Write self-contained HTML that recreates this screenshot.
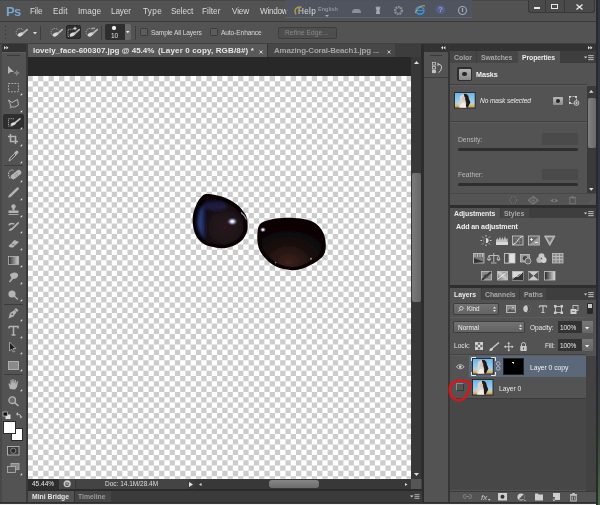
<!DOCTYPE html>
<html><head><meta charset="utf-8">
<style>
*{margin:0;padding:0;box-sizing:border-box}
html,body{width:600px;height:505px;overflow:hidden;background:#3a3a3a;font-family:"Liberation Sans",sans-serif;}
.a{position:absolute}
.t{position:absolute;white-space:nowrap;line-height:1;will-change:transform}
svg{position:absolute;overflow:visible}
.clip{overflow:hidden}
</style></head><body>
<div class="a" style="left:0px;top:0px;width:600px;height:505px;background:#3c3c3c;"></div>
<div class="a" style="left:0px;top:0px;width:596px;height:21px;background:#525252;"></div>
<div class="a" style="left:0px;top:0px;width:596px;height:1px;background:#474747;"></div>
<div class="a" style="left:0px;top:21px;width:596px;height:1px;background:#3a3a3a;"></div>
<div class="t" style="left:5.6px;top:4.70px;font-size:13px;color:#78a4d0;font-weight:bold;font-style:normal;letter-spacing:0px;letter-spacing:-0.6px">Ps</div>
<div class="t" style="left:29.94px;top:7.66px;font-size:8.2px;color:#dadada;font-weight:normal;font-style:normal;letter-spacing:-0.232px;">File</div>
<div class="t" style="left:53.24px;top:7.66px;font-size:8.2px;color:#dadada;font-weight:normal;font-style:normal;letter-spacing:0.124px;">Edit</div>
<div class="t" style="left:77.66px;top:7.66px;font-size:8.2px;color:#dadada;font-weight:normal;font-style:normal;letter-spacing:0.078px;">Image</div>
<div class="t" style="left:110.94px;top:7.66px;font-size:8.2px;color:#dadada;font-weight:normal;font-style:normal;letter-spacing:-0.155px;">Layer</div>
<div class="t" style="left:142.64px;top:7.66px;font-size:8.2px;color:#dadada;font-weight:normal;font-style:normal;letter-spacing:0.313px;">Type</div>
<div class="t" style="left:170.53px;top:7.66px;font-size:8.2px;color:#dadada;font-weight:normal;font-style:normal;letter-spacing:-0.117px;">Select</div>
<div class="t" style="left:201.84px;top:7.66px;font-size:8.2px;color:#dadada;font-weight:normal;font-style:normal;letter-spacing:0.051px;">Filter</div>
<div class="t" style="left:231.88px;top:7.66px;font-size:8.2px;color:#dadada;font-weight:normal;font-style:normal;letter-spacing:-0.177px;">View</div>
<div class="t" style="left:259.68px;top:7.66px;font-size:8.2px;color:#dadada;font-weight:normal;font-style:normal;letter-spacing:-0.274px;">Window</div>
<div class="a" style="left:285.8px;top:0px;width:186.5px;height:18.4px;background:rgba(78,84,98,0.82);border-bottom:0.8px solid rgba(110,118,134,0.45)"></div>
<div class="t" style="left:297.54px;top:7.66px;font-size:8.2px;color:#dadada;font-weight:normal;font-style:normal;letter-spacing:0.311px;">Help</div>
<svg style="left:293px;top:4.5px" width="11" height="11" viewBox="0 0 11 11"><path d="M3 9.5 Q1 6 3 3.5 Q5.5 1 8.5 2.5" stroke="#b89848" stroke-width="1.4" fill="none"/><path d="M4.5 6 L9.5 6" stroke="#a08838" stroke-width="1"/></svg>
<div class="t" style="left:318px;top:7.24px;font-size:5.5px;color:#8e949e;font-weight:bold;font-style:normal;letter-spacing:0px;">English</div>
<svg style="left:324.5px;top:15px" width="4" height="3" viewBox="0 0 4 3"><path d="M0 0 L4 0 L2 2z" fill="#aaa"/></svg>
<svg style="left:351px;top:8px" width="11" height="6" viewBox="0 0 11 6"><path d="M1 5 Q1 1 4 1 L7 1 Q10 1 10 5z" fill="#8a8f98"/></svg>
<svg style="left:374px;top:5px" width="8" height="10" viewBox="0 0 8 10"><path d="M2 9 L6 9 L5.5 5 Q7 3 6 1 L5 2.5 L4 1 L3 2.5 L2 1 Q1 3 2.5 5z" fill="#a4a8b0"/></svg>
<svg style="left:393px;top:4.5px" width="11" height="11" viewBox="0 0 11 11"><circle cx="5.5" cy="5.5" r="3.4" stroke="#8c9098" stroke-width="2.4" fill="none" stroke-dasharray="1.8 0.7"/><circle cx="5.5" cy="5.5" r="1.2" fill="#4a5060"/></svg>
<svg style="left:414px;top:3.5px" width="12" height="12" viewBox="0 0 12 12"><ellipse cx="6" cy="6.5" rx="4" ry="3.6" stroke="#3b8fd8" stroke-width="1.6" fill="none"/><path d="M2.5 6.5 L9.5 6.5" stroke="#3b8fd8" stroke-width="1.2"/><path d="M1 9 Q6 0 11 2" stroke="#d8b040" stroke-width="0.9" fill="none"/></svg>
<svg style="left:434.5px;top:4px" width="11" height="11" viewBox="0 0 11 11"><circle cx="5.5" cy="5.5" r="4.5" fill="#55618a"/><text x="5.5" y="8.3" font-size="7.5" text-anchor="middle" fill="#95a3c8" font-family="Liberation Sans" font-weight="bold">?</text></svg>
<svg style="left:456.5px;top:4.5px" width="11" height="11" viewBox="0 0 11 11"><circle cx="5.5" cy="5.5" r="4" stroke="#a4a8b0" stroke-width="1.1" fill="none"/><path d="M5.5 3 L5.5 7" stroke="#a4a8b0" stroke-width="1.2"/></svg>
<div class="a" style="left:528px;top:0px;width:67px;height:12.5px;background:#4a4a4a;border:1px solid #383838;border-top:none;border-radius:0 0 3px 3px"></div>
<div class="a" style="left:545px;top:0px;width:1px;height:12px;background:#393939;"></div>
<div class="a" style="left:563.5px;top:0px;width:1px;height:12px;background:#393939;"></div>
<div class="a" style="left:533.5px;top:6.5px;width:6.5px;height:2px;background:#e8e8e8;"></div>
<div class="a" style="left:551px;top:4.3px;width:7px;height:4.6px;background:transparent;border:1.3px solid #e8e8e8"></div>
<svg style="left:575.5px;top:3.5px" width="7" height="6" viewBox="0 0 7 6"><path d="M0.5 0.5 L6.5 5.5 M6.5 0.5 L0.5 5.5" stroke="#e8e8e8" stroke-width="1.4"/></svg>
<div class="a" style="left:0px;top:22px;width:596px;height:20.5px;background:#535353;"></div>
<div class="a" style="left:0px;top:42.5px;width:596px;height:1px;background:#404040;"></div>
<div class="a" style="left:4.5px;top:26.0px;width:1.2px;height:1.2px;background:#2e2e2e;"></div>
<div class="a" style="left:4.5px;top:29.5px;width:1.2px;height:1.2px;background:#2e2e2e;"></div>
<div class="a" style="left:4.5px;top:33.5px;width:1.2px;height:1.2px;background:#2e2e2e;"></div>
<div class="a" style="left:4.5px;top:37.5px;width:1.2px;height:1.2px;background:#2e2e2e;"></div>
<svg style="left:14.8px;top:26.8px" width="13" height="10" viewBox="0 0 13 10"><path d="M5.5 9.2 A3.9 3.9 0 1 1 8.3 3.2" stroke="#b8b8b8" stroke-width="0.85" fill="none" stroke-dasharray="1.3 0.9"/><ellipse cx="5.6" cy="7.4" rx="3.1" ry="1.7" transform="rotate(-25 5.6 7.4)" fill="#d8d8d8"/><path d="M8 6.2 L12.2 2.6" stroke="#b8b8b8" stroke-width="1.8" stroke-linecap="round"/></svg>
<svg style="left:33px;top:31.5px" width="4" height="3" viewBox="0 0 4 3"><path d="M0 0 L4 0 L2 2.5z" fill="#ddd"/></svg>
<div class="a" style="left:40.2px;top:25.5px;width:1px;height:14px;background:#3e3e3e;"></div>
<svg style="left:50.3px;top:26.8px" width="13" height="10" viewBox="0 0 13 10"><path d="M5.5 9.2 A3.9 3.9 0 1 1 8.3 3.2" stroke="#b8b8b8" stroke-width="0.85" fill="none" stroke-dasharray="1.3 0.9"/><ellipse cx="5.6" cy="7.4" rx="3.1" ry="1.7" transform="rotate(-25 5.6 7.4)" fill="#d8d8d8"/><path d="M8 6.2 L12.2 2.6" stroke="#b8b8b8" stroke-width="1.8" stroke-linecap="round"/></svg>
<div class="a" style="left:66.4px;top:25px;width:14.6px;height:14px;background:#2f2f2f;border-radius:2px;border:1px solid #262626"></div>
<svg style="left:67.2px;top:27px" width="13" height="10" viewBox="0 0 13 10"><path d="M6.5 2.3 L1 2.3 L1 9.5 L5 9.5" stroke="#b8b8b8" stroke-width="0.8" fill="none" stroke-dasharray="1.2 0.9"/><ellipse cx="5.6" cy="7.4" rx="3.1" ry="1.7" transform="rotate(-25 5.6 7.4)" fill="#d8d8d8"/><path d="M8 6.2 L12.2 2.6" stroke="#b8b8b8" stroke-width="1.8" stroke-linecap="round"/><path d="M8 -0.3 L8 3.1 M6.3 1.4 L9.7 1.4" stroke="#e8e8e8" stroke-width="0.9"/></svg>
<svg style="left:85px;top:26.8px" width="13" height="10" viewBox="0 0 13 10"><path d="M5.5 9.2 A3.9 3.9 0 1 1 8.3 3.2" stroke="#b8b8b8" stroke-width="0.85" fill="none" stroke-dasharray="1.3 0.9"/><ellipse cx="5.6" cy="7.4" rx="3.1" ry="1.7" transform="rotate(-25 5.6 7.4)" fill="#d8d8d8"/><path d="M8 6.2 L12.2 2.6" stroke="#b8b8b8" stroke-width="1.8" stroke-linecap="round"/><path d="M7 1.2 L10 1.2" stroke="#d0d0d0" stroke-width="0.9"/></svg>
<div class="a" style="left:101px;top:25.5px;width:1px;height:14px;background:#3e3e3e;"></div>
<div class="a" style="left:105px;top:24.4px;width:19.5px;height:15.2px;background:#2e2e2e;border-radius:2px 0 0 2px"></div>
<div class="a" style="left:111.9px;top:25.7px;width:4.6px;height:4.4px;background:#f4f4f4;border-radius:50%;box-shadow:0 0 1px #aaa"></div>
<div class="t" style="left:110.9px;top:33.30px;font-size:6.5px;color:#e4e4e4;font-weight:normal;font-style:normal;letter-spacing:0px;">10</div>
<div class="a" style="left:124.5px;top:24.4px;width:6px;height:15.2px;background:#6a6a6a;border-radius:0 2px 2px 0"></div>
<svg style="left:125.8px;top:31px" width="3.5" height="2.5" viewBox="0 0 3.5 2.5"><path d="M0 0 L3.5 0 L1.75 2.2z" fill="#eee"/></svg>
<div class="a" style="left:135px;top:25.5px;width:1px;height:14px;background:#3e3e3e;"></div>
<div class="a" style="left:139.6px;top:28px;width:8px;height:8.4px;background:#5c5c5c;border:1px solid #3a3a3a;border-radius:1.5px"></div>
<div class="t" style="left:151.2px;top:30.21px;font-size:6.6px;color:#d8d8d8;font-weight:normal;font-style:normal;letter-spacing:-0.12px;">Sample All Layers</div>
<div class="a" style="left:210px;top:28px;width:8px;height:8.4px;background:#5c5c5c;border:1px solid #3a3a3a;border-radius:1.5px"></div>
<div class="t" style="left:221.2px;top:30.21px;font-size:6.6px;color:#d8d8d8;font-weight:normal;font-style:normal;letter-spacing:-0.1px;">Auto-Enhance</div>
<div class="a" style="left:278px;top:27.3px;width:58.7px;height:11.4px;background:#4e4e4e;border:1px solid #3e3e3e;border-radius:2px"></div>
<div class="t" style="left:285px;top:30.21px;font-size:6.6px;color:#8a8a8a;font-weight:normal;font-style:normal;letter-spacing:0.1px;">Refine Edge...</div>
<div class="a" style="left:0px;top:43.5px;width:1.7px;height:459px;background:#484848;"></div>
<div class="a" style="left:1.7px;top:43.5px;width:24px;height:8px;background:#333333;"></div>
<svg style="left:3.8px;top:46px" width="5" height="3.5" viewBox="0 0 5 3.5"><path d="M0 0 L2 1.7 L0 3.4z M2.4 0 L4.4 1.7 L2.4 3.4z" fill="#e8e8e8"/></svg>
<div class="a" style="left:1.7px;top:51.5px;width:24px;height:451px;background:#535353;"></div>
<div class="a" style="left:1.7px;top:51.5px;width:24px;height:0.6px;background:#5e5e5e;"></div>
<div class="a" style="left:7px;top:55px;width:12.8px;height:0.8px;background:#3a3a3a;"></div>
<div class="a" style="left:25.7px;top:43.5px;width:2.3px;height:460px;background:#3a3a3a;"></div>
<svg style="left:7.7px;top:65.7px" width="12" height="10.5" viewBox="0 0 12 10.5"><path d="M0 0 L0 8 L2.5 6 L6 6z" fill="#b4b4b4"/><path d="M6.2 7 L11.2 7" stroke="#b4b4b4" stroke-width="0.9"/><rect x="8.2" y="4.6" width="1.1" height="1.1" fill="#b4b4b4"/><rect x="8.2" y="8.3" width="1.1" height="1.1" fill="#b4b4b4"/></svg>
<svg style="left:7.7px;top:83px" width="12" height="10.5" viewBox="0 0 12 10.5"><rect x="0.5" y="0.5" width="10" height="8.3" stroke="#b4b4b4" stroke-width="0.9" fill="none" stroke-dasharray="1.8 1.2"/></svg>
<svg style="left:7.7px;top:99px" width="12" height="10.5" viewBox="0 0 12 10.5"><path d="M0.5 1 L4 3.5 L9.5 0.5 L10.5 6 Q7 9 3 8 Q2.5 5 0.5 1z" stroke="#b4b4b4" stroke-width="1" fill="none"/><path d="M3 8 L2 9.5" stroke="#b4b4b4" stroke-width="0.8"/></svg>
<svg style="left:7.7px;top:117.5px" width="12" height="10.5" viewBox="0 0 12 10.5"><path d="M5.9 0.7 L0.5 0.7 L0.5 8.1 L5 8.1" stroke="#b4b4b4" stroke-width="0.8" fill="none" stroke-dasharray="1.2 0.9"/><ellipse cx="5.3" cy="5.9" rx="3" ry="1.5" transform="rotate(-25 5.3 5.9)" fill="#d8d8d8"/><path d="M7.6 4.4 L11.9 0.9" stroke="#b4b4b4" stroke-width="1.8" stroke-linecap="round"/></svg>
<svg style="left:7.7px;top:133.5px" width="12" height="10.5" viewBox="0 0 12 10.5"><path d="M2.5 0 L2.5 7.5 L10 7.5 M0 2.5 L7.5 2.5 L7.5 10" stroke="#b4b4b4" stroke-width="1.6" fill="none"/></svg>
<svg style="left:7.7px;top:150.8px" width="12" height="10.5" viewBox="0 0 12 10.5"><path d="M1 10 L2 7 L6.5 2.5 L8 4 L3.5 8.5z" stroke="#b4b4b4" stroke-width="1" fill="none"/><path d="M6 2 L8.5 -0.5 Q10.5 -0.5 10.5 1.5 L8.5 4z" fill="#b4b4b4"/></svg>
<div class="a" style="left:3.4px;top:114.2px;width:20.4px;height:14.6px;background:#2e2e2e;border-radius:2px"></div>
<svg style="left:7.7px;top:117.5px" width="12" height="10.5" viewBox="0 0 12 10.5"><path d="M5.9 0.7 L0.5 0.7 L0.5 8.1 L5 8.1" stroke="#c4c4c4" stroke-width="0.8" fill="none" stroke-dasharray="1.2 0.9"/><ellipse cx="5.3" cy="5.9" rx="3" ry="1.5" transform="rotate(-25 5.3 5.9)" fill="#d8d8d8"/><path d="M7.6 4.4 L11.9 0.9" stroke="#c4c4c4" stroke-width="1.8" stroke-linecap="round"/></svg>
<div class="a" style="left:4px;top:165px;width:19px;height:0.8px;background:#3c3c3c;"></div>
<svg style="left:7.7px;top:169.3px" width="12" height="11" viewBox="0 0 12 11"><path d="M2.2 9.5 Q-0.8 6 1.5 2.5 Q3.5 0 6 1.8" stroke="#b4b4b4" stroke-width="1.1" fill="none" stroke-dasharray="1.6 0.8"/><rect x="2" y="3" width="12" height="5.2" rx="2.6" transform="rotate(-38 8 5.6)" fill="#b4b4b4"/><g fill="#7a7a7a"><circle cx="7" cy="5.5" r="0.5"/><circle cx="8.6" cy="4.6" r="0.5"/><circle cx="7.8" cy="7" r="0.5"/><circle cx="9.4" cy="6" r="0.5"/></g></svg>
<svg style="left:7.7px;top:187px" width="12" height="11" viewBox="0 0 12 11"><path d="M2.6 8.4 L9.6 1.6" stroke="#b4b4b4" stroke-width="2.6" stroke-linecap="round"/><path d="M0.2 10.8 L1 7.6 L3.4 9.8z" fill="#b4b4b4"/></svg>
<svg style="left:7.7px;top:203.8px" width="12" height="11" viewBox="0 0 12 11"><circle cx="5.5" cy="2.5" r="2.2" fill="#b4b4b4"/><rect x="4.5" y="3.5" width="2" height="3" fill="#b4b4b4"/><rect x="0.5" y="6.5" width="10" height="2.5" fill="#b4b4b4"/><rect x="0.5" y="10" width="10" height="0.9" fill="#b4b4b4"/></svg>
<svg style="left:7.7px;top:221.6px" width="12" height="11" viewBox="0 0 12 11"><path d="M0.8 2.8 Q3 0.6 6.2 2" stroke="#b4b4b4" stroke-width="1.6" fill="none"/><path d="M0.2 3.2 L2 1.2 L2.4 3.6z" fill="#b4b4b4"/><path d="M0.5 9 Q1.5 5.8 4.6 6 Q5 8.8 0.5 9z" fill="#b4b4b4"/><path d="M4.2 6.8 L10.2 0.8" stroke="#b4b4b4" stroke-width="1.7" stroke-linecap="round"/></svg>
<svg style="left:7.7px;top:238.8px" width="12" height="11" viewBox="0 0 12 11"><path d="M0.5 7 L6.5 1 L11 3 L5 8.5 Q2 9 0.5 7z" fill="#b4b4b4"/><path d="M3 4.5 L7.5 6.5" stroke="#535353" stroke-width="0.6"/></svg>
<svg style="left:7.7px;top:256px" width="12" height="11" viewBox="0 0 12 11"><defs><linearGradient id="g1"><stop offset="0" stop-color="#333"/><stop offset="1" stop-color="#ccc"/></linearGradient></defs><rect x="0.5" y="0.5" width="10" height="8" fill="url(#g1)" stroke="#b4b4b4" stroke-width="0.8"/></svg>
<svg style="left:7.7px;top:271.8px" width="12" height="11" viewBox="0 0 12 11"><path d="M6 0.5 Q11 0.5 10 4 Q9 7 5 7 L2 10.5 L1 9.5 L3.5 6 Q1 3 3 1.5z" fill="#b4b4b4"/></svg>
<svg style="left:7.7px;top:289.6px" width="12" height="11" viewBox="0 0 12 11"><circle cx="4" cy="4" r="3.6" fill="#b4b4b4"/><path d="M6 6 L10 9.5" stroke="#b4b4b4" stroke-width="1.4"/></svg>
<div class="a" style="left:4px;top:304.4px;width:19px;height:0.8px;background:#3c3c3c;"></div>
<svg style="left:7.7px;top:308px" width="12" height="11" viewBox="0 0 12 11"><path d="M0.5 10.5 L2 5 L6.5 2 L8.5 4 L5.5 8.5z" fill="#b4b4b4"/><path d="M6.5 1.5 L8 0 L10.5 2.5 L9 4z" fill="#b4b4b4"/><circle cx="4.2" cy="6.2" r="0.9" fill="#535353"/></svg>
<svg style="left:7.7px;top:325.6px" width="12" height="11" viewBox="0 0 12 11"><path d="M1 0.5 L10 0.5 L10 2.5 M1 0.5 L1 2.5 M5.5 0.5 L5.5 9 M3.5 9 L7.5 9" stroke="#b4b4b4" stroke-width="1.5" fill="none"/></svg>
<svg style="left:7.7px;top:341.6px" width="12" height="11" viewBox="0 0 12 11"><path d="M1.5 0 L1.5 9 L3.5 7 L5 10 L6.5 9.5 L5 6.5 L8 6.5z" fill="#1e1e1e" stroke="#b4b4b4" stroke-width="0.8"/></svg>
<svg style="left:7.7px;top:360.6px" width="12" height="11" viewBox="0 0 12 11"><rect x="0.5" y="0.5" width="10" height="8" fill="#8a8a8a" stroke="#b4b4b4" stroke-width="0.9"/></svg>
<div class="a" style="left:4px;top:374.3px;width:19px;height:0.8px;background:#3c3c3c;"></div>
<svg style="left:7.7px;top:379px" width="12" height="11" viewBox="0 0 12 11"><path d="M2 10 L0.5 5 L1 4 L2.5 6 L2.5 1 L3.5 0.5 L4 5 L4.5 0 L5.5 0 L6 5 L6.8 0.7 L7.8 1 L7.8 5.5 L9 2 L10 2.5 L9 8 L7 10.5z" fill="#b4b4b4"/></svg>
<svg style="left:7.7px;top:395.6px" width="12" height="11" viewBox="0 0 12 11"><circle cx="4.2" cy="4.2" r="3.3" stroke="#b4b4b4" stroke-width="1.3" fill="#6a6a6a"/><path d="M6.5 6.5 L10.5 10" stroke="#b4b4b4" stroke-width="1.6"/></svg>
<svg style="left:19.5px;top:93px" width="2.2" height="2.2" viewBox="0 0 2.2 2.2"><path d="M2.2 0 L2.2 2.2 L0 2.2z" fill="#ddd"/></svg>
<svg style="left:19.5px;top:109.5px" width="2.2" height="2.2" viewBox="0 0 2.2 2.2"><path d="M2.2 0 L2.2 2.2 L0 2.2z" fill="#ddd"/></svg>
<svg style="left:19.5px;top:127px" width="2.2" height="2.2" viewBox="0 0 2.2 2.2"><path d="M2.2 0 L2.2 2.2 L0 2.2z" fill="#ddd"/></svg>
<svg style="left:19.5px;top:144px" width="2.2" height="2.2" viewBox="0 0 2.2 2.2"><path d="M2.2 0 L2.2 2.2 L0 2.2z" fill="#ddd"/></svg>
<svg style="left:19.5px;top:160.5px" width="2.2" height="2.2" viewBox="0 0 2.2 2.2"><path d="M2.2 0 L2.2 2.2 L0 2.2z" fill="#ddd"/></svg>
<svg style="left:19.5px;top:180px" width="2.2" height="2.2" viewBox="0 0 2.2 2.2"><path d="M2.2 0 L2.2 2.2 L0 2.2z" fill="#ddd"/></svg>
<svg style="left:19.5px;top:197.5px" width="2.2" height="2.2" viewBox="0 0 2.2 2.2"><path d="M2.2 0 L2.2 2.2 L0 2.2z" fill="#ddd"/></svg>
<svg style="left:19.5px;top:214.5px" width="2.2" height="2.2" viewBox="0 0 2.2 2.2"><path d="M2.2 0 L2.2 2.2 L0 2.2z" fill="#ddd"/></svg>
<svg style="left:19.5px;top:231px" width="2.2" height="2.2" viewBox="0 0 2.2 2.2"><path d="M2.2 0 L2.2 2.2 L0 2.2z" fill="#ddd"/></svg>
<svg style="left:19.5px;top:247.5px" width="2.2" height="2.2" viewBox="0 0 2.2 2.2"><path d="M2.2 0 L2.2 2.2 L0 2.2z" fill="#ddd"/></svg>
<svg style="left:19.5px;top:265px" width="2.2" height="2.2" viewBox="0 0 2.2 2.2"><path d="M2.2 0 L2.2 2.2 L0 2.2z" fill="#ddd"/></svg>
<svg style="left:19.5px;top:282px" width="2.2" height="2.2" viewBox="0 0 2.2 2.2"><path d="M2.2 0 L2.2 2.2 L0 2.2z" fill="#ddd"/></svg>
<svg style="left:19.5px;top:299px" width="2.2" height="2.2" viewBox="0 0 2.2 2.2"><path d="M2.2 0 L2.2 2.2 L0 2.2z" fill="#ddd"/></svg>
<svg style="left:19.5px;top:318.5px" width="2.2" height="2.2" viewBox="0 0 2.2 2.2"><path d="M2.2 0 L2.2 2.2 L0 2.2z" fill="#ddd"/></svg>
<svg style="left:19.5px;top:335.5px" width="2.2" height="2.2" viewBox="0 0 2.2 2.2"><path d="M2.2 0 L2.2 2.2 L0 2.2z" fill="#ddd"/></svg>
<svg style="left:19.5px;top:352px" width="2.2" height="2.2" viewBox="0 0 2.2 2.2"><path d="M2.2 0 L2.2 2.2 L0 2.2z" fill="#ddd"/></svg>
<svg style="left:19.5px;top:369px" width="2.2" height="2.2" viewBox="0 0 2.2 2.2"><path d="M2.2 0 L2.2 2.2 L0 2.2z" fill="#ddd"/></svg>
<svg style="left:19.5px;top:388.5px" width="2.2" height="2.2" viewBox="0 0 2.2 2.2"><path d="M2.2 0 L2.2 2.2 L0 2.2z" fill="#ddd"/></svg>
<svg style="left:3px;top:411.5px" width="8" height="7" viewBox="0 0 8 7"><rect x="2.5" y="2.5" width="5" height="4.5" fill="#ddd"/><rect x="0" y="0" width="4.5" height="4" fill="#111" stroke="#ddd" stroke-width="0.6"/></svg>
<svg style="left:14.5px;top:410.5px" width="7.5" height="7" viewBox="0 0 7.5 7"><path d="M1 3 L3 1 L3 5z" fill="#bbb"/><path d="M2.5 3 Q6 3 6 6.5" stroke="#bbb" stroke-width="1" fill="none"/><path d="M4.5 5.5 L7.5 5.5 L6 7.5z" fill="#bbb"/></svg>
<div class="a" style="left:10.5px;top:428.3px;width:12.3px;height:12.9px;background:#ffffff;border:0.8px solid #2a2a2a"></div>
<div class="a" style="left:3.4px;top:421.2px;width:12.8px;height:13.3px;background:#ffffff;border:0.8px solid #2a2a2a"></div>
<svg style="left:7px;top:446px" width="12.5" height="9.5" viewBox="0 0 12.5 9.5"><rect x="0.5" y="0.5" width="11.5" height="8.5" fill="#3e3e3e" stroke="#b4b4b4" stroke-width="0.9"/><circle cx="6.25" cy="4.75" r="2.6" fill="#2a2a2a" stroke="#999" stroke-width="0.8"/></svg>
<svg style="left:7px;top:463.2px" width="12.5" height="10" viewBox="0 0 12.5 10"><rect x="4" y="0.5" width="8" height="6" fill="#888" stroke="#b4b4b4" stroke-width="0.8"/><rect x="0.5" y="3.5" width="8" height="6" fill="#5a5a5a" stroke="#b4b4b4" stroke-width="0.8"/></svg>
<svg style="left:19.5px;top:472.5px" width="2.2" height="2.2" viewBox="0 0 2.2 2.2"><path d="M2.2 0 L2.2 2.2 L0 2.2z" fill="#ddd"/></svg>
<div class="a" style="left:28px;top:44px;width:393px;height:12.5px;background:#3d3d3d;"></div>
<div class="a" style="left:28px;top:44px;width:238.7px;height:12.5px;background:#595959;"></div>
<div class="a" style="left:266.7px;top:44px;width:1px;height:12.5px;background:#333;"></div>
<div class="a" style="left:267.7px;top:44px;width:127.3px;height:12.5px;background:#474747;"></div>
<div class="t" style="left:33.2px;top:46.83px;font-size:8px;color:#e6e6e6;font-weight:bold;font-style:normal;letter-spacing:-0.01px;">lovely_face-600307.jpg @ 45.4%</div>
<div class="t" style="left:157.6px;top:46.83px;font-size:8px;color:#e6e6e6;font-weight:bold;font-style:normal;letter-spacing:0.15px;">(Layer 0 copy, RGB/8#) *</div>
<svg style="left:258.8px;top:49.5px" width="4" height="4" viewBox="0 0 4 4"><path d="M0.5 0.5 L3.5 3.5 M3.5 0.5 L0.5 3.5" stroke="#ddd" stroke-width="0.9"/></svg>
<div class="t" style="left:273.7px;top:46.91px;font-size:7.9px;color:#a4a4a4;font-weight:bold;font-style:normal;letter-spacing:-0.147px;">Amazing-Coral-Beach1.jpg ...</div>
<svg style="left:386.8px;top:49.5px" width="4" height="4" viewBox="0 0 4 4"><path d="M0.5 0.5 L3.5 3.5 M3.5 0.5 L0.5 3.5" stroke="#ccc" stroke-width="0.9"/></svg>
<div class="a" style="left:27.5px;top:56.5px;width:384px;height:422.2px;background:#282828;"></div>
<div class="a" style="left:27.5px;top:76px;width:383.5px;height:402.7px;background:#ffffff;"></div>
<svg style="left:27.5px;top:76px" width="383.5" height="402.7" viewBox="0 0 383.5 402.7"><path d="M0.00 0.00h4.77v5.27h-4.77zM10.03 0.00h5.27v5.27h-5.27zM20.56 0.00h5.27v5.27h-5.27zM31.09 0.00h5.27v5.27h-5.27zM41.62 0.00h5.27v5.27h-5.27zM52.15 0.00h5.27v5.27h-5.27zM62.68 0.00h5.27v5.27h-5.27zM73.21 0.00h5.27v5.27h-5.27zM83.74 0.00h5.27v5.27h-5.27zM94.27 0.00h5.27v5.27h-5.27zM104.80 0.00h5.26v5.27h-5.26zM115.33 0.00h5.26v5.27h-5.26zM125.86 0.00h5.26v5.27h-5.26zM136.39 0.00h5.26v5.27h-5.26zM146.92 0.00h5.26v5.27h-5.26zM157.45 0.00h5.26v5.27h-5.26zM167.98 0.00h5.26v5.27h-5.26zM178.51 0.00h5.26v5.27h-5.26zM189.04 0.00h5.26v5.27h-5.26zM199.57 0.00h5.26v5.27h-5.26zM210.10 0.00h5.26v5.27h-5.26zM220.63 0.00h5.26v5.27h-5.26zM231.16 0.00h5.26v5.27h-5.26zM241.69 0.00h5.26v5.27h-5.26zM252.22 0.00h5.26v5.27h-5.26zM262.75 0.00h5.26v5.27h-5.26zM273.28 0.00h5.26v5.27h-5.26zM283.81 0.00h5.26v5.27h-5.26zM294.34 0.00h5.26v5.27h-5.26zM304.87 0.00h5.26v5.27h-5.26zM315.40 0.00h5.26v5.27h-5.26zM325.93 0.00h5.26v5.27h-5.26zM336.46 0.00h5.26v5.27h-5.26zM346.99 0.00h5.26v5.27h-5.26zM357.52 0.00h5.26v5.27h-5.26zM368.05 0.00h5.26v5.27h-5.26zM378.58 0.00h4.92v5.27h-4.92zM4.77 5.27h5.27v5.27h-5.27zM15.30 5.27h5.27v5.27h-5.27zM25.83 5.27h5.27v5.27h-5.27zM36.35 5.27h5.26v5.27h-5.26zM46.88 5.27h5.27v5.27h-5.27zM57.41 5.27h5.27v5.27h-5.27zM67.94 5.27h5.27v5.27h-5.27zM78.47 5.27h5.27v5.27h-5.27zM89.00 5.27h5.27v5.27h-5.27zM99.53 5.27h5.26v5.27h-5.26zM110.06 5.27h5.26v5.27h-5.26zM120.59 5.27h5.26v5.27h-5.26zM131.12 5.27h5.26v5.27h-5.26zM141.66 5.27h5.26v5.27h-5.26zM152.19 5.27h5.26v5.27h-5.26zM162.72 5.27h5.26v5.27h-5.26zM173.24 5.27h5.26v5.27h-5.26zM183.77 5.27h5.26v5.27h-5.26zM194.30 5.27h5.26v5.27h-5.26zM204.83 5.27h5.26v5.27h-5.26zM215.36 5.27h5.26v5.27h-5.26zM225.89 5.27h5.26v5.27h-5.26zM236.42 5.27h5.26v5.27h-5.26zM246.95 5.27h5.26v5.27h-5.26zM257.48 5.27h5.26v5.27h-5.26zM268.01 5.27h5.26v5.27h-5.26zM278.54 5.27h5.26v5.27h-5.26zM289.07 5.27h5.26v5.27h-5.26zM299.60 5.27h5.26v5.27h-5.26zM310.13 5.27h5.26v5.27h-5.26zM320.66 5.27h5.26v5.27h-5.26zM331.19 5.27h5.26v5.27h-5.26zM341.72 5.27h5.26v5.27h-5.26zM352.25 5.27h5.26v5.27h-5.26zM362.78 5.27h5.26v5.27h-5.26zM373.31 5.27h5.26v5.27h-5.26zM0.00 10.53h4.77v5.27h-4.77zM10.03 10.53h5.27v5.27h-5.27zM20.56 10.53h5.27v5.27h-5.27zM31.09 10.53h5.27v5.27h-5.27zM41.62 10.53h5.27v5.27h-5.27zM52.15 10.53h5.27v5.27h-5.27zM62.68 10.53h5.27v5.27h-5.27zM73.21 10.53h5.27v5.27h-5.27zM83.74 10.53h5.27v5.27h-5.27zM94.27 10.53h5.27v5.27h-5.27zM104.80 10.53h5.26v5.27h-5.26zM115.33 10.53h5.26v5.27h-5.26zM125.86 10.53h5.26v5.27h-5.26zM136.39 10.53h5.26v5.27h-5.26zM146.92 10.53h5.26v5.27h-5.26zM157.45 10.53h5.26v5.27h-5.26zM167.98 10.53h5.26v5.27h-5.26zM178.51 10.53h5.26v5.27h-5.26zM189.04 10.53h5.26v5.27h-5.26zM199.57 10.53h5.26v5.27h-5.26zM210.10 10.53h5.26v5.27h-5.26zM220.63 10.53h5.26v5.27h-5.26zM231.16 10.53h5.26v5.27h-5.26zM241.69 10.53h5.26v5.27h-5.26zM252.22 10.53h5.26v5.27h-5.26zM262.75 10.53h5.26v5.27h-5.26zM273.28 10.53h5.26v5.27h-5.26zM283.81 10.53h5.26v5.27h-5.26zM294.34 10.53h5.26v5.27h-5.26zM304.87 10.53h5.26v5.27h-5.26zM315.40 10.53h5.26v5.27h-5.26zM325.93 10.53h5.26v5.27h-5.26zM336.46 10.53h5.26v5.27h-5.26zM346.99 10.53h5.26v5.27h-5.26zM357.52 10.53h5.26v5.27h-5.26zM368.05 10.53h5.26v5.27h-5.26zM378.58 10.53h4.92v5.27h-4.92zM4.77 15.80h5.27v5.27h-5.27zM15.30 15.80h5.27v5.27h-5.27zM25.83 15.80h5.27v5.27h-5.27zM36.35 15.80h5.26v5.27h-5.26zM46.88 15.80h5.27v5.27h-5.27zM57.41 15.80h5.27v5.27h-5.27zM67.94 15.80h5.27v5.27h-5.27zM78.47 15.80h5.27v5.27h-5.27zM89.00 15.80h5.27v5.27h-5.27zM99.53 15.80h5.26v5.27h-5.26zM110.06 15.80h5.26v5.27h-5.26zM120.59 15.80h5.26v5.27h-5.26zM131.12 15.80h5.26v5.27h-5.26zM141.66 15.80h5.26v5.27h-5.26zM152.19 15.80h5.26v5.27h-5.26zM162.72 15.80h5.26v5.27h-5.26zM173.24 15.80h5.26v5.27h-5.26zM183.77 15.80h5.26v5.27h-5.26zM194.30 15.80h5.26v5.27h-5.26zM204.83 15.80h5.26v5.27h-5.26zM215.36 15.80h5.26v5.27h-5.26zM225.89 15.80h5.26v5.27h-5.26zM236.42 15.80h5.26v5.27h-5.26zM246.95 15.80h5.26v5.27h-5.26zM257.48 15.80h5.26v5.27h-5.26zM268.01 15.80h5.26v5.27h-5.26zM278.54 15.80h5.26v5.27h-5.26zM289.07 15.80h5.26v5.27h-5.26zM299.60 15.80h5.26v5.27h-5.26zM310.13 15.80h5.26v5.27h-5.26zM320.66 15.80h5.26v5.27h-5.26zM331.19 15.80h5.26v5.27h-5.26zM341.72 15.80h5.26v5.27h-5.26zM352.25 15.80h5.26v5.27h-5.26zM362.78 15.80h5.26v5.27h-5.26zM373.31 15.80h5.26v5.27h-5.26zM0.00 21.06h4.77v5.27h-4.77zM10.03 21.06h5.27v5.27h-5.27zM20.56 21.06h5.27v5.27h-5.27zM31.09 21.06h5.27v5.27h-5.27zM41.62 21.06h5.27v5.27h-5.27zM52.15 21.06h5.27v5.27h-5.27zM62.68 21.06h5.27v5.27h-5.27zM73.21 21.06h5.27v5.27h-5.27zM83.74 21.06h5.27v5.27h-5.27zM94.27 21.06h5.27v5.27h-5.27zM104.80 21.06h5.26v5.27h-5.26zM115.33 21.06h5.26v5.27h-5.26zM125.86 21.06h5.26v5.27h-5.26zM136.39 21.06h5.26v5.27h-5.26zM146.92 21.06h5.26v5.27h-5.26zM157.45 21.06h5.26v5.27h-5.26zM167.98 21.06h5.26v5.27h-5.26zM178.51 21.06h5.26v5.27h-5.26zM189.04 21.06h5.26v5.27h-5.26zM199.57 21.06h5.26v5.27h-5.26zM210.10 21.06h5.26v5.27h-5.26zM220.63 21.06h5.26v5.27h-5.26zM231.16 21.06h5.26v5.27h-5.26zM241.69 21.06h5.26v5.27h-5.26zM252.22 21.06h5.26v5.27h-5.26zM262.75 21.06h5.26v5.27h-5.26zM273.28 21.06h5.26v5.27h-5.26zM283.81 21.06h5.26v5.27h-5.26zM294.34 21.06h5.26v5.27h-5.26zM304.87 21.06h5.26v5.27h-5.26zM315.40 21.06h5.26v5.27h-5.26zM325.93 21.06h5.26v5.27h-5.26zM336.46 21.06h5.26v5.27h-5.26zM346.99 21.06h5.26v5.27h-5.26zM357.52 21.06h5.26v5.27h-5.26zM368.05 21.06h5.26v5.27h-5.26zM378.58 21.06h4.92v5.27h-4.92zM4.77 26.33h5.27v5.27h-5.27zM15.30 26.33h5.27v5.27h-5.27zM25.83 26.33h5.27v5.27h-5.27zM36.35 26.33h5.26v5.27h-5.26zM46.88 26.33h5.27v5.27h-5.27zM57.41 26.33h5.27v5.27h-5.27zM67.94 26.33h5.27v5.27h-5.27zM78.47 26.33h5.27v5.27h-5.27zM89.00 26.33h5.27v5.27h-5.27zM99.53 26.33h5.26v5.27h-5.26zM110.06 26.33h5.26v5.27h-5.26zM120.59 26.33h5.26v5.27h-5.26zM131.12 26.33h5.26v5.27h-5.26zM141.66 26.33h5.26v5.27h-5.26zM152.19 26.33h5.26v5.27h-5.26zM162.72 26.33h5.26v5.27h-5.26zM173.24 26.33h5.26v5.27h-5.26zM183.77 26.33h5.26v5.27h-5.26zM194.30 26.33h5.26v5.27h-5.26zM204.83 26.33h5.26v5.27h-5.26zM215.36 26.33h5.26v5.27h-5.26zM225.89 26.33h5.26v5.27h-5.26zM236.42 26.33h5.26v5.27h-5.26zM246.95 26.33h5.26v5.27h-5.26zM257.48 26.33h5.26v5.27h-5.26zM268.01 26.33h5.26v5.27h-5.26zM278.54 26.33h5.26v5.27h-5.26zM289.07 26.33h5.26v5.27h-5.26zM299.60 26.33h5.26v5.27h-5.26zM310.13 26.33h5.26v5.27h-5.26zM320.66 26.33h5.26v5.27h-5.26zM331.19 26.33h5.26v5.27h-5.26zM341.72 26.33h5.26v5.27h-5.26zM352.25 26.33h5.26v5.27h-5.26zM362.78 26.33h5.26v5.27h-5.26zM373.31 26.33h5.26v5.27h-5.26zM0.00 31.59h4.77v5.27h-4.77zM10.03 31.59h5.27v5.27h-5.27zM20.56 31.59h5.27v5.27h-5.27zM31.09 31.59h5.27v5.27h-5.27zM41.62 31.59h5.27v5.27h-5.27zM52.15 31.59h5.27v5.27h-5.27zM62.68 31.59h5.27v5.27h-5.27zM73.21 31.59h5.27v5.27h-5.27zM83.74 31.59h5.27v5.27h-5.27zM94.27 31.59h5.27v5.27h-5.27zM104.80 31.59h5.26v5.27h-5.26zM115.33 31.59h5.26v5.27h-5.26zM125.86 31.59h5.26v5.27h-5.26zM136.39 31.59h5.26v5.27h-5.26zM146.92 31.59h5.26v5.27h-5.26zM157.45 31.59h5.26v5.27h-5.26zM167.98 31.59h5.26v5.27h-5.26zM178.51 31.59h5.26v5.27h-5.26zM189.04 31.59h5.26v5.27h-5.26zM199.57 31.59h5.26v5.27h-5.26zM210.10 31.59h5.26v5.27h-5.26zM220.63 31.59h5.26v5.27h-5.26zM231.16 31.59h5.26v5.27h-5.26zM241.69 31.59h5.26v5.27h-5.26zM252.22 31.59h5.26v5.27h-5.26zM262.75 31.59h5.26v5.27h-5.26zM273.28 31.59h5.26v5.27h-5.26zM283.81 31.59h5.26v5.27h-5.26zM294.34 31.59h5.26v5.27h-5.26zM304.87 31.59h5.26v5.27h-5.26zM315.40 31.59h5.26v5.27h-5.26zM325.93 31.59h5.26v5.27h-5.26zM336.46 31.59h5.26v5.27h-5.26zM346.99 31.59h5.26v5.27h-5.26zM357.52 31.59h5.26v5.27h-5.26zM368.05 31.59h5.26v5.27h-5.26zM378.58 31.59h4.92v5.27h-4.92zM4.77 36.85h5.27v5.27h-5.27zM15.30 36.85h5.27v5.27h-5.27zM25.83 36.85h5.27v5.27h-5.27zM36.35 36.85h5.26v5.27h-5.26zM46.88 36.85h5.27v5.27h-5.27zM57.41 36.85h5.27v5.27h-5.27zM67.94 36.85h5.27v5.27h-5.27zM78.47 36.85h5.27v5.27h-5.27zM89.00 36.85h5.27v5.27h-5.27zM99.53 36.85h5.26v5.27h-5.26zM110.06 36.85h5.26v5.27h-5.26zM120.59 36.85h5.26v5.27h-5.26zM131.12 36.85h5.26v5.27h-5.26zM141.66 36.85h5.26v5.27h-5.26zM152.19 36.85h5.26v5.27h-5.26zM162.72 36.85h5.26v5.27h-5.26zM173.24 36.85h5.26v5.27h-5.26zM183.77 36.85h5.26v5.27h-5.26zM194.30 36.85h5.26v5.27h-5.26zM204.83 36.85h5.26v5.27h-5.26zM215.36 36.85h5.26v5.27h-5.26zM225.89 36.85h5.26v5.27h-5.26zM236.42 36.85h5.26v5.27h-5.26zM246.95 36.85h5.26v5.27h-5.26zM257.48 36.85h5.26v5.27h-5.26zM268.01 36.85h5.26v5.27h-5.26zM278.54 36.85h5.26v5.27h-5.26zM289.07 36.85h5.26v5.27h-5.26zM299.60 36.85h5.26v5.27h-5.26zM310.13 36.85h5.26v5.27h-5.26zM320.66 36.85h5.26v5.27h-5.26zM331.19 36.85h5.26v5.27h-5.26zM341.72 36.85h5.26v5.27h-5.26zM352.25 36.85h5.26v5.27h-5.26zM362.78 36.85h5.26v5.27h-5.26zM373.31 36.85h5.26v5.27h-5.26zM0.00 42.12h4.77v5.27h-4.77zM10.03 42.12h5.27v5.27h-5.27zM20.56 42.12h5.27v5.27h-5.27zM31.09 42.12h5.27v5.27h-5.27zM41.62 42.12h5.27v5.27h-5.27zM52.15 42.12h5.27v5.27h-5.27zM62.68 42.12h5.27v5.27h-5.27zM73.21 42.12h5.27v5.27h-5.27zM83.74 42.12h5.27v5.27h-5.27zM94.27 42.12h5.27v5.27h-5.27zM104.80 42.12h5.26v5.27h-5.26zM115.33 42.12h5.26v5.27h-5.26zM125.86 42.12h5.26v5.27h-5.26zM136.39 42.12h5.26v5.27h-5.26zM146.92 42.12h5.26v5.27h-5.26zM157.45 42.12h5.26v5.27h-5.26zM167.98 42.12h5.26v5.27h-5.26zM178.51 42.12h5.26v5.27h-5.26zM189.04 42.12h5.26v5.27h-5.26zM199.57 42.12h5.26v5.27h-5.26zM210.10 42.12h5.26v5.27h-5.26zM220.63 42.12h5.26v5.27h-5.26zM231.16 42.12h5.26v5.27h-5.26zM241.69 42.12h5.26v5.27h-5.26zM252.22 42.12h5.26v5.27h-5.26zM262.75 42.12h5.26v5.27h-5.26zM273.28 42.12h5.26v5.27h-5.26zM283.81 42.12h5.26v5.27h-5.26zM294.34 42.12h5.26v5.27h-5.26zM304.87 42.12h5.26v5.27h-5.26zM315.40 42.12h5.26v5.27h-5.26zM325.93 42.12h5.26v5.27h-5.26zM336.46 42.12h5.26v5.27h-5.26zM346.99 42.12h5.26v5.27h-5.26zM357.52 42.12h5.26v5.27h-5.26zM368.05 42.12h5.26v5.27h-5.26zM378.58 42.12h4.92v5.27h-4.92zM4.77 47.38h5.27v5.26h-5.27zM15.30 47.38h5.27v5.26h-5.27zM25.83 47.38h5.27v5.26h-5.27zM36.35 47.38h5.26v5.26h-5.26zM46.88 47.38h5.27v5.26h-5.27zM57.41 47.38h5.27v5.26h-5.27zM67.94 47.38h5.27v5.26h-5.27zM78.47 47.38h5.27v5.26h-5.27zM89.00 47.38h5.27v5.26h-5.27zM99.53 47.38h5.26v5.26h-5.26zM110.06 47.38h5.26v5.26h-5.26zM120.59 47.38h5.26v5.26h-5.26zM131.12 47.38h5.26v5.26h-5.26zM141.66 47.38h5.26v5.26h-5.26zM152.19 47.38h5.26v5.26h-5.26zM162.72 47.38h5.26v5.26h-5.26zM173.24 47.38h5.26v5.26h-5.26zM183.77 47.38h5.26v5.26h-5.26zM194.30 47.38h5.26v5.26h-5.26zM204.83 47.38h5.26v5.26h-5.26zM215.36 47.38h5.26v5.26h-5.26zM225.89 47.38h5.26v5.26h-5.26zM236.42 47.38h5.26v5.26h-5.26zM246.95 47.38h5.26v5.26h-5.26zM257.48 47.38h5.26v5.26h-5.26zM268.01 47.38h5.26v5.26h-5.26zM278.54 47.38h5.26v5.26h-5.26zM289.07 47.38h5.26v5.26h-5.26zM299.60 47.38h5.26v5.26h-5.26zM310.13 47.38h5.26v5.26h-5.26zM320.66 47.38h5.26v5.26h-5.26zM331.19 47.38h5.26v5.26h-5.26zM341.72 47.38h5.26v5.26h-5.26zM352.25 47.38h5.26v5.26h-5.26zM362.78 47.38h5.26v5.26h-5.26zM373.31 47.38h5.26v5.26h-5.26zM0.00 52.65h4.77v5.26h-4.77zM10.03 52.65h5.27v5.26h-5.27zM20.56 52.65h5.27v5.26h-5.27zM31.09 52.65h5.27v5.26h-5.27zM41.62 52.65h5.27v5.26h-5.27zM52.15 52.65h5.27v5.26h-5.27zM62.68 52.65h5.27v5.26h-5.27zM73.21 52.65h5.27v5.26h-5.27zM83.74 52.65h5.27v5.26h-5.27zM94.27 52.65h5.27v5.26h-5.27zM104.80 52.65h5.26v5.26h-5.26zM115.33 52.65h5.26v5.26h-5.26zM125.86 52.65h5.26v5.26h-5.26zM136.39 52.65h5.26v5.26h-5.26zM146.92 52.65h5.26v5.26h-5.26zM157.45 52.65h5.26v5.26h-5.26zM167.98 52.65h5.26v5.26h-5.26zM178.51 52.65h5.26v5.26h-5.26zM189.04 52.65h5.26v5.26h-5.26zM199.57 52.65h5.26v5.26h-5.26zM210.10 52.65h5.26v5.26h-5.26zM220.63 52.65h5.26v5.26h-5.26zM231.16 52.65h5.26v5.26h-5.26zM241.69 52.65h5.26v5.26h-5.26zM252.22 52.65h5.26v5.26h-5.26zM262.75 52.65h5.26v5.26h-5.26zM273.28 52.65h5.26v5.26h-5.26zM283.81 52.65h5.26v5.26h-5.26zM294.34 52.65h5.26v5.26h-5.26zM304.87 52.65h5.26v5.26h-5.26zM315.40 52.65h5.26v5.26h-5.26zM325.93 52.65h5.26v5.26h-5.26zM336.46 52.65h5.26v5.26h-5.26zM346.99 52.65h5.26v5.26h-5.26zM357.52 52.65h5.26v5.26h-5.26zM368.05 52.65h5.26v5.26h-5.26zM378.58 52.65h4.92v5.26h-4.92zM4.77 57.91h5.27v5.26h-5.27zM15.30 57.91h5.27v5.26h-5.27zM25.83 57.91h5.27v5.26h-5.27zM36.35 57.91h5.26v5.26h-5.26zM46.88 57.91h5.27v5.26h-5.27zM57.41 57.91h5.27v5.26h-5.27zM67.94 57.91h5.27v5.26h-5.27zM78.47 57.91h5.27v5.26h-5.27zM89.00 57.91h5.27v5.26h-5.27zM99.53 57.91h5.26v5.26h-5.26zM110.06 57.91h5.26v5.26h-5.26zM120.59 57.91h5.26v5.26h-5.26zM131.12 57.91h5.26v5.26h-5.26zM141.66 57.91h5.26v5.26h-5.26zM152.19 57.91h5.26v5.26h-5.26zM162.72 57.91h5.26v5.26h-5.26zM173.24 57.91h5.26v5.26h-5.26zM183.77 57.91h5.26v5.26h-5.26zM194.30 57.91h5.26v5.26h-5.26zM204.83 57.91h5.26v5.26h-5.26zM215.36 57.91h5.26v5.26h-5.26zM225.89 57.91h5.26v5.26h-5.26zM236.42 57.91h5.26v5.26h-5.26zM246.95 57.91h5.26v5.26h-5.26zM257.48 57.91h5.26v5.26h-5.26zM268.01 57.91h5.26v5.26h-5.26zM278.54 57.91h5.26v5.26h-5.26zM289.07 57.91h5.26v5.26h-5.26zM299.60 57.91h5.26v5.26h-5.26zM310.13 57.91h5.26v5.26h-5.26zM320.66 57.91h5.26v5.26h-5.26zM331.19 57.91h5.26v5.26h-5.26zM341.72 57.91h5.26v5.26h-5.26zM352.25 57.91h5.26v5.26h-5.26zM362.78 57.91h5.26v5.26h-5.26zM373.31 57.91h5.26v5.26h-5.26zM0.00 63.18h4.77v5.26h-4.77zM10.03 63.18h5.27v5.26h-5.27zM20.56 63.18h5.27v5.26h-5.27zM31.09 63.18h5.27v5.26h-5.27zM41.62 63.18h5.27v5.26h-5.27zM52.15 63.18h5.27v5.26h-5.27zM62.68 63.18h5.27v5.26h-5.27zM73.21 63.18h5.27v5.26h-5.27zM83.74 63.18h5.27v5.26h-5.27zM94.27 63.18h5.27v5.26h-5.27zM104.80 63.18h5.26v5.26h-5.26zM115.33 63.18h5.26v5.26h-5.26zM125.86 63.18h5.26v5.26h-5.26zM136.39 63.18h5.26v5.26h-5.26zM146.92 63.18h5.26v5.26h-5.26zM157.45 63.18h5.26v5.26h-5.26zM167.98 63.18h5.26v5.26h-5.26zM178.51 63.18h5.26v5.26h-5.26zM189.04 63.18h5.26v5.26h-5.26zM199.57 63.18h5.26v5.26h-5.26zM210.10 63.18h5.26v5.26h-5.26zM220.63 63.18h5.26v5.26h-5.26zM231.16 63.18h5.26v5.26h-5.26zM241.69 63.18h5.26v5.26h-5.26zM252.22 63.18h5.26v5.26h-5.26zM262.75 63.18h5.26v5.26h-5.26zM273.28 63.18h5.26v5.26h-5.26zM283.81 63.18h5.26v5.26h-5.26zM294.34 63.18h5.26v5.26h-5.26zM304.87 63.18h5.26v5.26h-5.26zM315.40 63.18h5.26v5.26h-5.26zM325.93 63.18h5.26v5.26h-5.26zM336.46 63.18h5.26v5.26h-5.26zM346.99 63.18h5.26v5.26h-5.26zM357.52 63.18h5.26v5.26h-5.26zM368.05 63.18h5.26v5.26h-5.26zM378.58 63.18h4.92v5.26h-4.92zM4.77 68.44h5.27v5.26h-5.27zM15.30 68.44h5.27v5.26h-5.27zM25.83 68.44h5.27v5.26h-5.27zM36.35 68.44h5.26v5.26h-5.26zM46.88 68.44h5.27v5.26h-5.27zM57.41 68.44h5.27v5.26h-5.27zM67.94 68.44h5.27v5.26h-5.27zM78.47 68.44h5.27v5.26h-5.27zM89.00 68.44h5.27v5.26h-5.27zM99.53 68.44h5.26v5.26h-5.26zM110.06 68.44h5.26v5.26h-5.26zM120.59 68.44h5.26v5.26h-5.26zM131.12 68.44h5.26v5.26h-5.26zM141.66 68.44h5.26v5.26h-5.26zM152.19 68.44h5.26v5.26h-5.26zM162.72 68.44h5.26v5.26h-5.26zM173.24 68.44h5.26v5.26h-5.26zM183.77 68.44h5.26v5.26h-5.26zM194.30 68.44h5.26v5.26h-5.26zM204.83 68.44h5.26v5.26h-5.26zM215.36 68.44h5.26v5.26h-5.26zM225.89 68.44h5.26v5.26h-5.26zM236.42 68.44h5.26v5.26h-5.26zM246.95 68.44h5.26v5.26h-5.26zM257.48 68.44h5.26v5.26h-5.26zM268.01 68.44h5.26v5.26h-5.26zM278.54 68.44h5.26v5.26h-5.26zM289.07 68.44h5.26v5.26h-5.26zM299.60 68.44h5.26v5.26h-5.26zM310.13 68.44h5.26v5.26h-5.26zM320.66 68.44h5.26v5.26h-5.26zM331.19 68.44h5.26v5.26h-5.26zM341.72 68.44h5.26v5.26h-5.26zM352.25 68.44h5.26v5.26h-5.26zM362.78 68.44h5.26v5.26h-5.26zM373.31 68.44h5.26v5.26h-5.26zM0.00 73.71h4.77v5.26h-4.77zM10.03 73.71h5.27v5.26h-5.27zM20.56 73.71h5.27v5.26h-5.27zM31.09 73.71h5.27v5.26h-5.27zM41.62 73.71h5.27v5.26h-5.27zM52.15 73.71h5.27v5.26h-5.27zM62.68 73.71h5.27v5.26h-5.27zM73.21 73.71h5.27v5.26h-5.27zM83.74 73.71h5.27v5.26h-5.27zM94.27 73.71h5.27v5.26h-5.27zM104.80 73.71h5.26v5.26h-5.26zM115.33 73.71h5.26v5.26h-5.26zM125.86 73.71h5.26v5.26h-5.26zM136.39 73.71h5.26v5.26h-5.26zM146.92 73.71h5.26v5.26h-5.26zM157.45 73.71h5.26v5.26h-5.26zM167.98 73.71h5.26v5.26h-5.26zM178.51 73.71h5.26v5.26h-5.26zM189.04 73.71h5.26v5.26h-5.26zM199.57 73.71h5.26v5.26h-5.26zM210.10 73.71h5.26v5.26h-5.26zM220.63 73.71h5.26v5.26h-5.26zM231.16 73.71h5.26v5.26h-5.26zM241.69 73.71h5.26v5.26h-5.26zM252.22 73.71h5.26v5.26h-5.26zM262.75 73.71h5.26v5.26h-5.26zM273.28 73.71h5.26v5.26h-5.26zM283.81 73.71h5.26v5.26h-5.26zM294.34 73.71h5.26v5.26h-5.26zM304.87 73.71h5.26v5.26h-5.26zM315.40 73.71h5.26v5.26h-5.26zM325.93 73.71h5.26v5.26h-5.26zM336.46 73.71h5.26v5.26h-5.26zM346.99 73.71h5.26v5.26h-5.26zM357.52 73.71h5.26v5.26h-5.26zM368.05 73.71h5.26v5.26h-5.26zM378.58 73.71h4.92v5.26h-4.92zM4.77 78.97h5.27v5.26h-5.27zM15.30 78.97h5.27v5.26h-5.27zM25.83 78.97h5.27v5.26h-5.27zM36.35 78.97h5.26v5.26h-5.26zM46.88 78.97h5.27v5.26h-5.27zM57.41 78.97h5.27v5.26h-5.27zM67.94 78.97h5.27v5.26h-5.27zM78.47 78.97h5.27v5.26h-5.27zM89.00 78.97h5.27v5.26h-5.27zM99.53 78.97h5.26v5.26h-5.26zM110.06 78.97h5.26v5.26h-5.26zM120.59 78.97h5.26v5.26h-5.26zM131.12 78.97h5.26v5.26h-5.26zM141.66 78.97h5.26v5.26h-5.26zM152.19 78.97h5.26v5.26h-5.26zM162.72 78.97h5.26v5.26h-5.26zM173.24 78.97h5.26v5.26h-5.26zM183.77 78.97h5.26v5.26h-5.26zM194.30 78.97h5.26v5.26h-5.26zM204.83 78.97h5.26v5.26h-5.26zM215.36 78.97h5.26v5.26h-5.26zM225.89 78.97h5.26v5.26h-5.26zM236.42 78.97h5.26v5.26h-5.26zM246.95 78.97h5.26v5.26h-5.26zM257.48 78.97h5.26v5.26h-5.26zM268.01 78.97h5.26v5.26h-5.26zM278.54 78.97h5.26v5.26h-5.26zM289.07 78.97h5.26v5.26h-5.26zM299.60 78.97h5.26v5.26h-5.26zM310.13 78.97h5.26v5.26h-5.26zM320.66 78.97h5.26v5.26h-5.26zM331.19 78.97h5.26v5.26h-5.26zM341.72 78.97h5.26v5.26h-5.26zM352.25 78.97h5.26v5.26h-5.26zM362.78 78.97h5.26v5.26h-5.26zM373.31 78.97h5.26v5.26h-5.26zM0.00 84.24h4.77v5.26h-4.77zM10.03 84.24h5.27v5.26h-5.27zM20.56 84.24h5.27v5.26h-5.27zM31.09 84.24h5.27v5.26h-5.27zM41.62 84.24h5.27v5.26h-5.27zM52.15 84.24h5.27v5.26h-5.27zM62.68 84.24h5.27v5.26h-5.27zM73.21 84.24h5.27v5.26h-5.27zM83.74 84.24h5.27v5.26h-5.27zM94.27 84.24h5.27v5.26h-5.27zM104.80 84.24h5.26v5.26h-5.26zM115.33 84.24h5.26v5.26h-5.26zM125.86 84.24h5.26v5.26h-5.26zM136.39 84.24h5.26v5.26h-5.26zM146.92 84.24h5.26v5.26h-5.26zM157.45 84.24h5.26v5.26h-5.26zM167.98 84.24h5.26v5.26h-5.26zM178.51 84.24h5.26v5.26h-5.26zM189.04 84.24h5.26v5.26h-5.26zM199.57 84.24h5.26v5.26h-5.26zM210.10 84.24h5.26v5.26h-5.26zM220.63 84.24h5.26v5.26h-5.26zM231.16 84.24h5.26v5.26h-5.26zM241.69 84.24h5.26v5.26h-5.26zM252.22 84.24h5.26v5.26h-5.26zM262.75 84.24h5.26v5.26h-5.26zM273.28 84.24h5.26v5.26h-5.26zM283.81 84.24h5.26v5.26h-5.26zM294.34 84.24h5.26v5.26h-5.26zM304.87 84.24h5.26v5.26h-5.26zM315.40 84.24h5.26v5.26h-5.26zM325.93 84.24h5.26v5.26h-5.26zM336.46 84.24h5.26v5.26h-5.26zM346.99 84.24h5.26v5.26h-5.26zM357.52 84.24h5.26v5.26h-5.26zM368.05 84.24h5.26v5.26h-5.26zM378.58 84.24h4.92v5.26h-4.92zM4.77 89.50h5.27v5.26h-5.27zM15.30 89.50h5.27v5.26h-5.27zM25.83 89.50h5.27v5.26h-5.27zM36.35 89.50h5.26v5.26h-5.26zM46.88 89.50h5.27v5.26h-5.27zM57.41 89.50h5.27v5.26h-5.27zM67.94 89.50h5.27v5.26h-5.27zM78.47 89.50h5.27v5.26h-5.27zM89.00 89.50h5.27v5.26h-5.27zM99.53 89.50h5.26v5.26h-5.26zM110.06 89.50h5.26v5.26h-5.26zM120.59 89.50h5.26v5.26h-5.26zM131.12 89.50h5.26v5.26h-5.26zM141.66 89.50h5.26v5.26h-5.26zM152.19 89.50h5.26v5.26h-5.26zM162.72 89.50h5.26v5.26h-5.26zM173.24 89.50h5.26v5.26h-5.26zM183.77 89.50h5.26v5.26h-5.26zM194.30 89.50h5.26v5.26h-5.26zM204.83 89.50h5.26v5.26h-5.26zM215.36 89.50h5.26v5.26h-5.26zM225.89 89.50h5.26v5.26h-5.26zM236.42 89.50h5.26v5.26h-5.26zM246.95 89.50h5.26v5.26h-5.26zM257.48 89.50h5.26v5.26h-5.26zM268.01 89.50h5.26v5.26h-5.26zM278.54 89.50h5.26v5.26h-5.26zM289.07 89.50h5.26v5.26h-5.26zM299.60 89.50h5.26v5.26h-5.26zM310.13 89.50h5.26v5.26h-5.26zM320.66 89.50h5.26v5.26h-5.26zM331.19 89.50h5.26v5.26h-5.26zM341.72 89.50h5.26v5.26h-5.26zM352.25 89.50h5.26v5.26h-5.26zM362.78 89.50h5.26v5.26h-5.26zM373.31 89.50h5.26v5.26h-5.26zM0.00 94.77h4.77v5.26h-4.77zM10.03 94.77h5.27v5.26h-5.27zM20.56 94.77h5.27v5.26h-5.27zM31.09 94.77h5.27v5.26h-5.27zM41.62 94.77h5.27v5.26h-5.27zM52.15 94.77h5.27v5.26h-5.27zM62.68 94.77h5.27v5.26h-5.27zM73.21 94.77h5.27v5.26h-5.27zM83.74 94.77h5.27v5.26h-5.27zM94.27 94.77h5.27v5.26h-5.27zM104.80 94.77h5.26v5.26h-5.26zM115.33 94.77h5.26v5.26h-5.26zM125.86 94.77h5.26v5.26h-5.26zM136.39 94.77h5.26v5.26h-5.26zM146.92 94.77h5.26v5.26h-5.26zM157.45 94.77h5.26v5.26h-5.26zM167.98 94.77h5.26v5.26h-5.26zM178.51 94.77h5.26v5.26h-5.26zM189.04 94.77h5.26v5.26h-5.26zM199.57 94.77h5.26v5.26h-5.26zM210.10 94.77h5.26v5.26h-5.26zM220.63 94.77h5.26v5.26h-5.26zM231.16 94.77h5.26v5.26h-5.26zM241.69 94.77h5.26v5.26h-5.26zM252.22 94.77h5.26v5.26h-5.26zM262.75 94.77h5.26v5.26h-5.26zM273.28 94.77h5.26v5.26h-5.26zM283.81 94.77h5.26v5.26h-5.26zM294.34 94.77h5.26v5.26h-5.26zM304.87 94.77h5.26v5.26h-5.26zM315.40 94.77h5.26v5.26h-5.26zM325.93 94.77h5.26v5.26h-5.26zM336.46 94.77h5.26v5.26h-5.26zM346.99 94.77h5.26v5.26h-5.26zM357.52 94.77h5.26v5.26h-5.26zM368.05 94.77h5.26v5.26h-5.26zM378.58 94.77h4.92v5.26h-4.92zM4.77 100.03h5.27v5.26h-5.27zM15.30 100.03h5.27v5.26h-5.27zM25.83 100.03h5.27v5.26h-5.27zM36.35 100.03h5.26v5.26h-5.26zM46.88 100.03h5.27v5.26h-5.27zM57.41 100.03h5.27v5.26h-5.27zM67.94 100.03h5.27v5.26h-5.27zM78.47 100.03h5.27v5.26h-5.27zM89.00 100.03h5.27v5.26h-5.27zM99.53 100.03h5.26v5.26h-5.26zM110.06 100.03h5.26v5.26h-5.26zM120.59 100.03h5.26v5.26h-5.26zM131.12 100.03h5.26v5.26h-5.26zM141.66 100.03h5.26v5.26h-5.26zM152.19 100.03h5.26v5.26h-5.26zM162.72 100.03h5.26v5.26h-5.26zM173.24 100.03h5.26v5.26h-5.26zM183.77 100.03h5.26v5.26h-5.26zM194.30 100.03h5.26v5.26h-5.26zM204.83 100.03h5.26v5.26h-5.26zM215.36 100.03h5.26v5.26h-5.26zM225.89 100.03h5.26v5.26h-5.26zM236.42 100.03h5.26v5.26h-5.26zM246.95 100.03h5.26v5.26h-5.26zM257.48 100.03h5.26v5.26h-5.26zM268.01 100.03h5.26v5.26h-5.26zM278.54 100.03h5.26v5.26h-5.26zM289.07 100.03h5.26v5.26h-5.26zM299.60 100.03h5.26v5.26h-5.26zM310.13 100.03h5.26v5.26h-5.26zM320.66 100.03h5.26v5.26h-5.26zM331.19 100.03h5.26v5.26h-5.26zM341.72 100.03h5.26v5.26h-5.26zM352.25 100.03h5.26v5.26h-5.26zM362.78 100.03h5.26v5.26h-5.26zM373.31 100.03h5.26v5.26h-5.26zM0.00 105.30h4.77v5.26h-4.77zM10.03 105.30h5.27v5.26h-5.27zM20.56 105.30h5.27v5.26h-5.27zM31.09 105.30h5.27v5.26h-5.27zM41.62 105.30h5.27v5.26h-5.27zM52.15 105.30h5.27v5.26h-5.27zM62.68 105.30h5.27v5.26h-5.27zM73.21 105.30h5.27v5.26h-5.27zM83.74 105.30h5.27v5.26h-5.27zM94.27 105.30h5.27v5.26h-5.27zM104.80 105.30h5.26v5.26h-5.26zM115.33 105.30h5.26v5.26h-5.26zM125.86 105.30h5.26v5.26h-5.26zM136.39 105.30h5.26v5.26h-5.26zM146.92 105.30h5.26v5.26h-5.26zM157.45 105.30h5.26v5.26h-5.26zM167.98 105.30h5.26v5.26h-5.26zM178.51 105.30h5.26v5.26h-5.26zM189.04 105.30h5.26v5.26h-5.26zM199.57 105.30h5.26v5.26h-5.26zM210.10 105.30h5.26v5.26h-5.26zM220.63 105.30h5.26v5.26h-5.26zM231.16 105.30h5.26v5.26h-5.26zM241.69 105.30h5.26v5.26h-5.26zM252.22 105.30h5.26v5.26h-5.26zM262.75 105.30h5.26v5.26h-5.26zM273.28 105.30h5.26v5.26h-5.26zM283.81 105.30h5.26v5.26h-5.26zM294.34 105.30h5.26v5.26h-5.26zM304.87 105.30h5.26v5.26h-5.26zM315.40 105.30h5.26v5.26h-5.26zM325.93 105.30h5.26v5.26h-5.26zM336.46 105.30h5.26v5.26h-5.26zM346.99 105.30h5.26v5.26h-5.26zM357.52 105.30h5.26v5.26h-5.26zM368.05 105.30h5.26v5.26h-5.26zM378.58 105.30h4.92v5.26h-4.92zM4.77 110.56h5.27v5.26h-5.27zM15.30 110.56h5.27v5.26h-5.27zM25.83 110.56h5.27v5.26h-5.27zM36.35 110.56h5.26v5.26h-5.26zM46.88 110.56h5.27v5.26h-5.27zM57.41 110.56h5.27v5.26h-5.27zM67.94 110.56h5.27v5.26h-5.27zM78.47 110.56h5.27v5.26h-5.27zM89.00 110.56h5.27v5.26h-5.27zM99.53 110.56h5.26v5.26h-5.26zM110.06 110.56h5.26v5.26h-5.26zM120.59 110.56h5.26v5.26h-5.26zM131.12 110.56h5.26v5.26h-5.26zM141.66 110.56h5.26v5.26h-5.26zM152.19 110.56h5.26v5.26h-5.26zM162.72 110.56h5.26v5.26h-5.26zM173.24 110.56h5.26v5.26h-5.26zM183.77 110.56h5.26v5.26h-5.26zM194.30 110.56h5.26v5.26h-5.26zM204.83 110.56h5.26v5.26h-5.26zM215.36 110.56h5.26v5.26h-5.26zM225.89 110.56h5.26v5.26h-5.26zM236.42 110.56h5.26v5.26h-5.26zM246.95 110.56h5.26v5.26h-5.26zM257.48 110.56h5.26v5.26h-5.26zM268.01 110.56h5.26v5.26h-5.26zM278.54 110.56h5.26v5.26h-5.26zM289.07 110.56h5.26v5.26h-5.26zM299.60 110.56h5.26v5.26h-5.26zM310.13 110.56h5.26v5.26h-5.26zM320.66 110.56h5.26v5.26h-5.26zM331.19 110.56h5.26v5.26h-5.26zM341.72 110.56h5.26v5.26h-5.26zM352.25 110.56h5.26v5.26h-5.26zM362.78 110.56h5.26v5.26h-5.26zM373.31 110.56h5.26v5.26h-5.26zM0.00 115.83h4.77v5.26h-4.77zM10.03 115.83h5.27v5.26h-5.27zM20.56 115.83h5.27v5.26h-5.27zM31.09 115.83h5.27v5.26h-5.27zM41.62 115.83h5.27v5.26h-5.27zM52.15 115.83h5.27v5.26h-5.27zM62.68 115.83h5.27v5.26h-5.27zM73.21 115.83h5.27v5.26h-5.27zM83.74 115.83h5.27v5.26h-5.27zM94.27 115.83h5.27v5.26h-5.27zM104.80 115.83h5.26v5.26h-5.26zM115.33 115.83h5.26v5.26h-5.26zM125.86 115.83h5.26v5.26h-5.26zM136.39 115.83h5.26v5.26h-5.26zM146.92 115.83h5.26v5.26h-5.26zM157.45 115.83h5.26v5.26h-5.26zM167.98 115.83h5.26v5.26h-5.26zM178.51 115.83h5.26v5.26h-5.26zM189.04 115.83h5.26v5.26h-5.26zM199.57 115.83h5.26v5.26h-5.26zM210.10 115.83h5.26v5.26h-5.26zM220.63 115.83h5.26v5.26h-5.26zM231.16 115.83h5.26v5.26h-5.26zM241.69 115.83h5.26v5.26h-5.26zM252.22 115.83h5.26v5.26h-5.26zM262.75 115.83h5.26v5.26h-5.26zM273.28 115.83h5.26v5.26h-5.26zM283.81 115.83h5.26v5.26h-5.26zM294.34 115.83h5.26v5.26h-5.26zM304.87 115.83h5.26v5.26h-5.26zM315.40 115.83h5.26v5.26h-5.26zM325.93 115.83h5.26v5.26h-5.26zM336.46 115.83h5.26v5.26h-5.26zM346.99 115.83h5.26v5.26h-5.26zM357.52 115.83h5.26v5.26h-5.26zM368.05 115.83h5.26v5.26h-5.26zM378.58 115.83h4.92v5.26h-4.92zM4.77 121.09h5.27v5.26h-5.27zM15.30 121.09h5.27v5.26h-5.27zM25.83 121.09h5.27v5.26h-5.27zM36.35 121.09h5.26v5.26h-5.26zM46.88 121.09h5.27v5.26h-5.27zM57.41 121.09h5.27v5.26h-5.27zM67.94 121.09h5.27v5.26h-5.27zM78.47 121.09h5.27v5.26h-5.27zM89.00 121.09h5.27v5.26h-5.27zM99.53 121.09h5.26v5.26h-5.26zM110.06 121.09h5.26v5.26h-5.26zM120.59 121.09h5.26v5.26h-5.26zM131.12 121.09h5.26v5.26h-5.26zM141.66 121.09h5.26v5.26h-5.26zM152.19 121.09h5.26v5.26h-5.26zM162.72 121.09h5.26v5.26h-5.26zM173.24 121.09h5.26v5.26h-5.26zM183.77 121.09h5.26v5.26h-5.26zM194.30 121.09h5.26v5.26h-5.26zM204.83 121.09h5.26v5.26h-5.26zM215.36 121.09h5.26v5.26h-5.26zM225.89 121.09h5.26v5.26h-5.26zM236.42 121.09h5.26v5.26h-5.26zM246.95 121.09h5.26v5.26h-5.26zM257.48 121.09h5.26v5.26h-5.26zM268.01 121.09h5.26v5.26h-5.26zM278.54 121.09h5.26v5.26h-5.26zM289.07 121.09h5.26v5.26h-5.26zM299.60 121.09h5.26v5.26h-5.26zM310.13 121.09h5.26v5.26h-5.26zM320.66 121.09h5.26v5.26h-5.26zM331.19 121.09h5.26v5.26h-5.26zM341.72 121.09h5.26v5.26h-5.26zM352.25 121.09h5.26v5.26h-5.26zM362.78 121.09h5.26v5.26h-5.26zM373.31 121.09h5.26v5.26h-5.26zM0.00 126.36h4.77v5.26h-4.77zM10.03 126.36h5.27v5.26h-5.27zM20.56 126.36h5.27v5.26h-5.27zM31.09 126.36h5.27v5.26h-5.27zM41.62 126.36h5.27v5.26h-5.27zM52.15 126.36h5.27v5.26h-5.27zM62.68 126.36h5.27v5.26h-5.27zM73.21 126.36h5.27v5.26h-5.27zM83.74 126.36h5.27v5.26h-5.27zM94.27 126.36h5.27v5.26h-5.27zM104.80 126.36h5.26v5.26h-5.26zM115.33 126.36h5.26v5.26h-5.26zM125.86 126.36h5.26v5.26h-5.26zM136.39 126.36h5.26v5.26h-5.26zM146.92 126.36h5.26v5.26h-5.26zM157.45 126.36h5.26v5.26h-5.26zM167.98 126.36h5.26v5.26h-5.26zM178.51 126.36h5.26v5.26h-5.26zM189.04 126.36h5.26v5.26h-5.26zM199.57 126.36h5.26v5.26h-5.26zM210.10 126.36h5.26v5.26h-5.26zM220.63 126.36h5.26v5.26h-5.26zM231.16 126.36h5.26v5.26h-5.26zM241.69 126.36h5.26v5.26h-5.26zM252.22 126.36h5.26v5.26h-5.26zM262.75 126.36h5.26v5.26h-5.26zM273.28 126.36h5.26v5.26h-5.26zM283.81 126.36h5.26v5.26h-5.26zM294.34 126.36h5.26v5.26h-5.26zM304.87 126.36h5.26v5.26h-5.26zM315.40 126.36h5.26v5.26h-5.26zM325.93 126.36h5.26v5.26h-5.26zM336.46 126.36h5.26v5.26h-5.26zM346.99 126.36h5.26v5.26h-5.26zM357.52 126.36h5.26v5.26h-5.26zM368.05 126.36h5.26v5.26h-5.26zM378.58 126.36h4.92v5.26h-4.92zM4.77 131.62h5.27v5.26h-5.27zM15.30 131.62h5.27v5.26h-5.27zM25.83 131.62h5.27v5.26h-5.27zM36.35 131.62h5.26v5.26h-5.26zM46.88 131.62h5.27v5.26h-5.27zM57.41 131.62h5.27v5.26h-5.27zM67.94 131.62h5.27v5.26h-5.27zM78.47 131.62h5.27v5.26h-5.27zM89.00 131.62h5.27v5.26h-5.27zM99.53 131.62h5.26v5.26h-5.26zM110.06 131.62h5.26v5.26h-5.26zM120.59 131.62h5.26v5.26h-5.26zM131.12 131.62h5.26v5.26h-5.26zM141.66 131.62h5.26v5.26h-5.26zM152.19 131.62h5.26v5.26h-5.26zM162.72 131.62h5.26v5.26h-5.26zM173.24 131.62h5.26v5.26h-5.26zM183.77 131.62h5.26v5.26h-5.26zM194.30 131.62h5.26v5.26h-5.26zM204.83 131.62h5.26v5.26h-5.26zM215.36 131.62h5.26v5.26h-5.26zM225.89 131.62h5.26v5.26h-5.26zM236.42 131.62h5.26v5.26h-5.26zM246.95 131.62h5.26v5.26h-5.26zM257.48 131.62h5.26v5.26h-5.26zM268.01 131.62h5.26v5.26h-5.26zM278.54 131.62h5.26v5.26h-5.26zM289.07 131.62h5.26v5.26h-5.26zM299.60 131.62h5.26v5.26h-5.26zM310.13 131.62h5.26v5.26h-5.26zM320.66 131.62h5.26v5.26h-5.26zM331.19 131.62h5.26v5.26h-5.26zM341.72 131.62h5.26v5.26h-5.26zM352.25 131.62h5.26v5.26h-5.26zM362.78 131.62h5.26v5.26h-5.26zM373.31 131.62h5.26v5.26h-5.26zM0.00 136.89h4.77v5.26h-4.77zM10.03 136.89h5.27v5.26h-5.27zM20.56 136.89h5.27v5.26h-5.27zM31.09 136.89h5.27v5.26h-5.27zM41.62 136.89h5.27v5.26h-5.27zM52.15 136.89h5.27v5.26h-5.27zM62.68 136.89h5.27v5.26h-5.27zM73.21 136.89h5.27v5.26h-5.27zM83.74 136.89h5.27v5.26h-5.27zM94.27 136.89h5.27v5.26h-5.27zM104.80 136.89h5.26v5.26h-5.26zM115.33 136.89h5.26v5.26h-5.26zM125.86 136.89h5.26v5.26h-5.26zM136.39 136.89h5.26v5.26h-5.26zM146.92 136.89h5.26v5.26h-5.26zM157.45 136.89h5.26v5.26h-5.26zM167.98 136.89h5.26v5.26h-5.26zM178.51 136.89h5.26v5.26h-5.26zM189.04 136.89h5.26v5.26h-5.26zM199.57 136.89h5.26v5.26h-5.26zM210.10 136.89h5.26v5.26h-5.26zM220.63 136.89h5.26v5.26h-5.26zM231.16 136.89h5.26v5.26h-5.26zM241.69 136.89h5.26v5.26h-5.26zM252.22 136.89h5.26v5.26h-5.26zM262.75 136.89h5.26v5.26h-5.26zM273.28 136.89h5.26v5.26h-5.26zM283.81 136.89h5.26v5.26h-5.26zM294.34 136.89h5.26v5.26h-5.26zM304.87 136.89h5.26v5.26h-5.26zM315.40 136.89h5.26v5.26h-5.26zM325.93 136.89h5.26v5.26h-5.26zM336.46 136.89h5.26v5.26h-5.26zM346.99 136.89h5.26v5.26h-5.26zM357.52 136.89h5.26v5.26h-5.26zM368.05 136.89h5.26v5.26h-5.26zM378.58 136.89h4.92v5.26h-4.92zM4.77 142.16h5.27v5.26h-5.27zM15.30 142.16h5.27v5.26h-5.27zM25.83 142.16h5.27v5.26h-5.27zM36.35 142.16h5.26v5.26h-5.26zM46.88 142.16h5.27v5.26h-5.27zM57.41 142.16h5.27v5.26h-5.27zM67.94 142.16h5.27v5.26h-5.27zM78.47 142.16h5.27v5.26h-5.27zM89.00 142.16h5.27v5.26h-5.27zM99.53 142.16h5.26v5.26h-5.26zM110.06 142.16h5.26v5.26h-5.26zM120.59 142.16h5.26v5.26h-5.26zM131.12 142.16h5.26v5.26h-5.26zM141.66 142.16h5.26v5.26h-5.26zM152.19 142.16h5.26v5.26h-5.26zM162.72 142.16h5.26v5.26h-5.26zM173.24 142.16h5.26v5.26h-5.26zM183.77 142.16h5.26v5.26h-5.26zM194.30 142.16h5.26v5.26h-5.26zM204.83 142.16h5.26v5.26h-5.26zM215.36 142.16h5.26v5.26h-5.26zM225.89 142.16h5.26v5.26h-5.26zM236.42 142.16h5.26v5.26h-5.26zM246.95 142.16h5.26v5.26h-5.26zM257.48 142.16h5.26v5.26h-5.26zM268.01 142.16h5.26v5.26h-5.26zM278.54 142.16h5.26v5.26h-5.26zM289.07 142.16h5.26v5.26h-5.26zM299.60 142.16h5.26v5.26h-5.26zM310.13 142.16h5.26v5.26h-5.26zM320.66 142.16h5.26v5.26h-5.26zM331.19 142.16h5.26v5.26h-5.26zM341.72 142.16h5.26v5.26h-5.26zM352.25 142.16h5.26v5.26h-5.26zM362.78 142.16h5.26v5.26h-5.26zM373.31 142.16h5.26v5.26h-5.26zM0.00 147.42h4.77v5.26h-4.77zM10.03 147.42h5.27v5.26h-5.27zM20.56 147.42h5.27v5.26h-5.27zM31.09 147.42h5.27v5.26h-5.27zM41.62 147.42h5.27v5.26h-5.27zM52.15 147.42h5.27v5.26h-5.27zM62.68 147.42h5.27v5.26h-5.27zM73.21 147.42h5.27v5.26h-5.27zM83.74 147.42h5.27v5.26h-5.27zM94.27 147.42h5.27v5.26h-5.27zM104.80 147.42h5.26v5.26h-5.26zM115.33 147.42h5.26v5.26h-5.26zM125.86 147.42h5.26v5.26h-5.26zM136.39 147.42h5.26v5.26h-5.26zM146.92 147.42h5.26v5.26h-5.26zM157.45 147.42h5.26v5.26h-5.26zM167.98 147.42h5.26v5.26h-5.26zM178.51 147.42h5.26v5.26h-5.26zM189.04 147.42h5.26v5.26h-5.26zM199.57 147.42h5.26v5.26h-5.26zM210.10 147.42h5.26v5.26h-5.26zM220.63 147.42h5.26v5.26h-5.26zM231.16 147.42h5.26v5.26h-5.26zM241.69 147.42h5.26v5.26h-5.26zM252.22 147.42h5.26v5.26h-5.26zM262.75 147.42h5.26v5.26h-5.26zM273.28 147.42h5.26v5.26h-5.26zM283.81 147.42h5.26v5.26h-5.26zM294.34 147.42h5.26v5.26h-5.26zM304.87 147.42h5.26v5.26h-5.26zM315.40 147.42h5.26v5.26h-5.26zM325.93 147.42h5.26v5.26h-5.26zM336.46 147.42h5.26v5.26h-5.26zM346.99 147.42h5.26v5.26h-5.26zM357.52 147.42h5.26v5.26h-5.26zM368.05 147.42h5.26v5.26h-5.26zM378.58 147.42h4.92v5.26h-4.92zM4.77 152.69h5.27v5.26h-5.27zM15.30 152.69h5.27v5.26h-5.27zM25.83 152.69h5.27v5.26h-5.27zM36.35 152.69h5.26v5.26h-5.26zM46.88 152.69h5.27v5.26h-5.27zM57.41 152.69h5.27v5.26h-5.27zM67.94 152.69h5.27v5.26h-5.27zM78.47 152.69h5.27v5.26h-5.27zM89.00 152.69h5.27v5.26h-5.27zM99.53 152.69h5.26v5.26h-5.26zM110.06 152.69h5.26v5.26h-5.26zM120.59 152.69h5.26v5.26h-5.26zM131.12 152.69h5.26v5.26h-5.26zM141.66 152.69h5.26v5.26h-5.26zM152.19 152.69h5.26v5.26h-5.26zM162.72 152.69h5.26v5.26h-5.26zM173.24 152.69h5.26v5.26h-5.26zM183.77 152.69h5.26v5.26h-5.26zM194.30 152.69h5.26v5.26h-5.26zM204.83 152.69h5.26v5.26h-5.26zM215.36 152.69h5.26v5.26h-5.26zM225.89 152.69h5.26v5.26h-5.26zM236.42 152.69h5.26v5.26h-5.26zM246.95 152.69h5.26v5.26h-5.26zM257.48 152.69h5.26v5.26h-5.26zM268.01 152.69h5.26v5.26h-5.26zM278.54 152.69h5.26v5.26h-5.26zM289.07 152.69h5.26v5.26h-5.26zM299.60 152.69h5.26v5.26h-5.26zM310.13 152.69h5.26v5.26h-5.26zM320.66 152.69h5.26v5.26h-5.26zM331.19 152.69h5.26v5.26h-5.26zM341.72 152.69h5.26v5.26h-5.26zM352.25 152.69h5.26v5.26h-5.26zM362.78 152.69h5.26v5.26h-5.26zM373.31 152.69h5.26v5.26h-5.26zM0.00 157.95h4.77v5.26h-4.77zM10.03 157.95h5.27v5.26h-5.27zM20.56 157.95h5.27v5.26h-5.27zM31.09 157.95h5.27v5.26h-5.27zM41.62 157.95h5.27v5.26h-5.27zM52.15 157.95h5.27v5.26h-5.27zM62.68 157.95h5.27v5.26h-5.27zM73.21 157.95h5.27v5.26h-5.27zM83.74 157.95h5.27v5.26h-5.27zM94.27 157.95h5.27v5.26h-5.27zM104.80 157.95h5.26v5.26h-5.26zM115.33 157.95h5.26v5.26h-5.26zM125.86 157.95h5.26v5.26h-5.26zM136.39 157.95h5.26v5.26h-5.26zM146.92 157.95h5.26v5.26h-5.26zM157.45 157.95h5.26v5.26h-5.26zM167.98 157.95h5.26v5.26h-5.26zM178.51 157.95h5.26v5.26h-5.26zM189.04 157.95h5.26v5.26h-5.26zM199.57 157.95h5.26v5.26h-5.26zM210.10 157.95h5.26v5.26h-5.26zM220.63 157.95h5.26v5.26h-5.26zM231.16 157.95h5.26v5.26h-5.26zM241.69 157.95h5.26v5.26h-5.26zM252.22 157.95h5.26v5.26h-5.26zM262.75 157.95h5.26v5.26h-5.26zM273.28 157.95h5.26v5.26h-5.26zM283.81 157.95h5.26v5.26h-5.26zM294.34 157.95h5.26v5.26h-5.26zM304.87 157.95h5.26v5.26h-5.26zM315.40 157.95h5.26v5.26h-5.26zM325.93 157.95h5.26v5.26h-5.26zM336.46 157.95h5.26v5.26h-5.26zM346.99 157.95h5.26v5.26h-5.26zM357.52 157.95h5.26v5.26h-5.26zM368.05 157.95h5.26v5.26h-5.26zM378.58 157.95h4.92v5.26h-4.92zM4.77 163.22h5.27v5.26h-5.27zM15.30 163.22h5.27v5.26h-5.27zM25.83 163.22h5.27v5.26h-5.27zM36.35 163.22h5.26v5.26h-5.26zM46.88 163.22h5.27v5.26h-5.27zM57.41 163.22h5.27v5.26h-5.27zM67.94 163.22h5.27v5.26h-5.27zM78.47 163.22h5.27v5.26h-5.27zM89.00 163.22h5.27v5.26h-5.27zM99.53 163.22h5.26v5.26h-5.26zM110.06 163.22h5.26v5.26h-5.26zM120.59 163.22h5.26v5.26h-5.26zM131.12 163.22h5.26v5.26h-5.26zM141.66 163.22h5.26v5.26h-5.26zM152.19 163.22h5.26v5.26h-5.26zM162.72 163.22h5.26v5.26h-5.26zM173.24 163.22h5.26v5.26h-5.26zM183.77 163.22h5.26v5.26h-5.26zM194.30 163.22h5.26v5.26h-5.26zM204.83 163.22h5.26v5.26h-5.26zM215.36 163.22h5.26v5.26h-5.26zM225.89 163.22h5.26v5.26h-5.26zM236.42 163.22h5.26v5.26h-5.26zM246.95 163.22h5.26v5.26h-5.26zM257.48 163.22h5.26v5.26h-5.26zM268.01 163.22h5.26v5.26h-5.26zM278.54 163.22h5.26v5.26h-5.26zM289.07 163.22h5.26v5.26h-5.26zM299.60 163.22h5.26v5.26h-5.26zM310.13 163.22h5.26v5.26h-5.26zM320.66 163.22h5.26v5.26h-5.26zM331.19 163.22h5.26v5.26h-5.26zM341.72 163.22h5.26v5.26h-5.26zM352.25 163.22h5.26v5.26h-5.26zM362.78 163.22h5.26v5.26h-5.26zM373.31 163.22h5.26v5.26h-5.26zM0.00 168.48h4.77v5.26h-4.77zM10.03 168.48h5.27v5.26h-5.27zM20.56 168.48h5.27v5.26h-5.27zM31.09 168.48h5.27v5.26h-5.27zM41.62 168.48h5.27v5.26h-5.27zM52.15 168.48h5.27v5.26h-5.27zM62.68 168.48h5.27v5.26h-5.27zM73.21 168.48h5.27v5.26h-5.27zM83.74 168.48h5.27v5.26h-5.27zM94.27 168.48h5.27v5.26h-5.27zM104.80 168.48h5.26v5.26h-5.26zM115.33 168.48h5.26v5.26h-5.26zM125.86 168.48h5.26v5.26h-5.26zM136.39 168.48h5.26v5.26h-5.26zM146.92 168.48h5.26v5.26h-5.26zM157.45 168.48h5.26v5.26h-5.26zM167.98 168.48h5.26v5.26h-5.26zM178.51 168.48h5.26v5.26h-5.26zM189.04 168.48h5.26v5.26h-5.26zM199.57 168.48h5.26v5.26h-5.26zM210.10 168.48h5.26v5.26h-5.26zM220.63 168.48h5.26v5.26h-5.26zM231.16 168.48h5.26v5.26h-5.26zM241.69 168.48h5.26v5.26h-5.26zM252.22 168.48h5.26v5.26h-5.26zM262.75 168.48h5.26v5.26h-5.26zM273.28 168.48h5.26v5.26h-5.26zM283.81 168.48h5.26v5.26h-5.26zM294.34 168.48h5.26v5.26h-5.26zM304.87 168.48h5.26v5.26h-5.26zM315.40 168.48h5.26v5.26h-5.26zM325.93 168.48h5.26v5.26h-5.26zM336.46 168.48h5.26v5.26h-5.26zM346.99 168.48h5.26v5.26h-5.26zM357.52 168.48h5.26v5.26h-5.26zM368.05 168.48h5.26v5.26h-5.26zM378.58 168.48h4.92v5.26h-4.92zM4.77 173.74h5.27v5.26h-5.27zM15.30 173.74h5.27v5.26h-5.27zM25.83 173.74h5.27v5.26h-5.27zM36.35 173.74h5.26v5.26h-5.26zM46.88 173.74h5.27v5.26h-5.27zM57.41 173.74h5.27v5.26h-5.27zM67.94 173.74h5.27v5.26h-5.27zM78.47 173.74h5.27v5.26h-5.27zM89.00 173.74h5.27v5.26h-5.27zM99.53 173.74h5.26v5.26h-5.26zM110.06 173.74h5.26v5.26h-5.26zM120.59 173.74h5.26v5.26h-5.26zM131.12 173.74h5.26v5.26h-5.26zM141.66 173.74h5.26v5.26h-5.26zM152.19 173.74h5.26v5.26h-5.26zM162.72 173.74h5.26v5.26h-5.26zM173.24 173.74h5.26v5.26h-5.26zM183.77 173.74h5.26v5.26h-5.26zM194.30 173.74h5.26v5.26h-5.26zM204.83 173.74h5.26v5.26h-5.26zM215.36 173.74h5.26v5.26h-5.26zM225.89 173.74h5.26v5.26h-5.26zM236.42 173.74h5.26v5.26h-5.26zM246.95 173.74h5.26v5.26h-5.26zM257.48 173.74h5.26v5.26h-5.26zM268.01 173.74h5.26v5.26h-5.26zM278.54 173.74h5.26v5.26h-5.26zM289.07 173.74h5.26v5.26h-5.26zM299.60 173.74h5.26v5.26h-5.26zM310.13 173.74h5.26v5.26h-5.26zM320.66 173.74h5.26v5.26h-5.26zM331.19 173.74h5.26v5.26h-5.26zM341.72 173.74h5.26v5.26h-5.26zM352.25 173.74h5.26v5.26h-5.26zM362.78 173.74h5.26v5.26h-5.26zM373.31 173.74h5.26v5.26h-5.26zM0.00 179.01h4.77v5.26h-4.77zM10.03 179.01h5.27v5.26h-5.27zM20.56 179.01h5.27v5.26h-5.27zM31.09 179.01h5.27v5.26h-5.27zM41.62 179.01h5.27v5.26h-5.27zM52.15 179.01h5.27v5.26h-5.27zM62.68 179.01h5.27v5.26h-5.27zM73.21 179.01h5.27v5.26h-5.27zM83.74 179.01h5.27v5.26h-5.27zM94.27 179.01h5.27v5.26h-5.27zM104.80 179.01h5.26v5.26h-5.26zM115.33 179.01h5.26v5.26h-5.26zM125.86 179.01h5.26v5.26h-5.26zM136.39 179.01h5.26v5.26h-5.26zM146.92 179.01h5.26v5.26h-5.26zM157.45 179.01h5.26v5.26h-5.26zM167.98 179.01h5.26v5.26h-5.26zM178.51 179.01h5.26v5.26h-5.26zM189.04 179.01h5.26v5.26h-5.26zM199.57 179.01h5.26v5.26h-5.26zM210.10 179.01h5.26v5.26h-5.26zM220.63 179.01h5.26v5.26h-5.26zM231.16 179.01h5.26v5.26h-5.26zM241.69 179.01h5.26v5.26h-5.26zM252.22 179.01h5.26v5.26h-5.26zM262.75 179.01h5.26v5.26h-5.26zM273.28 179.01h5.26v5.26h-5.26zM283.81 179.01h5.26v5.26h-5.26zM294.34 179.01h5.26v5.26h-5.26zM304.87 179.01h5.26v5.26h-5.26zM315.40 179.01h5.26v5.26h-5.26zM325.93 179.01h5.26v5.26h-5.26zM336.46 179.01h5.26v5.26h-5.26zM346.99 179.01h5.26v5.26h-5.26zM357.52 179.01h5.26v5.26h-5.26zM368.05 179.01h5.26v5.26h-5.26zM378.58 179.01h4.92v5.26h-4.92zM4.77 184.27h5.27v5.26h-5.27zM15.30 184.27h5.27v5.26h-5.27zM25.83 184.27h5.27v5.26h-5.27zM36.35 184.27h5.26v5.26h-5.26zM46.88 184.27h5.27v5.26h-5.27zM57.41 184.27h5.27v5.26h-5.27zM67.94 184.27h5.27v5.26h-5.27zM78.47 184.27h5.27v5.26h-5.27zM89.00 184.27h5.27v5.26h-5.27zM99.53 184.27h5.26v5.26h-5.26zM110.06 184.27h5.26v5.26h-5.26zM120.59 184.27h5.26v5.26h-5.26zM131.12 184.27h5.26v5.26h-5.26zM141.66 184.27h5.26v5.26h-5.26zM152.19 184.27h5.26v5.26h-5.26zM162.72 184.27h5.26v5.26h-5.26zM173.24 184.27h5.26v5.26h-5.26zM183.77 184.27h5.26v5.26h-5.26zM194.30 184.27h5.26v5.26h-5.26zM204.83 184.27h5.26v5.26h-5.26zM215.36 184.27h5.26v5.26h-5.26zM225.89 184.27h5.26v5.26h-5.26zM236.42 184.27h5.26v5.26h-5.26zM246.95 184.27h5.26v5.26h-5.26zM257.48 184.27h5.26v5.26h-5.26zM268.01 184.27h5.26v5.26h-5.26zM278.54 184.27h5.26v5.26h-5.26zM289.07 184.27h5.26v5.26h-5.26zM299.60 184.27h5.26v5.26h-5.26zM310.13 184.27h5.26v5.26h-5.26zM320.66 184.27h5.26v5.26h-5.26zM331.19 184.27h5.26v5.26h-5.26zM341.72 184.27h5.26v5.26h-5.26zM352.25 184.27h5.26v5.26h-5.26zM362.78 184.27h5.26v5.26h-5.26zM373.31 184.27h5.26v5.26h-5.26zM0.00 189.54h4.77v5.26h-4.77zM10.03 189.54h5.27v5.26h-5.27zM20.56 189.54h5.27v5.26h-5.27zM31.09 189.54h5.27v5.26h-5.27zM41.62 189.54h5.27v5.26h-5.27zM52.15 189.54h5.27v5.26h-5.27zM62.68 189.54h5.27v5.26h-5.27zM73.21 189.54h5.27v5.26h-5.27zM83.74 189.54h5.27v5.26h-5.27zM94.27 189.54h5.27v5.26h-5.27zM104.80 189.54h5.26v5.26h-5.26zM115.33 189.54h5.26v5.26h-5.26zM125.86 189.54h5.26v5.26h-5.26zM136.39 189.54h5.26v5.26h-5.26zM146.92 189.54h5.26v5.26h-5.26zM157.45 189.54h5.26v5.26h-5.26zM167.98 189.54h5.26v5.26h-5.26zM178.51 189.54h5.26v5.26h-5.26zM189.04 189.54h5.26v5.26h-5.26zM199.57 189.54h5.26v5.26h-5.26zM210.10 189.54h5.26v5.26h-5.26zM220.63 189.54h5.26v5.26h-5.26zM231.16 189.54h5.26v5.26h-5.26zM241.69 189.54h5.26v5.26h-5.26zM252.22 189.54h5.26v5.26h-5.26zM262.75 189.54h5.26v5.26h-5.26zM273.28 189.54h5.26v5.26h-5.26zM283.81 189.54h5.26v5.26h-5.26zM294.34 189.54h5.26v5.26h-5.26zM304.87 189.54h5.26v5.26h-5.26zM315.40 189.54h5.26v5.26h-5.26zM325.93 189.54h5.26v5.26h-5.26zM336.46 189.54h5.26v5.26h-5.26zM346.99 189.54h5.26v5.26h-5.26zM357.52 189.54h5.26v5.26h-5.26zM368.05 189.54h5.26v5.26h-5.26zM378.58 189.54h4.92v5.26h-4.92zM4.77 194.80h5.27v5.26h-5.27zM15.30 194.80h5.27v5.26h-5.27zM25.83 194.80h5.27v5.26h-5.27zM36.35 194.80h5.26v5.26h-5.26zM46.88 194.80h5.27v5.26h-5.27zM57.41 194.80h5.27v5.26h-5.27zM67.94 194.80h5.27v5.26h-5.27zM78.47 194.80h5.27v5.26h-5.27zM89.00 194.80h5.27v5.26h-5.27zM99.53 194.80h5.26v5.26h-5.26zM110.06 194.80h5.26v5.26h-5.26zM120.59 194.80h5.26v5.26h-5.26zM131.12 194.80h5.26v5.26h-5.26zM141.66 194.80h5.26v5.26h-5.26zM152.19 194.80h5.26v5.26h-5.26zM162.72 194.80h5.26v5.26h-5.26zM173.24 194.80h5.26v5.26h-5.26zM183.77 194.80h5.26v5.26h-5.26zM194.30 194.80h5.26v5.26h-5.26zM204.83 194.80h5.26v5.26h-5.26zM215.36 194.80h5.26v5.26h-5.26zM225.89 194.80h5.26v5.26h-5.26zM236.42 194.80h5.26v5.26h-5.26zM246.95 194.80h5.26v5.26h-5.26zM257.48 194.80h5.26v5.26h-5.26zM268.01 194.80h5.26v5.26h-5.26zM278.54 194.80h5.26v5.26h-5.26zM289.07 194.80h5.26v5.26h-5.26zM299.60 194.80h5.26v5.26h-5.26zM310.13 194.80h5.26v5.26h-5.26zM320.66 194.80h5.26v5.26h-5.26zM331.19 194.80h5.26v5.26h-5.26zM341.72 194.80h5.26v5.26h-5.26zM352.25 194.80h5.26v5.26h-5.26zM362.78 194.80h5.26v5.26h-5.26zM373.31 194.80h5.26v5.26h-5.26zM0.00 200.07h4.77v5.26h-4.77zM10.03 200.07h5.27v5.26h-5.27zM20.56 200.07h5.27v5.26h-5.27zM31.09 200.07h5.27v5.26h-5.27zM41.62 200.07h5.27v5.26h-5.27zM52.15 200.07h5.27v5.26h-5.27zM62.68 200.07h5.27v5.26h-5.27zM73.21 200.07h5.27v5.26h-5.27zM83.74 200.07h5.27v5.26h-5.27zM94.27 200.07h5.27v5.26h-5.27zM104.80 200.07h5.26v5.26h-5.26zM115.33 200.07h5.26v5.26h-5.26zM125.86 200.07h5.26v5.26h-5.26zM136.39 200.07h5.26v5.26h-5.26zM146.92 200.07h5.26v5.26h-5.26zM157.45 200.07h5.26v5.26h-5.26zM167.98 200.07h5.26v5.26h-5.26zM178.51 200.07h5.26v5.26h-5.26zM189.04 200.07h5.26v5.26h-5.26zM199.57 200.07h5.26v5.26h-5.26zM210.10 200.07h5.26v5.26h-5.26zM220.63 200.07h5.26v5.26h-5.26zM231.16 200.07h5.26v5.26h-5.26zM241.69 200.07h5.26v5.26h-5.26zM252.22 200.07h5.26v5.26h-5.26zM262.75 200.07h5.26v5.26h-5.26zM273.28 200.07h5.26v5.26h-5.26zM283.81 200.07h5.26v5.26h-5.26zM294.34 200.07h5.26v5.26h-5.26zM304.87 200.07h5.26v5.26h-5.26zM315.40 200.07h5.26v5.26h-5.26zM325.93 200.07h5.26v5.26h-5.26zM336.46 200.07h5.26v5.26h-5.26zM346.99 200.07h5.26v5.26h-5.26zM357.52 200.07h5.26v5.26h-5.26zM368.05 200.07h5.26v5.26h-5.26zM378.58 200.07h4.92v5.26h-4.92zM4.77 205.33h5.27v5.26h-5.27zM15.30 205.33h5.27v5.26h-5.27zM25.83 205.33h5.27v5.26h-5.27zM36.35 205.33h5.26v5.26h-5.26zM46.88 205.33h5.27v5.26h-5.27zM57.41 205.33h5.27v5.26h-5.27zM67.94 205.33h5.27v5.26h-5.27zM78.47 205.33h5.27v5.26h-5.27zM89.00 205.33h5.27v5.26h-5.27zM99.53 205.33h5.26v5.26h-5.26zM110.06 205.33h5.26v5.26h-5.26zM120.59 205.33h5.26v5.26h-5.26zM131.12 205.33h5.26v5.26h-5.26zM141.66 205.33h5.26v5.26h-5.26zM152.19 205.33h5.26v5.26h-5.26zM162.72 205.33h5.26v5.26h-5.26zM173.24 205.33h5.26v5.26h-5.26zM183.77 205.33h5.26v5.26h-5.26zM194.30 205.33h5.26v5.26h-5.26zM204.83 205.33h5.26v5.26h-5.26zM215.36 205.33h5.26v5.26h-5.26zM225.89 205.33h5.26v5.26h-5.26zM236.42 205.33h5.26v5.26h-5.26zM246.95 205.33h5.26v5.26h-5.26zM257.48 205.33h5.26v5.26h-5.26zM268.01 205.33h5.26v5.26h-5.26zM278.54 205.33h5.26v5.26h-5.26zM289.07 205.33h5.26v5.26h-5.26zM299.60 205.33h5.26v5.26h-5.26zM310.13 205.33h5.26v5.26h-5.26zM320.66 205.33h5.26v5.26h-5.26zM331.19 205.33h5.26v5.26h-5.26zM341.72 205.33h5.26v5.26h-5.26zM352.25 205.33h5.26v5.26h-5.26zM362.78 205.33h5.26v5.26h-5.26zM373.31 205.33h5.26v5.26h-5.26zM0.00 210.60h4.77v5.26h-4.77zM10.03 210.60h5.27v5.26h-5.27zM20.56 210.60h5.27v5.26h-5.27zM31.09 210.60h5.27v5.26h-5.27zM41.62 210.60h5.27v5.26h-5.27zM52.15 210.60h5.27v5.26h-5.27zM62.68 210.60h5.27v5.26h-5.27zM73.21 210.60h5.27v5.26h-5.27zM83.74 210.60h5.27v5.26h-5.27zM94.27 210.60h5.27v5.26h-5.27zM104.80 210.60h5.26v5.26h-5.26zM115.33 210.60h5.26v5.26h-5.26zM125.86 210.60h5.26v5.26h-5.26zM136.39 210.60h5.26v5.26h-5.26zM146.92 210.60h5.26v5.26h-5.26zM157.45 210.60h5.26v5.26h-5.26zM167.98 210.60h5.26v5.26h-5.26zM178.51 210.60h5.26v5.26h-5.26zM189.04 210.60h5.26v5.26h-5.26zM199.57 210.60h5.26v5.26h-5.26zM210.10 210.60h5.26v5.26h-5.26zM220.63 210.60h5.26v5.26h-5.26zM231.16 210.60h5.26v5.26h-5.26zM241.69 210.60h5.26v5.26h-5.26zM252.22 210.60h5.26v5.26h-5.26zM262.75 210.60h5.26v5.26h-5.26zM273.28 210.60h5.26v5.26h-5.26zM283.81 210.60h5.26v5.26h-5.26zM294.34 210.60h5.26v5.26h-5.26zM304.87 210.60h5.26v5.26h-5.26zM315.40 210.60h5.26v5.26h-5.26zM325.93 210.60h5.26v5.26h-5.26zM336.46 210.60h5.26v5.26h-5.26zM346.99 210.60h5.26v5.26h-5.26zM357.52 210.60h5.26v5.26h-5.26zM368.05 210.60h5.26v5.26h-5.26zM378.58 210.60h4.92v5.26h-4.92zM4.77 215.87h5.27v5.26h-5.27zM15.30 215.87h5.27v5.26h-5.27zM25.83 215.87h5.27v5.26h-5.27zM36.35 215.87h5.26v5.26h-5.26zM46.88 215.87h5.27v5.26h-5.27zM57.41 215.87h5.27v5.26h-5.27zM67.94 215.87h5.27v5.26h-5.27zM78.47 215.87h5.27v5.26h-5.27zM89.00 215.87h5.27v5.26h-5.27zM99.53 215.87h5.26v5.26h-5.26zM110.06 215.87h5.26v5.26h-5.26zM120.59 215.87h5.26v5.26h-5.26zM131.12 215.87h5.26v5.26h-5.26zM141.66 215.87h5.26v5.26h-5.26zM152.19 215.87h5.26v5.26h-5.26zM162.72 215.87h5.26v5.26h-5.26zM173.24 215.87h5.26v5.26h-5.26zM183.77 215.87h5.26v5.26h-5.26zM194.30 215.87h5.26v5.26h-5.26zM204.83 215.87h5.26v5.26h-5.26zM215.36 215.87h5.26v5.26h-5.26zM225.89 215.87h5.26v5.26h-5.26zM236.42 215.87h5.26v5.26h-5.26zM246.95 215.87h5.26v5.26h-5.26zM257.48 215.87h5.26v5.26h-5.26zM268.01 215.87h5.26v5.26h-5.26zM278.54 215.87h5.26v5.26h-5.26zM289.07 215.87h5.26v5.26h-5.26zM299.60 215.87h5.26v5.26h-5.26zM310.13 215.87h5.26v5.26h-5.26zM320.66 215.87h5.26v5.26h-5.26zM331.19 215.87h5.26v5.26h-5.26zM341.72 215.87h5.26v5.26h-5.26zM352.25 215.87h5.26v5.26h-5.26zM362.78 215.87h5.26v5.26h-5.26zM373.31 215.87h5.26v5.26h-5.26zM0.00 221.13h4.77v5.26h-4.77zM10.03 221.13h5.27v5.26h-5.27zM20.56 221.13h5.27v5.26h-5.27zM31.09 221.13h5.27v5.26h-5.27zM41.62 221.13h5.27v5.26h-5.27zM52.15 221.13h5.27v5.26h-5.27zM62.68 221.13h5.27v5.26h-5.27zM73.21 221.13h5.27v5.26h-5.27zM83.74 221.13h5.27v5.26h-5.27zM94.27 221.13h5.27v5.26h-5.27zM104.80 221.13h5.26v5.26h-5.26zM115.33 221.13h5.26v5.26h-5.26zM125.86 221.13h5.26v5.26h-5.26zM136.39 221.13h5.26v5.26h-5.26zM146.92 221.13h5.26v5.26h-5.26zM157.45 221.13h5.26v5.26h-5.26zM167.98 221.13h5.26v5.26h-5.26zM178.51 221.13h5.26v5.26h-5.26zM189.04 221.13h5.26v5.26h-5.26zM199.57 221.13h5.26v5.26h-5.26zM210.10 221.13h5.26v5.26h-5.26zM220.63 221.13h5.26v5.26h-5.26zM231.16 221.13h5.26v5.26h-5.26zM241.69 221.13h5.26v5.26h-5.26zM252.22 221.13h5.26v5.26h-5.26zM262.75 221.13h5.26v5.26h-5.26zM273.28 221.13h5.26v5.26h-5.26zM283.81 221.13h5.26v5.26h-5.26zM294.34 221.13h5.26v5.26h-5.26zM304.87 221.13h5.26v5.26h-5.26zM315.40 221.13h5.26v5.26h-5.26zM325.93 221.13h5.26v5.26h-5.26zM336.46 221.13h5.26v5.26h-5.26zM346.99 221.13h5.26v5.26h-5.26zM357.52 221.13h5.26v5.26h-5.26zM368.05 221.13h5.26v5.26h-5.26zM378.58 221.13h4.92v5.26h-4.92zM4.77 226.39h5.27v5.26h-5.27zM15.30 226.39h5.27v5.26h-5.27zM25.83 226.39h5.27v5.26h-5.27zM36.35 226.39h5.26v5.26h-5.26zM46.88 226.39h5.27v5.26h-5.27zM57.41 226.39h5.27v5.26h-5.27zM67.94 226.39h5.27v5.26h-5.27zM78.47 226.39h5.27v5.26h-5.27zM89.00 226.39h5.27v5.26h-5.27zM99.53 226.39h5.26v5.26h-5.26zM110.06 226.39h5.26v5.26h-5.26zM120.59 226.39h5.26v5.26h-5.26zM131.12 226.39h5.26v5.26h-5.26zM141.66 226.39h5.26v5.26h-5.26zM152.19 226.39h5.26v5.26h-5.26zM162.72 226.39h5.26v5.26h-5.26zM173.24 226.39h5.26v5.26h-5.26zM183.77 226.39h5.26v5.26h-5.26zM194.30 226.39h5.26v5.26h-5.26zM204.83 226.39h5.26v5.26h-5.26zM215.36 226.39h5.26v5.26h-5.26zM225.89 226.39h5.26v5.26h-5.26zM236.42 226.39h5.26v5.26h-5.26zM246.95 226.39h5.26v5.26h-5.26zM257.48 226.39h5.26v5.26h-5.26zM268.01 226.39h5.26v5.26h-5.26zM278.54 226.39h5.26v5.26h-5.26zM289.07 226.39h5.26v5.26h-5.26zM299.60 226.39h5.26v5.26h-5.26zM310.13 226.39h5.26v5.26h-5.26zM320.66 226.39h5.26v5.26h-5.26zM331.19 226.39h5.26v5.26h-5.26zM341.72 226.39h5.26v5.26h-5.26zM352.25 226.39h5.26v5.26h-5.26zM362.78 226.39h5.26v5.26h-5.26zM373.31 226.39h5.26v5.26h-5.26zM0.00 231.66h4.77v5.26h-4.77zM10.03 231.66h5.27v5.26h-5.27zM20.56 231.66h5.27v5.26h-5.27zM31.09 231.66h5.27v5.26h-5.27zM41.62 231.66h5.27v5.26h-5.27zM52.15 231.66h5.27v5.26h-5.27zM62.68 231.66h5.27v5.26h-5.27zM73.21 231.66h5.27v5.26h-5.27zM83.74 231.66h5.27v5.26h-5.27zM94.27 231.66h5.27v5.26h-5.27zM104.80 231.66h5.26v5.26h-5.26zM115.33 231.66h5.26v5.26h-5.26zM125.86 231.66h5.26v5.26h-5.26zM136.39 231.66h5.26v5.26h-5.26zM146.92 231.66h5.26v5.26h-5.26zM157.45 231.66h5.26v5.26h-5.26zM167.98 231.66h5.26v5.26h-5.26zM178.51 231.66h5.26v5.26h-5.26zM189.04 231.66h5.26v5.26h-5.26zM199.57 231.66h5.26v5.26h-5.26zM210.10 231.66h5.26v5.26h-5.26zM220.63 231.66h5.26v5.26h-5.26zM231.16 231.66h5.26v5.26h-5.26zM241.69 231.66h5.26v5.26h-5.26zM252.22 231.66h5.26v5.26h-5.26zM262.75 231.66h5.26v5.26h-5.26zM273.28 231.66h5.26v5.26h-5.26zM283.81 231.66h5.26v5.26h-5.26zM294.34 231.66h5.26v5.26h-5.26zM304.87 231.66h5.26v5.26h-5.26zM315.40 231.66h5.26v5.26h-5.26zM325.93 231.66h5.26v5.26h-5.26zM336.46 231.66h5.26v5.26h-5.26zM346.99 231.66h5.26v5.26h-5.26zM357.52 231.66h5.26v5.26h-5.26zM368.05 231.66h5.26v5.26h-5.26zM378.58 231.66h4.92v5.26h-4.92zM4.77 236.92h5.27v5.26h-5.27zM15.30 236.92h5.27v5.26h-5.27zM25.83 236.92h5.27v5.26h-5.27zM36.35 236.92h5.26v5.26h-5.26zM46.88 236.92h5.27v5.26h-5.27zM57.41 236.92h5.27v5.26h-5.27zM67.94 236.92h5.27v5.26h-5.27zM78.47 236.92h5.27v5.26h-5.27zM89.00 236.92h5.27v5.26h-5.27zM99.53 236.92h5.26v5.26h-5.26zM110.06 236.92h5.26v5.26h-5.26zM120.59 236.92h5.26v5.26h-5.26zM131.12 236.92h5.26v5.26h-5.26zM141.66 236.92h5.26v5.26h-5.26zM152.19 236.92h5.26v5.26h-5.26zM162.72 236.92h5.26v5.26h-5.26zM173.24 236.92h5.26v5.26h-5.26zM183.77 236.92h5.26v5.26h-5.26zM194.30 236.92h5.26v5.26h-5.26zM204.83 236.92h5.26v5.26h-5.26zM215.36 236.92h5.26v5.26h-5.26zM225.89 236.92h5.26v5.26h-5.26zM236.42 236.92h5.26v5.26h-5.26zM246.95 236.92h5.26v5.26h-5.26zM257.48 236.92h5.26v5.26h-5.26zM268.01 236.92h5.26v5.26h-5.26zM278.54 236.92h5.26v5.26h-5.26zM289.07 236.92h5.26v5.26h-5.26zM299.60 236.92h5.26v5.26h-5.26zM310.13 236.92h5.26v5.26h-5.26zM320.66 236.92h5.26v5.26h-5.26zM331.19 236.92h5.26v5.26h-5.26zM341.72 236.92h5.26v5.26h-5.26zM352.25 236.92h5.26v5.26h-5.26zM362.78 236.92h5.26v5.26h-5.26zM373.31 236.92h5.26v5.26h-5.26zM0.00 242.19h4.77v5.26h-4.77zM10.03 242.19h5.27v5.26h-5.27zM20.56 242.19h5.27v5.26h-5.27zM31.09 242.19h5.27v5.26h-5.27zM41.62 242.19h5.27v5.26h-5.27zM52.15 242.19h5.27v5.26h-5.27zM62.68 242.19h5.27v5.26h-5.27zM73.21 242.19h5.27v5.26h-5.27zM83.74 242.19h5.27v5.26h-5.27zM94.27 242.19h5.27v5.26h-5.27zM104.80 242.19h5.26v5.26h-5.26zM115.33 242.19h5.26v5.26h-5.26zM125.86 242.19h5.26v5.26h-5.26zM136.39 242.19h5.26v5.26h-5.26zM146.92 242.19h5.26v5.26h-5.26zM157.45 242.19h5.26v5.26h-5.26zM167.98 242.19h5.26v5.26h-5.26zM178.51 242.19h5.26v5.26h-5.26zM189.04 242.19h5.26v5.26h-5.26zM199.57 242.19h5.26v5.26h-5.26zM210.10 242.19h5.26v5.26h-5.26zM220.63 242.19h5.26v5.26h-5.26zM231.16 242.19h5.26v5.26h-5.26zM241.69 242.19h5.26v5.26h-5.26zM252.22 242.19h5.26v5.26h-5.26zM262.75 242.19h5.26v5.26h-5.26zM273.28 242.19h5.26v5.26h-5.26zM283.81 242.19h5.26v5.26h-5.26zM294.34 242.19h5.26v5.26h-5.26zM304.87 242.19h5.26v5.26h-5.26zM315.40 242.19h5.26v5.26h-5.26zM325.93 242.19h5.26v5.26h-5.26zM336.46 242.19h5.26v5.26h-5.26zM346.99 242.19h5.26v5.26h-5.26zM357.52 242.19h5.26v5.26h-5.26zM368.05 242.19h5.26v5.26h-5.26zM378.58 242.19h4.92v5.26h-4.92zM4.77 247.45h5.27v5.26h-5.27zM15.30 247.45h5.27v5.26h-5.27zM25.83 247.45h5.27v5.26h-5.27zM36.35 247.45h5.26v5.26h-5.26zM46.88 247.45h5.27v5.26h-5.27zM57.41 247.45h5.27v5.26h-5.27zM67.94 247.45h5.27v5.26h-5.27zM78.47 247.45h5.27v5.26h-5.27zM89.00 247.45h5.27v5.26h-5.27zM99.53 247.45h5.26v5.26h-5.26zM110.06 247.45h5.26v5.26h-5.26zM120.59 247.45h5.26v5.26h-5.26zM131.12 247.45h5.26v5.26h-5.26zM141.66 247.45h5.26v5.26h-5.26zM152.19 247.45h5.26v5.26h-5.26zM162.72 247.45h5.26v5.26h-5.26zM173.24 247.45h5.26v5.26h-5.26zM183.77 247.45h5.26v5.26h-5.26zM194.30 247.45h5.26v5.26h-5.26zM204.83 247.45h5.26v5.26h-5.26zM215.36 247.45h5.26v5.26h-5.26zM225.89 247.45h5.26v5.26h-5.26zM236.42 247.45h5.26v5.26h-5.26zM246.95 247.45h5.26v5.26h-5.26zM257.48 247.45h5.26v5.26h-5.26zM268.01 247.45h5.26v5.26h-5.26zM278.54 247.45h5.26v5.26h-5.26zM289.07 247.45h5.26v5.26h-5.26zM299.60 247.45h5.26v5.26h-5.26zM310.13 247.45h5.26v5.26h-5.26zM320.66 247.45h5.26v5.26h-5.26zM331.19 247.45h5.26v5.26h-5.26zM341.72 247.45h5.26v5.26h-5.26zM352.25 247.45h5.26v5.26h-5.26zM362.78 247.45h5.26v5.26h-5.26zM373.31 247.45h5.26v5.26h-5.26zM0.00 252.72h4.77v5.26h-4.77zM10.03 252.72h5.27v5.26h-5.27zM20.56 252.72h5.27v5.26h-5.27zM31.09 252.72h5.27v5.26h-5.27zM41.62 252.72h5.27v5.26h-5.27zM52.15 252.72h5.27v5.26h-5.27zM62.68 252.72h5.27v5.26h-5.27zM73.21 252.72h5.27v5.26h-5.27zM83.74 252.72h5.27v5.26h-5.27zM94.27 252.72h5.27v5.26h-5.27zM104.80 252.72h5.26v5.26h-5.26zM115.33 252.72h5.26v5.26h-5.26zM125.86 252.72h5.26v5.26h-5.26zM136.39 252.72h5.26v5.26h-5.26zM146.92 252.72h5.26v5.26h-5.26zM157.45 252.72h5.26v5.26h-5.26zM167.98 252.72h5.26v5.26h-5.26zM178.51 252.72h5.26v5.26h-5.26zM189.04 252.72h5.26v5.26h-5.26zM199.57 252.72h5.26v5.26h-5.26zM210.10 252.72h5.26v5.26h-5.26zM220.63 252.72h5.26v5.26h-5.26zM231.16 252.72h5.26v5.26h-5.26zM241.69 252.72h5.26v5.26h-5.26zM252.22 252.72h5.26v5.26h-5.26zM262.75 252.72h5.26v5.26h-5.26zM273.28 252.72h5.26v5.26h-5.26zM283.81 252.72h5.26v5.26h-5.26zM294.34 252.72h5.26v5.26h-5.26zM304.87 252.72h5.26v5.26h-5.26zM315.40 252.72h5.26v5.26h-5.26zM325.93 252.72h5.26v5.26h-5.26zM336.46 252.72h5.26v5.26h-5.26zM346.99 252.72h5.26v5.26h-5.26zM357.52 252.72h5.26v5.26h-5.26zM368.05 252.72h5.26v5.26h-5.26zM378.58 252.72h4.92v5.26h-4.92zM4.77 257.98h5.27v5.26h-5.27zM15.30 257.98h5.27v5.26h-5.27zM25.83 257.98h5.27v5.26h-5.27zM36.35 257.98h5.26v5.26h-5.26zM46.88 257.98h5.27v5.26h-5.27zM57.41 257.98h5.27v5.26h-5.27zM67.94 257.98h5.27v5.26h-5.27zM78.47 257.98h5.27v5.26h-5.27zM89.00 257.98h5.27v5.26h-5.27zM99.53 257.98h5.26v5.26h-5.26zM110.06 257.98h5.26v5.26h-5.26zM120.59 257.98h5.26v5.26h-5.26zM131.12 257.98h5.26v5.26h-5.26zM141.66 257.98h5.26v5.26h-5.26zM152.19 257.98h5.26v5.26h-5.26zM162.72 257.98h5.26v5.26h-5.26zM173.24 257.98h5.26v5.26h-5.26zM183.77 257.98h5.26v5.26h-5.26zM194.30 257.98h5.26v5.26h-5.26zM204.83 257.98h5.26v5.26h-5.26zM215.36 257.98h5.26v5.26h-5.26zM225.89 257.98h5.26v5.26h-5.26zM236.42 257.98h5.26v5.26h-5.26zM246.95 257.98h5.26v5.26h-5.26zM257.48 257.98h5.26v5.26h-5.26zM268.01 257.98h5.26v5.26h-5.26zM278.54 257.98h5.26v5.26h-5.26zM289.07 257.98h5.26v5.26h-5.26zM299.60 257.98h5.26v5.26h-5.26zM310.13 257.98h5.26v5.26h-5.26zM320.66 257.98h5.26v5.26h-5.26zM331.19 257.98h5.26v5.26h-5.26zM341.72 257.98h5.26v5.26h-5.26zM352.25 257.98h5.26v5.26h-5.26zM362.78 257.98h5.26v5.26h-5.26zM373.31 257.98h5.26v5.26h-5.26zM0.00 263.25h4.77v5.26h-4.77zM10.03 263.25h5.27v5.26h-5.27zM20.56 263.25h5.27v5.26h-5.27zM31.09 263.25h5.27v5.26h-5.27zM41.62 263.25h5.27v5.26h-5.27zM52.15 263.25h5.27v5.26h-5.27zM62.68 263.25h5.27v5.26h-5.27zM73.21 263.25h5.27v5.26h-5.27zM83.74 263.25h5.27v5.26h-5.27zM94.27 263.25h5.27v5.26h-5.27zM104.80 263.25h5.26v5.26h-5.26zM115.33 263.25h5.26v5.26h-5.26zM125.86 263.25h5.26v5.26h-5.26zM136.39 263.25h5.26v5.26h-5.26zM146.92 263.25h5.26v5.26h-5.26zM157.45 263.25h5.26v5.26h-5.26zM167.98 263.25h5.26v5.26h-5.26zM178.51 263.25h5.26v5.26h-5.26zM189.04 263.25h5.26v5.26h-5.26zM199.57 263.25h5.26v5.26h-5.26zM210.10 263.25h5.26v5.26h-5.26zM220.63 263.25h5.26v5.26h-5.26zM231.16 263.25h5.26v5.26h-5.26zM241.69 263.25h5.26v5.26h-5.26zM252.22 263.25h5.26v5.26h-5.26zM262.75 263.25h5.26v5.26h-5.26zM273.28 263.25h5.26v5.26h-5.26zM283.81 263.25h5.26v5.26h-5.26zM294.34 263.25h5.26v5.26h-5.26zM304.87 263.25h5.26v5.26h-5.26zM315.40 263.25h5.26v5.26h-5.26zM325.93 263.25h5.26v5.26h-5.26zM336.46 263.25h5.26v5.26h-5.26zM346.99 263.25h5.26v5.26h-5.26zM357.52 263.25h5.26v5.26h-5.26zM368.05 263.25h5.26v5.26h-5.26zM378.58 263.25h4.92v5.26h-4.92zM4.77 268.51h5.27v5.26h-5.27zM15.30 268.51h5.27v5.26h-5.27zM25.83 268.51h5.27v5.26h-5.27zM36.35 268.51h5.26v5.26h-5.26zM46.88 268.51h5.27v5.26h-5.27zM57.41 268.51h5.27v5.26h-5.27zM67.94 268.51h5.27v5.26h-5.27zM78.47 268.51h5.27v5.26h-5.27zM89.00 268.51h5.27v5.26h-5.27zM99.53 268.51h5.26v5.26h-5.26zM110.06 268.51h5.26v5.26h-5.26zM120.59 268.51h5.26v5.26h-5.26zM131.12 268.51h5.26v5.26h-5.26zM141.66 268.51h5.26v5.26h-5.26zM152.19 268.51h5.26v5.26h-5.26zM162.72 268.51h5.26v5.26h-5.26zM173.24 268.51h5.26v5.26h-5.26zM183.77 268.51h5.26v5.26h-5.26zM194.30 268.51h5.26v5.26h-5.26zM204.83 268.51h5.26v5.26h-5.26zM215.36 268.51h5.26v5.26h-5.26zM225.89 268.51h5.26v5.26h-5.26zM236.42 268.51h5.26v5.26h-5.26zM246.95 268.51h5.26v5.26h-5.26zM257.48 268.51h5.26v5.26h-5.26zM268.01 268.51h5.26v5.26h-5.26zM278.54 268.51h5.26v5.26h-5.26zM289.07 268.51h5.26v5.26h-5.26zM299.60 268.51h5.26v5.26h-5.26zM310.13 268.51h5.26v5.26h-5.26zM320.66 268.51h5.26v5.26h-5.26zM331.19 268.51h5.26v5.26h-5.26zM341.72 268.51h5.26v5.26h-5.26zM352.25 268.51h5.26v5.26h-5.26zM362.78 268.51h5.26v5.26h-5.26zM373.31 268.51h5.26v5.26h-5.26zM0.00 273.78h4.77v5.26h-4.77zM10.03 273.78h5.27v5.26h-5.27zM20.56 273.78h5.27v5.26h-5.27zM31.09 273.78h5.27v5.26h-5.27zM41.62 273.78h5.27v5.26h-5.27zM52.15 273.78h5.27v5.26h-5.27zM62.68 273.78h5.27v5.26h-5.27zM73.21 273.78h5.27v5.26h-5.27zM83.74 273.78h5.27v5.26h-5.27zM94.27 273.78h5.27v5.26h-5.27zM104.80 273.78h5.26v5.26h-5.26zM115.33 273.78h5.26v5.26h-5.26zM125.86 273.78h5.26v5.26h-5.26zM136.39 273.78h5.26v5.26h-5.26zM146.92 273.78h5.26v5.26h-5.26zM157.45 273.78h5.26v5.26h-5.26zM167.98 273.78h5.26v5.26h-5.26zM178.51 273.78h5.26v5.26h-5.26zM189.04 273.78h5.26v5.26h-5.26zM199.57 273.78h5.26v5.26h-5.26zM210.10 273.78h5.26v5.26h-5.26zM220.63 273.78h5.26v5.26h-5.26zM231.16 273.78h5.26v5.26h-5.26zM241.69 273.78h5.26v5.26h-5.26zM252.22 273.78h5.26v5.26h-5.26zM262.75 273.78h5.26v5.26h-5.26zM273.28 273.78h5.26v5.26h-5.26zM283.81 273.78h5.26v5.26h-5.26zM294.34 273.78h5.26v5.26h-5.26zM304.87 273.78h5.26v5.26h-5.26zM315.40 273.78h5.26v5.26h-5.26zM325.93 273.78h5.26v5.26h-5.26zM336.46 273.78h5.26v5.26h-5.26zM346.99 273.78h5.26v5.26h-5.26zM357.52 273.78h5.26v5.26h-5.26zM368.05 273.78h5.26v5.26h-5.26zM378.58 273.78h4.92v5.26h-4.92zM4.77 279.04h5.27v5.26h-5.27zM15.30 279.04h5.27v5.26h-5.27zM25.83 279.04h5.27v5.26h-5.27zM36.35 279.04h5.26v5.26h-5.26zM46.88 279.04h5.27v5.26h-5.27zM57.41 279.04h5.27v5.26h-5.27zM67.94 279.04h5.27v5.26h-5.27zM78.47 279.04h5.27v5.26h-5.27zM89.00 279.04h5.27v5.26h-5.27zM99.53 279.04h5.26v5.26h-5.26zM110.06 279.04h5.26v5.26h-5.26zM120.59 279.04h5.26v5.26h-5.26zM131.12 279.04h5.26v5.26h-5.26zM141.66 279.04h5.26v5.26h-5.26zM152.19 279.04h5.26v5.26h-5.26zM162.72 279.04h5.26v5.26h-5.26zM173.24 279.04h5.26v5.26h-5.26zM183.77 279.04h5.26v5.26h-5.26zM194.30 279.04h5.26v5.26h-5.26zM204.83 279.04h5.26v5.26h-5.26zM215.36 279.04h5.26v5.26h-5.26zM225.89 279.04h5.26v5.26h-5.26zM236.42 279.04h5.26v5.26h-5.26zM246.95 279.04h5.26v5.26h-5.26zM257.48 279.04h5.26v5.26h-5.26zM268.01 279.04h5.26v5.26h-5.26zM278.54 279.04h5.26v5.26h-5.26zM289.07 279.04h5.26v5.26h-5.26zM299.60 279.04h5.26v5.26h-5.26zM310.13 279.04h5.26v5.26h-5.26zM320.66 279.04h5.26v5.26h-5.26zM331.19 279.04h5.26v5.26h-5.26zM341.72 279.04h5.26v5.26h-5.26zM352.25 279.04h5.26v5.26h-5.26zM362.78 279.04h5.26v5.26h-5.26zM373.31 279.04h5.26v5.26h-5.26zM0.00 284.31h4.77v5.26h-4.77zM10.03 284.31h5.27v5.26h-5.27zM20.56 284.31h5.27v5.26h-5.27zM31.09 284.31h5.27v5.26h-5.27zM41.62 284.31h5.27v5.26h-5.27zM52.15 284.31h5.27v5.26h-5.27zM62.68 284.31h5.27v5.26h-5.27zM73.21 284.31h5.27v5.26h-5.27zM83.74 284.31h5.27v5.26h-5.27zM94.27 284.31h5.27v5.26h-5.27zM104.80 284.31h5.26v5.26h-5.26zM115.33 284.31h5.26v5.26h-5.26zM125.86 284.31h5.26v5.26h-5.26zM136.39 284.31h5.26v5.26h-5.26zM146.92 284.31h5.26v5.26h-5.26zM157.45 284.31h5.26v5.26h-5.26zM167.98 284.31h5.26v5.26h-5.26zM178.51 284.31h5.26v5.26h-5.26zM189.04 284.31h5.26v5.26h-5.26zM199.57 284.31h5.26v5.26h-5.26zM210.10 284.31h5.26v5.26h-5.26zM220.63 284.31h5.26v5.26h-5.26zM231.16 284.31h5.26v5.26h-5.26zM241.69 284.31h5.26v5.26h-5.26zM252.22 284.31h5.26v5.26h-5.26zM262.75 284.31h5.26v5.26h-5.26zM273.28 284.31h5.26v5.26h-5.26zM283.81 284.31h5.26v5.26h-5.26zM294.34 284.31h5.26v5.26h-5.26zM304.87 284.31h5.26v5.26h-5.26zM315.40 284.31h5.26v5.26h-5.26zM325.93 284.31h5.26v5.26h-5.26zM336.46 284.31h5.26v5.26h-5.26zM346.99 284.31h5.26v5.26h-5.26zM357.52 284.31h5.26v5.26h-5.26zM368.05 284.31h5.26v5.26h-5.26zM378.58 284.31h4.92v5.26h-4.92zM4.77 289.57h5.27v5.26h-5.27zM15.30 289.57h5.27v5.26h-5.27zM25.83 289.57h5.27v5.26h-5.27zM36.35 289.57h5.26v5.26h-5.26zM46.88 289.57h5.27v5.26h-5.27zM57.41 289.57h5.27v5.26h-5.27zM67.94 289.57h5.27v5.26h-5.27zM78.47 289.57h5.27v5.26h-5.27zM89.00 289.57h5.27v5.26h-5.27zM99.53 289.57h5.26v5.26h-5.26zM110.06 289.57h5.26v5.26h-5.26zM120.59 289.57h5.26v5.26h-5.26zM131.12 289.57h5.26v5.26h-5.26zM141.66 289.57h5.26v5.26h-5.26zM152.19 289.57h5.26v5.26h-5.26zM162.72 289.57h5.26v5.26h-5.26zM173.24 289.57h5.26v5.26h-5.26zM183.77 289.57h5.26v5.26h-5.26zM194.30 289.57h5.26v5.26h-5.26zM204.83 289.57h5.26v5.26h-5.26zM215.36 289.57h5.26v5.26h-5.26zM225.89 289.57h5.26v5.26h-5.26zM236.42 289.57h5.26v5.26h-5.26zM246.95 289.57h5.26v5.26h-5.26zM257.48 289.57h5.26v5.26h-5.26zM268.01 289.57h5.26v5.26h-5.26zM278.54 289.57h5.26v5.26h-5.26zM289.07 289.57h5.26v5.26h-5.26zM299.60 289.57h5.26v5.26h-5.26zM310.13 289.57h5.26v5.26h-5.26zM320.66 289.57h5.26v5.26h-5.26zM331.19 289.57h5.26v5.26h-5.26zM341.72 289.57h5.26v5.26h-5.26zM352.25 289.57h5.26v5.26h-5.26zM362.78 289.57h5.26v5.26h-5.26zM373.31 289.57h5.26v5.26h-5.26zM0.00 294.84h4.77v5.26h-4.77zM10.03 294.84h5.27v5.26h-5.27zM20.56 294.84h5.27v5.26h-5.27zM31.09 294.84h5.27v5.26h-5.27zM41.62 294.84h5.27v5.26h-5.27zM52.15 294.84h5.27v5.26h-5.27zM62.68 294.84h5.27v5.26h-5.27zM73.21 294.84h5.27v5.26h-5.27zM83.74 294.84h5.27v5.26h-5.27zM94.27 294.84h5.27v5.26h-5.27zM104.80 294.84h5.26v5.26h-5.26zM115.33 294.84h5.26v5.26h-5.26zM125.86 294.84h5.26v5.26h-5.26zM136.39 294.84h5.26v5.26h-5.26zM146.92 294.84h5.26v5.26h-5.26zM157.45 294.84h5.26v5.26h-5.26zM167.98 294.84h5.26v5.26h-5.26zM178.51 294.84h5.26v5.26h-5.26zM189.04 294.84h5.26v5.26h-5.26zM199.57 294.84h5.26v5.26h-5.26zM210.10 294.84h5.26v5.26h-5.26zM220.63 294.84h5.26v5.26h-5.26zM231.16 294.84h5.26v5.26h-5.26zM241.69 294.84h5.26v5.26h-5.26zM252.22 294.84h5.26v5.26h-5.26zM262.75 294.84h5.26v5.26h-5.26zM273.28 294.84h5.26v5.26h-5.26zM283.81 294.84h5.26v5.26h-5.26zM294.34 294.84h5.26v5.26h-5.26zM304.87 294.84h5.26v5.26h-5.26zM315.40 294.84h5.26v5.26h-5.26zM325.93 294.84h5.26v5.26h-5.26zM336.46 294.84h5.26v5.26h-5.26zM346.99 294.84h5.26v5.26h-5.26zM357.52 294.84h5.26v5.26h-5.26zM368.05 294.84h5.26v5.26h-5.26zM378.58 294.84h4.92v5.26h-4.92zM4.77 300.10h5.27v5.26h-5.27zM15.30 300.10h5.27v5.26h-5.27zM25.83 300.10h5.27v5.26h-5.27zM36.35 300.10h5.26v5.26h-5.26zM46.88 300.10h5.27v5.26h-5.27zM57.41 300.10h5.27v5.26h-5.27zM67.94 300.10h5.27v5.26h-5.27zM78.47 300.10h5.27v5.26h-5.27zM89.00 300.10h5.27v5.26h-5.27zM99.53 300.10h5.26v5.26h-5.26zM110.06 300.10h5.26v5.26h-5.26zM120.59 300.10h5.26v5.26h-5.26zM131.12 300.10h5.26v5.26h-5.26zM141.66 300.10h5.26v5.26h-5.26zM152.19 300.10h5.26v5.26h-5.26zM162.72 300.10h5.26v5.26h-5.26zM173.24 300.10h5.26v5.26h-5.26zM183.77 300.10h5.26v5.26h-5.26zM194.30 300.10h5.26v5.26h-5.26zM204.83 300.10h5.26v5.26h-5.26zM215.36 300.10h5.26v5.26h-5.26zM225.89 300.10h5.26v5.26h-5.26zM236.42 300.10h5.26v5.26h-5.26zM246.95 300.10h5.26v5.26h-5.26zM257.48 300.10h5.26v5.26h-5.26zM268.01 300.10h5.26v5.26h-5.26zM278.54 300.10h5.26v5.26h-5.26zM289.07 300.10h5.26v5.26h-5.26zM299.60 300.10h5.26v5.26h-5.26zM310.13 300.10h5.26v5.26h-5.26zM320.66 300.10h5.26v5.26h-5.26zM331.19 300.10h5.26v5.26h-5.26zM341.72 300.10h5.26v5.26h-5.26zM352.25 300.10h5.26v5.26h-5.26zM362.78 300.10h5.26v5.26h-5.26zM373.31 300.10h5.26v5.26h-5.26zM0.00 305.37h4.77v5.26h-4.77zM10.03 305.37h5.27v5.26h-5.27zM20.56 305.37h5.27v5.26h-5.27zM31.09 305.37h5.27v5.26h-5.27zM41.62 305.37h5.27v5.26h-5.27zM52.15 305.37h5.27v5.26h-5.27zM62.68 305.37h5.27v5.26h-5.27zM73.21 305.37h5.27v5.26h-5.27zM83.74 305.37h5.27v5.26h-5.27zM94.27 305.37h5.27v5.26h-5.27zM104.80 305.37h5.26v5.26h-5.26zM115.33 305.37h5.26v5.26h-5.26zM125.86 305.37h5.26v5.26h-5.26zM136.39 305.37h5.26v5.26h-5.26zM146.92 305.37h5.26v5.26h-5.26zM157.45 305.37h5.26v5.26h-5.26zM167.98 305.37h5.26v5.26h-5.26zM178.51 305.37h5.26v5.26h-5.26zM189.04 305.37h5.26v5.26h-5.26zM199.57 305.37h5.26v5.26h-5.26zM210.10 305.37h5.26v5.26h-5.26zM220.63 305.37h5.26v5.26h-5.26zM231.16 305.37h5.26v5.26h-5.26zM241.69 305.37h5.26v5.26h-5.26zM252.22 305.37h5.26v5.26h-5.26zM262.75 305.37h5.26v5.26h-5.26zM273.28 305.37h5.26v5.26h-5.26zM283.81 305.37h5.26v5.26h-5.26zM294.34 305.37h5.26v5.26h-5.26zM304.87 305.37h5.26v5.26h-5.26zM315.40 305.37h5.26v5.26h-5.26zM325.93 305.37h5.26v5.26h-5.26zM336.46 305.37h5.26v5.26h-5.26zM346.99 305.37h5.26v5.26h-5.26zM357.52 305.37h5.26v5.26h-5.26zM368.05 305.37h5.26v5.26h-5.26zM378.58 305.37h4.92v5.26h-4.92zM4.77 310.63h5.27v5.26h-5.27zM15.30 310.63h5.27v5.26h-5.27zM25.83 310.63h5.27v5.26h-5.27zM36.35 310.63h5.26v5.26h-5.26zM46.88 310.63h5.27v5.26h-5.27zM57.41 310.63h5.27v5.26h-5.27zM67.94 310.63h5.27v5.26h-5.27zM78.47 310.63h5.27v5.26h-5.27zM89.00 310.63h5.27v5.26h-5.27zM99.53 310.63h5.26v5.26h-5.26zM110.06 310.63h5.26v5.26h-5.26zM120.59 310.63h5.26v5.26h-5.26zM131.12 310.63h5.26v5.26h-5.26zM141.66 310.63h5.26v5.26h-5.26zM152.19 310.63h5.26v5.26h-5.26zM162.72 310.63h5.26v5.26h-5.26zM173.24 310.63h5.26v5.26h-5.26zM183.77 310.63h5.26v5.26h-5.26zM194.30 310.63h5.26v5.26h-5.26zM204.83 310.63h5.26v5.26h-5.26zM215.36 310.63h5.26v5.26h-5.26zM225.89 310.63h5.26v5.26h-5.26zM236.42 310.63h5.26v5.26h-5.26zM246.95 310.63h5.26v5.26h-5.26zM257.48 310.63h5.26v5.26h-5.26zM268.01 310.63h5.26v5.26h-5.26zM278.54 310.63h5.26v5.26h-5.26zM289.07 310.63h5.26v5.26h-5.26zM299.60 310.63h5.26v5.26h-5.26zM310.13 310.63h5.26v5.26h-5.26zM320.66 310.63h5.26v5.26h-5.26zM331.19 310.63h5.26v5.26h-5.26zM341.72 310.63h5.26v5.26h-5.26zM352.25 310.63h5.26v5.26h-5.26zM362.78 310.63h5.26v5.26h-5.26zM373.31 310.63h5.26v5.26h-5.26zM0.00 315.90h4.77v5.26h-4.77zM10.03 315.90h5.27v5.26h-5.27zM20.56 315.90h5.27v5.26h-5.27zM31.09 315.90h5.27v5.26h-5.27zM41.62 315.90h5.27v5.26h-5.27zM52.15 315.90h5.27v5.26h-5.27zM62.68 315.90h5.27v5.26h-5.27zM73.21 315.90h5.27v5.26h-5.27zM83.74 315.90h5.27v5.26h-5.27zM94.27 315.90h5.27v5.26h-5.27zM104.80 315.90h5.26v5.26h-5.26zM115.33 315.90h5.26v5.26h-5.26zM125.86 315.90h5.26v5.26h-5.26zM136.39 315.90h5.26v5.26h-5.26zM146.92 315.90h5.26v5.26h-5.26zM157.45 315.90h5.26v5.26h-5.26zM167.98 315.90h5.26v5.26h-5.26zM178.51 315.90h5.26v5.26h-5.26zM189.04 315.90h5.26v5.26h-5.26zM199.57 315.90h5.26v5.26h-5.26zM210.10 315.90h5.26v5.26h-5.26zM220.63 315.90h5.26v5.26h-5.26zM231.16 315.90h5.26v5.26h-5.26zM241.69 315.90h5.26v5.26h-5.26zM252.22 315.90h5.26v5.26h-5.26zM262.75 315.90h5.26v5.26h-5.26zM273.28 315.90h5.26v5.26h-5.26zM283.81 315.90h5.26v5.26h-5.26zM294.34 315.90h5.26v5.26h-5.26zM304.87 315.90h5.26v5.26h-5.26zM315.40 315.90h5.26v5.26h-5.26zM325.93 315.90h5.26v5.26h-5.26zM336.46 315.90h5.26v5.26h-5.26zM346.99 315.90h5.26v5.26h-5.26zM357.52 315.90h5.26v5.26h-5.26zM368.05 315.90h5.26v5.26h-5.26zM378.58 315.90h4.92v5.26h-4.92zM4.77 321.16h5.27v5.26h-5.27zM15.30 321.16h5.27v5.26h-5.27zM25.83 321.16h5.27v5.26h-5.27zM36.35 321.16h5.26v5.26h-5.26zM46.88 321.16h5.27v5.26h-5.27zM57.41 321.16h5.27v5.26h-5.27zM67.94 321.16h5.27v5.26h-5.27zM78.47 321.16h5.27v5.26h-5.27zM89.00 321.16h5.27v5.26h-5.27zM99.53 321.16h5.26v5.26h-5.26zM110.06 321.16h5.26v5.26h-5.26zM120.59 321.16h5.26v5.26h-5.26zM131.12 321.16h5.26v5.26h-5.26zM141.66 321.16h5.26v5.26h-5.26zM152.19 321.16h5.26v5.26h-5.26zM162.72 321.16h5.26v5.26h-5.26zM173.24 321.16h5.26v5.26h-5.26zM183.77 321.16h5.26v5.26h-5.26zM194.30 321.16h5.26v5.26h-5.26zM204.83 321.16h5.26v5.26h-5.26zM215.36 321.16h5.26v5.26h-5.26zM225.89 321.16h5.26v5.26h-5.26zM236.42 321.16h5.26v5.26h-5.26zM246.95 321.16h5.26v5.26h-5.26zM257.48 321.16h5.26v5.26h-5.26zM268.01 321.16h5.26v5.26h-5.26zM278.54 321.16h5.26v5.26h-5.26zM289.07 321.16h5.26v5.26h-5.26zM299.60 321.16h5.26v5.26h-5.26zM310.13 321.16h5.26v5.26h-5.26zM320.66 321.16h5.26v5.26h-5.26zM331.19 321.16h5.26v5.26h-5.26zM341.72 321.16h5.26v5.26h-5.26zM352.25 321.16h5.26v5.26h-5.26zM362.78 321.16h5.26v5.26h-5.26zM373.31 321.16h5.26v5.26h-5.26zM0.00 326.43h4.77v5.26h-4.77zM10.03 326.43h5.27v5.26h-5.27zM20.56 326.43h5.27v5.26h-5.27zM31.09 326.43h5.27v5.26h-5.27zM41.62 326.43h5.27v5.26h-5.27zM52.15 326.43h5.27v5.26h-5.27zM62.68 326.43h5.27v5.26h-5.27zM73.21 326.43h5.27v5.26h-5.27zM83.74 326.43h5.27v5.26h-5.27zM94.27 326.43h5.27v5.26h-5.27zM104.80 326.43h5.26v5.26h-5.26zM115.33 326.43h5.26v5.26h-5.26zM125.86 326.43h5.26v5.26h-5.26zM136.39 326.43h5.26v5.26h-5.26zM146.92 326.43h5.26v5.26h-5.26zM157.45 326.43h5.26v5.26h-5.26zM167.98 326.43h5.26v5.26h-5.26zM178.51 326.43h5.26v5.26h-5.26zM189.04 326.43h5.26v5.26h-5.26zM199.57 326.43h5.26v5.26h-5.26zM210.10 326.43h5.26v5.26h-5.26zM220.63 326.43h5.26v5.26h-5.26zM231.16 326.43h5.26v5.26h-5.26zM241.69 326.43h5.26v5.26h-5.26zM252.22 326.43h5.26v5.26h-5.26zM262.75 326.43h5.26v5.26h-5.26zM273.28 326.43h5.26v5.26h-5.26zM283.81 326.43h5.26v5.26h-5.26zM294.34 326.43h5.26v5.26h-5.26zM304.87 326.43h5.26v5.26h-5.26zM315.40 326.43h5.26v5.26h-5.26zM325.93 326.43h5.26v5.26h-5.26zM336.46 326.43h5.26v5.26h-5.26zM346.99 326.43h5.26v5.26h-5.26zM357.52 326.43h5.26v5.26h-5.26zM368.05 326.43h5.26v5.26h-5.26zM378.58 326.43h4.92v5.26h-4.92zM4.77 331.69h5.27v5.26h-5.27zM15.30 331.69h5.27v5.26h-5.27zM25.83 331.69h5.27v5.26h-5.27zM36.35 331.69h5.26v5.26h-5.26zM46.88 331.69h5.27v5.26h-5.27zM57.41 331.69h5.27v5.26h-5.27zM67.94 331.69h5.27v5.26h-5.27zM78.47 331.69h5.27v5.26h-5.27zM89.00 331.69h5.27v5.26h-5.27zM99.53 331.69h5.26v5.26h-5.26zM110.06 331.69h5.26v5.26h-5.26zM120.59 331.69h5.26v5.26h-5.26zM131.12 331.69h5.26v5.26h-5.26zM141.66 331.69h5.26v5.26h-5.26zM152.19 331.69h5.26v5.26h-5.26zM162.72 331.69h5.26v5.26h-5.26zM173.24 331.69h5.26v5.26h-5.26zM183.77 331.69h5.26v5.26h-5.26zM194.30 331.69h5.26v5.26h-5.26zM204.83 331.69h5.26v5.26h-5.26zM215.36 331.69h5.26v5.26h-5.26zM225.89 331.69h5.26v5.26h-5.26zM236.42 331.69h5.26v5.26h-5.26zM246.95 331.69h5.26v5.26h-5.26zM257.48 331.69h5.26v5.26h-5.26zM268.01 331.69h5.26v5.26h-5.26zM278.54 331.69h5.26v5.26h-5.26zM289.07 331.69h5.26v5.26h-5.26zM299.60 331.69h5.26v5.26h-5.26zM310.13 331.69h5.26v5.26h-5.26zM320.66 331.69h5.26v5.26h-5.26zM331.19 331.69h5.26v5.26h-5.26zM341.72 331.69h5.26v5.26h-5.26zM352.25 331.69h5.26v5.26h-5.26zM362.78 331.69h5.26v5.26h-5.26zM373.31 331.69h5.26v5.26h-5.26zM0.00 336.96h4.77v5.26h-4.77zM10.03 336.96h5.27v5.26h-5.27zM20.56 336.96h5.27v5.26h-5.27zM31.09 336.96h5.27v5.26h-5.27zM41.62 336.96h5.27v5.26h-5.27zM52.15 336.96h5.27v5.26h-5.27zM62.68 336.96h5.27v5.26h-5.27zM73.21 336.96h5.27v5.26h-5.27zM83.74 336.96h5.27v5.26h-5.27zM94.27 336.96h5.27v5.26h-5.27zM104.80 336.96h5.26v5.26h-5.26zM115.33 336.96h5.26v5.26h-5.26zM125.86 336.96h5.26v5.26h-5.26zM136.39 336.96h5.26v5.26h-5.26zM146.92 336.96h5.26v5.26h-5.26zM157.45 336.96h5.26v5.26h-5.26zM167.98 336.96h5.26v5.26h-5.26zM178.51 336.96h5.26v5.26h-5.26zM189.04 336.96h5.26v5.26h-5.26zM199.57 336.96h5.26v5.26h-5.26zM210.10 336.96h5.26v5.26h-5.26zM220.63 336.96h5.26v5.26h-5.26zM231.16 336.96h5.26v5.26h-5.26zM241.69 336.96h5.26v5.26h-5.26zM252.22 336.96h5.26v5.26h-5.26zM262.75 336.96h5.26v5.26h-5.26zM273.28 336.96h5.26v5.26h-5.26zM283.81 336.96h5.26v5.26h-5.26zM294.34 336.96h5.26v5.26h-5.26zM304.87 336.96h5.26v5.26h-5.26zM315.40 336.96h5.26v5.26h-5.26zM325.93 336.96h5.26v5.26h-5.26zM336.46 336.96h5.26v5.26h-5.26zM346.99 336.96h5.26v5.26h-5.26zM357.52 336.96h5.26v5.26h-5.26zM368.05 336.96h5.26v5.26h-5.26zM378.58 336.96h4.92v5.26h-4.92zM4.77 342.22h5.27v5.26h-5.27zM15.30 342.22h5.27v5.26h-5.27zM25.83 342.22h5.27v5.26h-5.27zM36.35 342.22h5.26v5.26h-5.26zM46.88 342.22h5.27v5.26h-5.27zM57.41 342.22h5.27v5.26h-5.27zM67.94 342.22h5.27v5.26h-5.27zM78.47 342.22h5.27v5.26h-5.27zM89.00 342.22h5.27v5.26h-5.27zM99.53 342.22h5.26v5.26h-5.26zM110.06 342.22h5.26v5.26h-5.26zM120.59 342.22h5.26v5.26h-5.26zM131.12 342.22h5.26v5.26h-5.26zM141.66 342.22h5.26v5.26h-5.26zM152.19 342.22h5.26v5.26h-5.26zM162.72 342.22h5.26v5.26h-5.26zM173.24 342.22h5.26v5.26h-5.26zM183.77 342.22h5.26v5.26h-5.26zM194.30 342.22h5.26v5.26h-5.26zM204.83 342.22h5.26v5.26h-5.26zM215.36 342.22h5.26v5.26h-5.26zM225.89 342.22h5.26v5.26h-5.26zM236.42 342.22h5.26v5.26h-5.26zM246.95 342.22h5.26v5.26h-5.26zM257.48 342.22h5.26v5.26h-5.26zM268.01 342.22h5.26v5.26h-5.26zM278.54 342.22h5.26v5.26h-5.26zM289.07 342.22h5.26v5.26h-5.26zM299.60 342.22h5.26v5.26h-5.26zM310.13 342.22h5.26v5.26h-5.26zM320.66 342.22h5.26v5.26h-5.26zM331.19 342.22h5.26v5.26h-5.26zM341.72 342.22h5.26v5.26h-5.26zM352.25 342.22h5.26v5.26h-5.26zM362.78 342.22h5.26v5.26h-5.26zM373.31 342.22h5.26v5.26h-5.26zM0.00 347.49h4.77v5.26h-4.77zM10.03 347.49h5.27v5.26h-5.27zM20.56 347.49h5.27v5.26h-5.27zM31.09 347.49h5.27v5.26h-5.27zM41.62 347.49h5.27v5.26h-5.27zM52.15 347.49h5.27v5.26h-5.27zM62.68 347.49h5.27v5.26h-5.27zM73.21 347.49h5.27v5.26h-5.27zM83.74 347.49h5.27v5.26h-5.27zM94.27 347.49h5.27v5.26h-5.27zM104.80 347.49h5.26v5.26h-5.26zM115.33 347.49h5.26v5.26h-5.26zM125.86 347.49h5.26v5.26h-5.26zM136.39 347.49h5.26v5.26h-5.26zM146.92 347.49h5.26v5.26h-5.26zM157.45 347.49h5.26v5.26h-5.26zM167.98 347.49h5.26v5.26h-5.26zM178.51 347.49h5.26v5.26h-5.26zM189.04 347.49h5.26v5.26h-5.26zM199.57 347.49h5.26v5.26h-5.26zM210.10 347.49h5.26v5.26h-5.26zM220.63 347.49h5.26v5.26h-5.26zM231.16 347.49h5.26v5.26h-5.26zM241.69 347.49h5.26v5.26h-5.26zM252.22 347.49h5.26v5.26h-5.26zM262.75 347.49h5.26v5.26h-5.26zM273.28 347.49h5.26v5.26h-5.26zM283.81 347.49h5.26v5.26h-5.26zM294.34 347.49h5.26v5.26h-5.26zM304.87 347.49h5.26v5.26h-5.26zM315.40 347.49h5.26v5.26h-5.26zM325.93 347.49h5.26v5.26h-5.26zM336.46 347.49h5.26v5.26h-5.26zM346.99 347.49h5.26v5.26h-5.26zM357.52 347.49h5.26v5.26h-5.26zM368.05 347.49h5.26v5.26h-5.26zM378.58 347.49h4.92v5.26h-4.92zM4.77 352.75h5.27v5.26h-5.27zM15.30 352.75h5.27v5.26h-5.27zM25.83 352.75h5.27v5.26h-5.27zM36.35 352.75h5.26v5.26h-5.26zM46.88 352.75h5.27v5.26h-5.27zM57.41 352.75h5.27v5.26h-5.27zM67.94 352.75h5.27v5.26h-5.27zM78.47 352.75h5.27v5.26h-5.27zM89.00 352.75h5.27v5.26h-5.27zM99.53 352.75h5.26v5.26h-5.26zM110.06 352.75h5.26v5.26h-5.26zM120.59 352.75h5.26v5.26h-5.26zM131.12 352.75h5.26v5.26h-5.26zM141.66 352.75h5.26v5.26h-5.26zM152.19 352.75h5.26v5.26h-5.26zM162.72 352.75h5.26v5.26h-5.26zM173.24 352.75h5.26v5.26h-5.26zM183.77 352.75h5.26v5.26h-5.26zM194.30 352.75h5.26v5.26h-5.26zM204.83 352.75h5.26v5.26h-5.26zM215.36 352.75h5.26v5.26h-5.26zM225.89 352.75h5.26v5.26h-5.26zM236.42 352.75h5.26v5.26h-5.26zM246.95 352.75h5.26v5.26h-5.26zM257.48 352.75h5.26v5.26h-5.26zM268.01 352.75h5.26v5.26h-5.26zM278.54 352.75h5.26v5.26h-5.26zM289.07 352.75h5.26v5.26h-5.26zM299.60 352.75h5.26v5.26h-5.26zM310.13 352.75h5.26v5.26h-5.26zM320.66 352.75h5.26v5.26h-5.26zM331.19 352.75h5.26v5.26h-5.26zM341.72 352.75h5.26v5.26h-5.26zM352.25 352.75h5.26v5.26h-5.26zM362.78 352.75h5.26v5.26h-5.26zM373.31 352.75h5.26v5.26h-5.26zM0.00 358.02h4.77v5.26h-4.77zM10.03 358.02h5.27v5.26h-5.27zM20.56 358.02h5.27v5.26h-5.27zM31.09 358.02h5.27v5.26h-5.27zM41.62 358.02h5.27v5.26h-5.27zM52.15 358.02h5.27v5.26h-5.27zM62.68 358.02h5.27v5.26h-5.27zM73.21 358.02h5.27v5.26h-5.27zM83.74 358.02h5.27v5.26h-5.27zM94.27 358.02h5.27v5.26h-5.27zM104.80 358.02h5.26v5.26h-5.26zM115.33 358.02h5.26v5.26h-5.26zM125.86 358.02h5.26v5.26h-5.26zM136.39 358.02h5.26v5.26h-5.26zM146.92 358.02h5.26v5.26h-5.26zM157.45 358.02h5.26v5.26h-5.26zM167.98 358.02h5.26v5.26h-5.26zM178.51 358.02h5.26v5.26h-5.26zM189.04 358.02h5.26v5.26h-5.26zM199.57 358.02h5.26v5.26h-5.26zM210.10 358.02h5.26v5.26h-5.26zM220.63 358.02h5.26v5.26h-5.26zM231.16 358.02h5.26v5.26h-5.26zM241.69 358.02h5.26v5.26h-5.26zM252.22 358.02h5.26v5.26h-5.26zM262.75 358.02h5.26v5.26h-5.26zM273.28 358.02h5.26v5.26h-5.26zM283.81 358.02h5.26v5.26h-5.26zM294.34 358.02h5.26v5.26h-5.26zM304.87 358.02h5.26v5.26h-5.26zM315.40 358.02h5.26v5.26h-5.26zM325.93 358.02h5.26v5.26h-5.26zM336.46 358.02h5.26v5.26h-5.26zM346.99 358.02h5.26v5.26h-5.26zM357.52 358.02h5.26v5.26h-5.26zM368.05 358.02h5.26v5.26h-5.26zM378.58 358.02h4.92v5.26h-4.92zM4.77 363.28h5.27v5.26h-5.27zM15.30 363.28h5.27v5.26h-5.27zM25.83 363.28h5.27v5.26h-5.27zM36.35 363.28h5.26v5.26h-5.26zM46.88 363.28h5.27v5.26h-5.27zM57.41 363.28h5.27v5.26h-5.27zM67.94 363.28h5.27v5.26h-5.27zM78.47 363.28h5.27v5.26h-5.27zM89.00 363.28h5.27v5.26h-5.27zM99.53 363.28h5.26v5.26h-5.26zM110.06 363.28h5.26v5.26h-5.26zM120.59 363.28h5.26v5.26h-5.26zM131.12 363.28h5.26v5.26h-5.26zM141.66 363.28h5.26v5.26h-5.26zM152.19 363.28h5.26v5.26h-5.26zM162.72 363.28h5.26v5.26h-5.26zM173.24 363.28h5.26v5.26h-5.26zM183.77 363.28h5.26v5.26h-5.26zM194.30 363.28h5.26v5.26h-5.26zM204.83 363.28h5.26v5.26h-5.26zM215.36 363.28h5.26v5.26h-5.26zM225.89 363.28h5.26v5.26h-5.26zM236.42 363.28h5.26v5.26h-5.26zM246.95 363.28h5.26v5.26h-5.26zM257.48 363.28h5.26v5.26h-5.26zM268.01 363.28h5.26v5.26h-5.26zM278.54 363.28h5.26v5.26h-5.26zM289.07 363.28h5.26v5.26h-5.26zM299.60 363.28h5.26v5.26h-5.26zM310.13 363.28h5.26v5.26h-5.26zM320.66 363.28h5.26v5.26h-5.26zM331.19 363.28h5.26v5.26h-5.26zM341.72 363.28h5.26v5.26h-5.26zM352.25 363.28h5.26v5.26h-5.26zM362.78 363.28h5.26v5.26h-5.26zM373.31 363.28h5.26v5.26h-5.26zM0.00 368.55h4.77v5.26h-4.77zM10.03 368.55h5.27v5.26h-5.27zM20.56 368.55h5.27v5.26h-5.27zM31.09 368.55h5.27v5.26h-5.27zM41.62 368.55h5.27v5.26h-5.27zM52.15 368.55h5.27v5.26h-5.27zM62.68 368.55h5.27v5.26h-5.27zM73.21 368.55h5.27v5.26h-5.27zM83.74 368.55h5.27v5.26h-5.27zM94.27 368.55h5.27v5.26h-5.27zM104.80 368.55h5.26v5.26h-5.26zM115.33 368.55h5.26v5.26h-5.26zM125.86 368.55h5.26v5.26h-5.26zM136.39 368.55h5.26v5.26h-5.26zM146.92 368.55h5.26v5.26h-5.26zM157.45 368.55h5.26v5.26h-5.26zM167.98 368.55h5.26v5.26h-5.26zM178.51 368.55h5.26v5.26h-5.26zM189.04 368.55h5.26v5.26h-5.26zM199.57 368.55h5.26v5.26h-5.26zM210.10 368.55h5.26v5.26h-5.26zM220.63 368.55h5.26v5.26h-5.26zM231.16 368.55h5.26v5.26h-5.26zM241.69 368.55h5.26v5.26h-5.26zM252.22 368.55h5.26v5.26h-5.26zM262.75 368.55h5.26v5.26h-5.26zM273.28 368.55h5.26v5.26h-5.26zM283.81 368.55h5.26v5.26h-5.26zM294.34 368.55h5.26v5.26h-5.26zM304.87 368.55h5.26v5.26h-5.26zM315.40 368.55h5.26v5.26h-5.26zM325.93 368.55h5.26v5.26h-5.26zM336.46 368.55h5.26v5.26h-5.26zM346.99 368.55h5.26v5.26h-5.26zM357.52 368.55h5.26v5.26h-5.26zM368.05 368.55h5.26v5.26h-5.26zM378.58 368.55h4.92v5.26h-4.92zM4.77 373.81h5.27v5.26h-5.27zM15.30 373.81h5.27v5.26h-5.27zM25.83 373.81h5.27v5.26h-5.27zM36.35 373.81h5.26v5.26h-5.26zM46.88 373.81h5.27v5.26h-5.27zM57.41 373.81h5.27v5.26h-5.27zM67.94 373.81h5.27v5.26h-5.27zM78.47 373.81h5.27v5.26h-5.27zM89.00 373.81h5.27v5.26h-5.27zM99.53 373.81h5.26v5.26h-5.26zM110.06 373.81h5.26v5.26h-5.26zM120.59 373.81h5.26v5.26h-5.26zM131.12 373.81h5.26v5.26h-5.26zM141.66 373.81h5.26v5.26h-5.26zM152.19 373.81h5.26v5.26h-5.26zM162.72 373.81h5.26v5.26h-5.26zM173.24 373.81h5.26v5.26h-5.26zM183.77 373.81h5.26v5.26h-5.26zM194.30 373.81h5.26v5.26h-5.26zM204.83 373.81h5.26v5.26h-5.26zM215.36 373.81h5.26v5.26h-5.26zM225.89 373.81h5.26v5.26h-5.26zM236.42 373.81h5.26v5.26h-5.26zM246.95 373.81h5.26v5.26h-5.26zM257.48 373.81h5.26v5.26h-5.26zM268.01 373.81h5.26v5.26h-5.26zM278.54 373.81h5.26v5.26h-5.26zM289.07 373.81h5.26v5.26h-5.26zM299.60 373.81h5.26v5.26h-5.26zM310.13 373.81h5.26v5.26h-5.26zM320.66 373.81h5.26v5.26h-5.26zM331.19 373.81h5.26v5.26h-5.26zM341.72 373.81h5.26v5.26h-5.26zM352.25 373.81h5.26v5.26h-5.26zM362.78 373.81h5.26v5.26h-5.26zM373.31 373.81h5.26v5.26h-5.26zM0.00 379.08h4.77v5.26h-4.77zM10.03 379.08h5.27v5.26h-5.27zM20.56 379.08h5.27v5.26h-5.27zM31.09 379.08h5.27v5.26h-5.27zM41.62 379.08h5.27v5.26h-5.27zM52.15 379.08h5.27v5.26h-5.27zM62.68 379.08h5.27v5.26h-5.27zM73.21 379.08h5.27v5.26h-5.27zM83.74 379.08h5.27v5.26h-5.27zM94.27 379.08h5.27v5.26h-5.27zM104.80 379.08h5.26v5.26h-5.26zM115.33 379.08h5.26v5.26h-5.26zM125.86 379.08h5.26v5.26h-5.26zM136.39 379.08h5.26v5.26h-5.26zM146.92 379.08h5.26v5.26h-5.26zM157.45 379.08h5.26v5.26h-5.26zM167.98 379.08h5.26v5.26h-5.26zM178.51 379.08h5.26v5.26h-5.26zM189.04 379.08h5.26v5.26h-5.26zM199.57 379.08h5.26v5.26h-5.26zM210.10 379.08h5.26v5.26h-5.26zM220.63 379.08h5.26v5.26h-5.26zM231.16 379.08h5.26v5.26h-5.26zM241.69 379.08h5.26v5.26h-5.26zM252.22 379.08h5.26v5.26h-5.26zM262.75 379.08h5.26v5.26h-5.26zM273.28 379.08h5.26v5.26h-5.26zM283.81 379.08h5.26v5.26h-5.26zM294.34 379.08h5.26v5.26h-5.26zM304.87 379.08h5.26v5.26h-5.26zM315.40 379.08h5.26v5.26h-5.26zM325.93 379.08h5.26v5.26h-5.26zM336.46 379.08h5.26v5.26h-5.26zM346.99 379.08h5.26v5.26h-5.26zM357.52 379.08h5.26v5.26h-5.26zM368.05 379.08h5.26v5.26h-5.26zM378.58 379.08h4.92v5.26h-4.92zM4.77 384.34h5.27v5.26h-5.27zM15.30 384.34h5.27v5.26h-5.27zM25.83 384.34h5.27v5.26h-5.27zM36.35 384.34h5.26v5.26h-5.26zM46.88 384.34h5.27v5.26h-5.27zM57.41 384.34h5.27v5.26h-5.27zM67.94 384.34h5.27v5.26h-5.27zM78.47 384.34h5.27v5.26h-5.27zM89.00 384.34h5.27v5.26h-5.27zM99.53 384.34h5.26v5.26h-5.26zM110.06 384.34h5.26v5.26h-5.26zM120.59 384.34h5.26v5.26h-5.26zM131.12 384.34h5.26v5.26h-5.26zM141.66 384.34h5.26v5.26h-5.26zM152.19 384.34h5.26v5.26h-5.26zM162.72 384.34h5.26v5.26h-5.26zM173.24 384.34h5.26v5.26h-5.26zM183.77 384.34h5.26v5.26h-5.26zM194.30 384.34h5.26v5.26h-5.26zM204.83 384.34h5.26v5.26h-5.26zM215.36 384.34h5.26v5.26h-5.26zM225.89 384.34h5.26v5.26h-5.26zM236.42 384.34h5.26v5.26h-5.26zM246.95 384.34h5.26v5.26h-5.26zM257.48 384.34h5.26v5.26h-5.26zM268.01 384.34h5.26v5.26h-5.26zM278.54 384.34h5.26v5.26h-5.26zM289.07 384.34h5.26v5.26h-5.26zM299.60 384.34h5.26v5.26h-5.26zM310.13 384.34h5.26v5.26h-5.26zM320.66 384.34h5.26v5.26h-5.26zM331.19 384.34h5.26v5.26h-5.26zM341.72 384.34h5.26v5.26h-5.26zM352.25 384.34h5.26v5.26h-5.26zM362.78 384.34h5.26v5.26h-5.26zM373.31 384.34h5.26v5.26h-5.26zM0.00 389.61h4.77v5.26h-4.77zM10.03 389.61h5.27v5.26h-5.27zM20.56 389.61h5.27v5.26h-5.27zM31.09 389.61h5.27v5.26h-5.27zM41.62 389.61h5.27v5.26h-5.27zM52.15 389.61h5.27v5.26h-5.27zM62.68 389.61h5.27v5.26h-5.27zM73.21 389.61h5.27v5.26h-5.27zM83.74 389.61h5.27v5.26h-5.27zM94.27 389.61h5.27v5.26h-5.27zM104.80 389.61h5.26v5.26h-5.26zM115.33 389.61h5.26v5.26h-5.26zM125.86 389.61h5.26v5.26h-5.26zM136.39 389.61h5.26v5.26h-5.26zM146.92 389.61h5.26v5.26h-5.26zM157.45 389.61h5.26v5.26h-5.26zM167.98 389.61h5.26v5.26h-5.26zM178.51 389.61h5.26v5.26h-5.26zM189.04 389.61h5.26v5.26h-5.26zM199.57 389.61h5.26v5.26h-5.26zM210.10 389.61h5.26v5.26h-5.26zM220.63 389.61h5.26v5.26h-5.26zM231.16 389.61h5.26v5.26h-5.26zM241.69 389.61h5.26v5.26h-5.26zM252.22 389.61h5.26v5.26h-5.26zM262.75 389.61h5.26v5.26h-5.26zM273.28 389.61h5.26v5.26h-5.26zM283.81 389.61h5.26v5.26h-5.26zM294.34 389.61h5.26v5.26h-5.26zM304.87 389.61h5.26v5.26h-5.26zM315.40 389.61h5.26v5.26h-5.26zM325.93 389.61h5.26v5.26h-5.26zM336.46 389.61h5.26v5.26h-5.26zM346.99 389.61h5.26v5.26h-5.26zM357.52 389.61h5.26v5.26h-5.26zM368.05 389.61h5.26v5.26h-5.26zM378.58 389.61h4.92v5.26h-4.92zM4.77 394.88h5.27v5.26h-5.27zM15.30 394.88h5.27v5.26h-5.27zM25.83 394.88h5.27v5.26h-5.27zM36.35 394.88h5.26v5.26h-5.26zM46.88 394.88h5.27v5.26h-5.27zM57.41 394.88h5.27v5.26h-5.27zM67.94 394.88h5.27v5.26h-5.27zM78.47 394.88h5.27v5.26h-5.27zM89.00 394.88h5.27v5.26h-5.27zM99.53 394.88h5.26v5.26h-5.26zM110.06 394.88h5.26v5.26h-5.26zM120.59 394.88h5.26v5.26h-5.26zM131.12 394.88h5.26v5.26h-5.26zM141.66 394.88h5.26v5.26h-5.26zM152.19 394.88h5.26v5.26h-5.26zM162.72 394.88h5.26v5.26h-5.26zM173.24 394.88h5.26v5.26h-5.26zM183.77 394.88h5.26v5.26h-5.26zM194.30 394.88h5.26v5.26h-5.26zM204.83 394.88h5.26v5.26h-5.26zM215.36 394.88h5.26v5.26h-5.26zM225.89 394.88h5.26v5.26h-5.26zM236.42 394.88h5.26v5.26h-5.26zM246.95 394.88h5.26v5.26h-5.26zM257.48 394.88h5.26v5.26h-5.26zM268.01 394.88h5.26v5.26h-5.26zM278.54 394.88h5.26v5.26h-5.26zM289.07 394.88h5.26v5.26h-5.26zM299.60 394.88h5.26v5.26h-5.26zM310.13 394.88h5.26v5.26h-5.26zM320.66 394.88h5.26v5.26h-5.26zM331.19 394.88h5.26v5.26h-5.26zM341.72 394.88h5.26v5.26h-5.26zM352.25 394.88h5.26v5.26h-5.26zM362.78 394.88h5.26v5.26h-5.26zM373.31 394.88h5.26v5.26h-5.26zM0.00 400.14h4.77v2.56h-4.77zM10.03 400.14h5.27v2.56h-5.27zM20.56 400.14h5.27v2.56h-5.27zM31.09 400.14h5.27v2.56h-5.27zM41.62 400.14h5.27v2.56h-5.27zM52.15 400.14h5.27v2.56h-5.27zM62.68 400.14h5.27v2.56h-5.27zM73.21 400.14h5.27v2.56h-5.27zM83.74 400.14h5.27v2.56h-5.27zM94.27 400.14h5.27v2.56h-5.27zM104.80 400.14h5.26v2.56h-5.26zM115.33 400.14h5.26v2.56h-5.26zM125.86 400.14h5.26v2.56h-5.26zM136.39 400.14h5.26v2.56h-5.26zM146.92 400.14h5.26v2.56h-5.26zM157.45 400.14h5.26v2.56h-5.26zM167.98 400.14h5.26v2.56h-5.26zM178.51 400.14h5.26v2.56h-5.26zM189.04 400.14h5.26v2.56h-5.26zM199.57 400.14h5.26v2.56h-5.26zM210.10 400.14h5.26v2.56h-5.26zM220.63 400.14h5.26v2.56h-5.26zM231.16 400.14h5.26v2.56h-5.26zM241.69 400.14h5.26v2.56h-5.26zM252.22 400.14h5.26v2.56h-5.26zM262.75 400.14h5.26v2.56h-5.26zM273.28 400.14h5.26v2.56h-5.26zM283.81 400.14h5.26v2.56h-5.26zM294.34 400.14h5.26v2.56h-5.26zM304.87 400.14h5.26v2.56h-5.26zM315.40 400.14h5.26v2.56h-5.26zM325.93 400.14h5.26v2.56h-5.26zM336.46 400.14h5.26v2.56h-5.26zM346.99 400.14h5.26v2.56h-5.26zM357.52 400.14h5.26v2.56h-5.26zM368.05 400.14h5.26v2.56h-5.26zM378.58 400.14h4.92v2.56h-4.92z" fill="#cccccc"/></svg>
<svg style="left:185px;top:185px" width="150" height="95" viewBox="0 0 150 95"><defs>
<radialGradient id="lensL" cx="0.6" cy="0.62" r="0.62"><stop offset="0" stop-color="#2a1a1c"/><stop offset="0.55" stop-color="#1c1218"/><stop offset="1" stop-color="#0c0810"/></radialGradient>
<radialGradient id="lensR" cx="0.45" cy="0.9" r="0.75"><stop offset="0" stop-color="#3e221c"/><stop offset="0.45" stop-color="#201210"/><stop offset="0.8" stop-color="#0e0808"/><stop offset="1" stop-color="#080506"/></radialGradient>
<linearGradient id="blueb" x1="0" y1="0" x2="1" y2="0"><stop offset="0" stop-color="#3658a8"/><stop offset="0.6" stop-color="#243c80"/><stop offset="1" stop-color="#1a2050" stop-opacity="0"/></linearGradient>
<radialGradient id="hl" cx="0.5" cy="0.5" r="0.5"><stop offset="0" stop-color="#ffffff"/><stop offset="0.3" stop-color="#d8d8f4"/><stop offset="1" stop-color="#4a4a80" stop-opacity="0"/></radialGradient>
<filter id="bl" x="-5%" y="-5%" width="110%" height="110%"><feGaussianBlur stdDeviation="0.5"/></filter>
<filter id="bl2" x="-30%" y="-30%" width="160%" height="160%"><feGaussianBlur stdDeviation="1.4"/></filter>
</defs>
<g filter="url(#bl)">
<path d="M22.5 9.0 C26.2 9.1 33.8 10.5 38.6 12.2 C43.4 13.9 47.9 16.4 51.5 19.3 C55.1 22.2 58.6 26.3 60.5 29.6 C62.4 32.9 62.4 35.9 62.6 39.0 C62.8 42.1 62.8 45.0 61.5 48.0 C60.2 51.0 58.4 54.5 55.0 57.0 C51.6 59.5 45.9 62.2 41.0 63.0 C36.1 63.8 29.9 62.5 25.7 61.5 C21.5 60.5 18.7 59.4 16.0 57.0 C13.3 54.6 10.9 51.1 9.5 47.0 C8.1 42.9 7.3 36.8 7.7 32.2 C8.0 27.6 10.1 22.7 11.6 19.3 C13.1 15.9 14.9 13.3 16.7 11.6 C18.5 9.9 18.8 8.9 22.5 9.0z" fill="#070406"/>
<path d="M24.7 14.1 C27.8 14.2 34.2 15.4 38.2 16.8 C42.3 18.3 46.0 20.4 49.1 22.8 C52.1 25.2 55.1 28.7 56.6 31.4 C58.2 34.2 58.2 36.8 58.4 39.3 C58.5 41.9 58.5 44.4 57.5 46.9 C56.4 49.4 54.9 52.4 52.0 54.5 C49.1 56.6 44.3 58.9 40.2 59.5 C36.1 60.1 30.9 59.1 27.4 58.2 C23.9 57.4 21.5 56.5 19.2 54.5 C17.0 52.4 14.9 49.5 13.8 46.1 C12.6 42.6 12.0 37.5 12.3 33.6 C12.6 29.7 14.3 25.7 15.5 22.8 C16.8 19.9 18.3 17.8 19.8 16.3 C21.3 14.9 21.6 14.1 24.7 14.1z" fill="url(#lensL)"/>
<path d="M12.5 40 Q12.5 29 15.5 23 Q18 20 21.5 21.5 L20.5 55 Q14.5 50 12.5 40z" fill="url(#blueb)" filter="url(#bl2)" opacity="0.8"/>
<ellipse cx="30" cy="21" rx="12" ry="4.5" fill="#2c2a66" opacity="0.55" filter="url(#bl2)"/>
<ellipse cx="47.3" cy="36.5" rx="5.5" ry="4.2" fill="url(#hl)"/>
<path d="M56 27.5 Q59.5 30 61.5 34.5" stroke="#d8d8e8" stroke-width="1.1" fill="none" opacity="0.75"/>
<path d="M77.9 37.1 C82.6 34.5 92.6 32.9 100.6 32.7 C108.6 32.5 119.7 33.3 126.0 35.9 C132.3 38.5 136.3 43.3 138.6 48.5 C140.9 53.7 141.4 62.2 140.0 67.0 C138.6 71.8 134.9 74.5 130.0 77.5 C125.1 80.5 117.5 84.4 110.8 85.0 C104.1 85.6 96.0 84.2 90.0 81.0 C84.0 77.8 77.9 71.5 75.0 66.0 C72.1 60.5 72.0 52.8 72.5 48.0 C73.0 43.2 73.2 39.6 77.9 37.1z" fill="#070406"/>
<path d="M81.6 40.1 C85.6 37.9 94.3 36.4 101.3 36.3 C108.3 36.1 117.9 36.8 123.4 39.1 C128.9 41.3 132.4 45.5 134.4 50.0 C136.4 54.5 136.8 61.9 135.6 66.1 C134.4 70.3 131.1 72.6 126.9 75.2 C122.7 77.9 116.0 81.3 110.2 81.8 C104.4 82.3 97.3 81.0 92.1 78.3 C86.9 75.5 81.6 70.0 79.0 65.2 C76.5 60.5 76.5 53.8 76.9 49.6 C77.3 45.4 77.5 42.3 81.6 40.1z" fill="url(#lensR)"/>
<ellipse cx="77.9" cy="44.7" rx="3.2" ry="2.8" fill="url(#hl)"/>
<circle cx="126" cy="73.8" r="1" fill="#c8c8d0" opacity="0.7"/>
<circle cx="90.5" cy="77.6" r="0.8" fill="#c8c8d0" opacity="0.6"/>
</g></svg>
<div class="a" style="left:411px;top:56.5px;width:10.3px;height:422.2px;background:#383838;"></div>
<svg style="left:413.8px;top:60.7px" width="5" height="3" viewBox="0 0 5 3"><path d="M0 3 L5 3 L2.5 0z" fill="#ddd"/></svg>
<div class="a" style="left:412px;top:173.4px;width:8.5px;height:128.2px;background:#6e6e6e;border-radius:2px;background:linear-gradient(90deg,#7a7a7a,#666)"></div>
<svg style="left:413.8px;top:472.5px" width="5" height="3" viewBox="0 0 5 3"><path d="M0 0 L5 0 L2.5 3z" fill="#ddd"/></svg>
<div class="a" style="left:421.3px;top:44px;width:2.7px;height:459px;background:#2c2c2c;"></div>
<div class="a" style="left:27.5px;top:478.7px;width:394px;height:10.3px;background:#444444;"></div>
<div class="a" style="left:27.5px;top:478.7px;width:31.5px;height:10.3px;background:#2d2d2d;"></div>
<div class="a" style="left:59px;top:478.7px;width:15.5px;height:10.3px;background:#474747;"></div>
<div class="a" style="left:74.5px;top:478.7px;width:0.8px;height:10.3px;background:#383838;"></div>
<svg style="left:62.8px;top:480.3px" width="8.5" height="7.5" viewBox="0 0 8.5 7.5"><circle cx="4.2" cy="3.75" r="3.6" fill="#c8c8c8"/><path d="M3 2 L3 5.5 L5.5 5.5" stroke="#555" stroke-width="1.1" fill="none"/><path d="M4.5 1.8 L6.5 3.7 L4.5 5.2z" fill="#555"/></svg>
<div class="t" style="left:31.6px;top:481.00px;font-size:6.5px;color:#e8e8e8;font-weight:normal;font-style:normal;letter-spacing:0px;">45.44%</div>
<div class="t" style="left:104.5px;top:481.00px;font-size:6.5px;color:#dedede;font-weight:normal;font-style:normal;letter-spacing:0px;">Doc: 14.1M/28.4M</div>
<div class="a" style="left:187.7px;top:478.7px;width:7px;height:10.3px;background:#3c3c3c;"></div>
<svg style="left:189.3px;top:481.6px" width="4" height="5" viewBox="0 0 4 5"><path d="M0 0 L4 2.5 L0 5z" fill="#e4e4e4"/></svg>
<div class="a" style="left:195px;top:478.7px;width:216px;height:10.3px;background:#383838;"></div>
<svg style="left:199px;top:482.5px" width="2.5" height="3" viewBox="0 0 2.5 3"><path d="M2.5 0 L0 1.5 L2.5 3z" fill="#ddd"/></svg>
<div class="a" style="left:268.5px;top:479.6px;width:50px;height:8.5px;background:#777;border-radius:3px;background:linear-gradient(#868686,#6c6c6c)"></div>
<svg style="left:404.5px;top:482.5px" width="2.5" height="3" viewBox="0 0 2.5 3"><path d="M0 0 L2.5 1.5 L0 3z" fill="#ddd"/></svg>
<div class="a" style="left:411px;top:478.7px;width:10.3px;height:10.3px;background:#555;"></div>
<div class="a" style="left:27.5px;top:489px;width:394px;height:2px;background:#2a2a2a;"></div>
<div class="a" style="left:27.5px;top:491px;width:394px;height:12px;background:#3b3b3b;"></div>
<div class="a" style="left:28px;top:491px;width:45.5px;height:11px;background:#535353;"></div>
<div class="a" style="left:73.5px;top:491px;width:1px;height:11px;background:#333;"></div>
<div class="a" style="left:74.5px;top:491px;width:36px;height:11px;background:#454545;"></div>
<div class="t" style="left:31.6px;top:493.74px;font-size:6.8px;color:#e4e4e4;font-weight:bold;font-style:normal;letter-spacing:0px;">Mini Bridge</div>
<div class="t" style="left:78px;top:493.74px;font-size:6.8px;color:#9a9a9a;font-weight:bold;font-style:normal;letter-spacing:0px;">Timeline</div>
<svg style="left:409.8px;top:494.2px" width="10" height="5" viewBox="0 0 10 5"><path d="M0 1.5 L3.5 1.5 L1.75 3.5z" fill="#d0d0d0"/><rect x="4.5" y="0" width="5" height="1.2" fill="#999"/><rect x="4.5" y="1.9" width="5" height="1.2" fill="#999"/><rect x="4.5" y="3.8" width="5" height="1.2" fill="#999"/></svg>
<div class="a" style="left:424px;top:44px;width:24.3px;height:7.5px;background:#333333;"></div>
<svg style="left:441px;top:46px" width="5" height="3.5" viewBox="0 0 5 3.5"><path d="M2 0 L0 1.7 L2 3.4z M4.4 0 L2.4 1.7 L4.4 3.4z" fill="#e8e8e8"/></svg>
<div class="a" style="left:424px;top:51.5px;width:24.3px;height:451.5px;background:#535353;"></div>
<div class="a" style="left:424px;top:77.3px;width:24.3px;height:0.9px;background:#3e3e3e;"></div>
<div class="a" style="left:430px;top:54.5px;width:12px;height:0.7px;background:#3a3a3a;"></div>
<svg style="left:431.5px;top:61.5px" width="11" height="11.5" viewBox="0 0 11 11.5"><rect x="0.5" y="0.5" width="3" height="2.6" fill="none" stroke="#c8c8c8" stroke-width="0.8"/><rect x="0.5" y="4.3" width="3" height="2.6" fill="none" stroke="#c8c8c8" stroke-width="0.8"/><rect x="0.5" y="8.1" width="3" height="2.6" fill="#c8c8c8" stroke="#c8c8c8" stroke-width="0.8"/><path d="M6 2.5 Q10 2 9.5 6 Q9 9.5 6.5 10.5" stroke="#c8c8c8" stroke-width="1" fill="none"/><path d="M5.5 0.5 L8 2.5 L5.5 4z" fill="#c8c8c8"/></svg>
<div class="a" style="left:448.3px;top:44px;width:1.7px;height:459px;background:#363636;"></div>
<div class="a" style="left:450px;top:44px;width:146px;height:7.3px;background:#333333;"></div>
<svg style="left:588px;top:46px" width="5" height="3.5" viewBox="0 0 5 3.5"><path d="M0 0 L2 1.7 L0 3.4z M2.4 0 L4.4 1.7 L2.4 3.4z" fill="#e8e8e8"/></svg>
<div class="a" style="left:450px;top:51.3px;width:146px;height:11.4px;background:#3e3e3e;"></div>
<div class="a" style="left:450px;top:51.3px;width:26px;height:11.4px;background:#464646;"></div>
<div class="a" style="left:477px;top:51.3px;width:40.5px;height:11.4px;background:#464646;"></div>
<div class="a" style="left:518px;top:51.3px;width:42px;height:11.4px;background:#535353;"></div>
<div class="t" style="left:454.4px;top:55.26px;font-size:6.9px;color:#a8a8a8;font-weight:bold;font-style:normal;letter-spacing:0px;">Color</div>
<div class="t" style="left:481px;top:55.26px;font-size:6.9px;color:#a8a8a8;font-weight:bold;font-style:normal;letter-spacing:-0.05px;">Swatches</div>
<div class="t" style="left:521.8px;top:55.26px;font-size:6.9px;color:#ececec;font-weight:bold;font-style:normal;letter-spacing:-0.1px;">Properties</div>
<svg style="left:584px;top:54.5px" width="10" height="5.5" viewBox="0 0 10 5.5"><path d="M0 1.6 L3.2 1.6 L1.6 3.4z" fill="#d0d0d0"/><rect x="4.2" y="0" width="5.5" height="1.2" fill="#a8a8a8"/><rect x="4.2" y="2" width="5.5" height="1.2" fill="#a8a8a8"/><rect x="4.2" y="4" width="5.5" height="1.2" fill="#a8a8a8"/></svg>
<div class="a" style="left:450px;top:62.7px;width:146px;height:130.6px;background:#535353;"></div>
<div class="a" style="left:457px;top:66.8px;width:15px;height:14.5px;background:#2e2e2e;border-radius:2px"></div>
<div class="a" style="left:458.5px;top:68.5px;width:12px;height:11px;background:#9a9a9a;background:linear-gradient(#b0b0b0,#8a8a8a);border-radius:1px"></div>
<div class="a" style="left:462.3px;top:72px;width:4.4px;height:4.4px;background:#262626;border-radius:50%"></div>
<div class="t" style="left:475.8px;top:71.11px;font-size:7.2px;color:#f2f2f2;font-weight:bold;font-style:normal;letter-spacing:-0.05px;">Masks</div>
<div class="a" style="left:450px;top:84.2px;width:136.5px;height:0.8px;background:#404040;"></div>
<div class="a" style="left:450px;top:85px;width:136.5px;height:0.6px;background:#5c5c5c;"></div>
<svg style="left:454.3px;top:92.2px" width="21.7" height="16.5" viewBox="0 0 21.7 16.5"><svg viewBox="0 0 22 17" width="21.7" height="16.5" preserveAspectRatio="none" style="position:static"><defs><linearGradient id="skp" x1="0" y1="0" x2="0" y2="1"><stop offset="0" stop-color="#6cb4e8"/><stop offset="0.7" stop-color="#a6d4f0"/><stop offset="0.78" stop-color="#d8c890"/><stop offset="1" stop-color="#c0a060"/></linearGradient></defs><rect x="0" y="0" width="22" height="17" fill="#2a2a2a"/><rect x="1" y="1" width="20" height="15" fill="url(#skp)"/><path d="M5 16 Q4 11 6 8 Q5 4 8 2.5 Q11 1.5 12 4 L11 9 Q13 12 13 16z" fill="#d8d4d0"/><path d="M10 2 Q13 1.5 14.5 4 Q15 7 16 9 Q17.5 11 15.5 13 L14 16 L12 16 Q13 11 11.5 8 Q10.5 5 10 2z" fill="#201812"/><path d="M8.5 5 Q10.5 4.5 11.5 6 Q11.5 8.5 9.8 9 Q8 8.5 8.5 5z" fill="#e0c0a8"/><path d="M6 16 Q6.5 11.5 9 11 Q12 11 12.5 16z" fill="#f4ece4"/></svg></svg>
<div class="t" style="left:480px;top:98.21px;font-size:6.6px;color:#ececec;font-weight:normal;font-style:italic;letter-spacing:-0.1px;">No mask selected</div>
<div class="a" style="left:552.5px;top:97px;width:10.5px;height:8px;background:#9a9a9a;background:linear-gradient(#b8b8b8,#8c8c8c);border-radius:1px"></div>
<div class="a" style="left:555.8px;top:99.1px;width:3.8px;height:3.8px;background:#262626;border-radius:50%"></div>
<svg style="left:568.8px;top:96px" width="10.5" height="9.5" viewBox="0 0 10.5 9.5"><rect x="0.5" y="0.5" width="7" height="7" fill="none" stroke="#c4c4c4" stroke-width="0.9" stroke-dasharray="2 1"/><rect x="0" y="0" width="1.8" height="1.8" fill="#ddd"/><rect x="6" y="0" width="1.8" height="1.8" fill="#ddd"/><rect x="0" y="6" width="1.8" height="1.8" fill="#ddd"/><circle cx="7.5" cy="7" r="2.4" fill="#535353" stroke="#ddd" stroke-width="0.8"/><path d="M7.5 5.6 L7.5 8.4 M6.1 7 L8.9 7" stroke="#ddd" stroke-width="0.7"/></svg>
<div class="a" style="left:450px;top:121.3px;width:136.5px;height:0.8px;background:#404040;"></div>
<div class="a" style="left:450px;top:122.1px;width:136.5px;height:0.6px;background:#5c5c5c;"></div>
<div class="t" style="left:458.2px;top:137.04px;font-size:6.8px;color:#b8b8b8;font-weight:normal;font-style:normal;letter-spacing:-0.05px;">Density:</div>
<div class="a" style="left:542px;top:133px;width:36px;height:12px;background:#4a4a4a;border-radius:1px"></div>
<div class="a" style="left:458.4px;top:147.5px;width:119.6px;height:3px;background:#2e2e2e;border-radius:1.5px"></div>
<div class="t" style="left:458.2px;top:172.44px;font-size:6.8px;color:#b8b8b8;font-weight:normal;font-style:normal;letter-spacing:-0.05px;">Feather:</div>
<div class="a" style="left:542px;top:168.8px;width:36px;height:11.6px;background:#4a4a4a;border-radius:1px"></div>
<div class="a" style="left:458.4px;top:183px;width:119.6px;height:3px;background:#2e2e2e;border-radius:1.5px"></div>
<div class="a" style="left:586.5px;top:86.4px;width:9.8px;height:106.9px;background:#3a3a3a;"></div>
<svg style="left:589.3px;top:90px" width="4.5" height="2.8" viewBox="0 0 4.5 2.8"><path d="M0 2.8 L4.5 2.8 L2.25 0z" fill="#ddd"/></svg>
<div class="a" style="left:587.5px;top:98px;width:8.2px;height:50.2px;background:#747474;border-radius:2px;background:linear-gradient(90deg,#808080,#6a6a6a)"></div>
<svg style="left:589.3px;top:188.2px" width="4.5" height="2.8" viewBox="0 0 4.5 2.8"><path d="M0 0 L4.5 0 L2.25 2.8z" fill="#ddd"/></svg>
<div class="a" style="left:450px;top:193.3px;width:146px;height:12px;background:#545454;"></div>
<div class="a" style="left:450px;top:193.3px;width:146px;height:0.7px;background:#474747;"></div>
<svg style="left:509px;top:196px" width="9" height="8" viewBox="0 0 9 8"><circle cx="4.3" cy="4" r="3.4" fill="none" stroke="#7a7a7a" stroke-width="1" stroke-dasharray="1.2 1"/></svg>
<svg style="left:527.5px;top:195.8px" width="10.5" height="8.5" viewBox="0 0 10.5 8.5"><path d="M5.2 0.5 L10 4.2 L5.2 8 L0.5 4.2z" fill="none" stroke="#7c7c7c" stroke-width="1.2"/><path d="M5.2 2 L5.2 5.5 M3.8 4 L5.2 5.5 L6.6 4" stroke="#7c7c7c" stroke-width="0.9" fill="none"/></svg>
<svg style="left:550px;top:197.5px" width="8.5" height="5" viewBox="0 0 8.5 5"><path d="M0.3 2.5 Q4.2 -1.2 8.2 2.5 Q4.2 6.2 0.3 2.5z" fill="#7a7a7a"/><circle cx="4.2" cy="2.5" r="1.2" fill="#545454"/></svg>
<svg style="left:569px;top:196px" width="7" height="8" viewBox="0 0 7 8"><rect x="0.8" y="2" width="5.4" height="5.8" fill="none" stroke="#767676" stroke-width="0.9"/><rect x="0" y="1" width="7" height="1" fill="#767676"/><rect x="2.3" y="0" width="2.4" height="1" fill="#767676"/></svg>
<svg style="left:588px;top:198px" width="7" height="6.5" viewBox="0 0 7 6.5"><path d="M0.5 6 L6.5 0 M3 6 L6.5 2.5" stroke="#666" stroke-width="0.7"/></svg>
<div class="a" style="left:450px;top:205.3px;width:146px;height:2.3px;background:#2e2e2e;"></div>
<div class="a" style="left:450px;top:207.6px;width:146px;height:10.8px;background:#3e3e3e;"></div>
<div class="a" style="left:450px;top:207.6px;width:49.8px;height:10.8px;background:#535353;"></div>
<div class="a" style="left:500.5px;top:207.6px;width:28px;height:10.8px;background:#464646;"></div>
<div class="t" style="left:454.03px;top:210.96px;font-size:6.9px;color:#ececec;font-weight:bold;font-style:normal;letter-spacing:-0.035px;">Adjustments</div>
<div class="t" style="left:504.01px;top:210.96px;font-size:6.9px;color:#a8a8a8;font-weight:bold;font-style:normal;letter-spacing:-0.014px;">Styles</div>
<svg style="left:584px;top:211px" width="10" height="5.5" viewBox="0 0 10 5.5"><path d="M0 1.6 L3.2 1.6 L1.6 3.4z" fill="#d0d0d0"/><rect x="4.2" y="0" width="5.5" height="1.2" fill="#a8a8a8"/><rect x="4.2" y="2" width="5.5" height="1.2" fill="#a8a8a8"/><rect x="4.2" y="4" width="5.5" height="1.2" fill="#a8a8a8"/></svg>
<div class="a" style="left:450px;top:218.4px;width:146px;height:67px;background:#535353;"></div>
<div class="t" style="left:456.02px;top:223.99px;font-size:7.1px;color:#f0f0f0;font-weight:bold;font-style:normal;letter-spacing:-0.128px;">Add an adjustment</div>
<svg style="left:479.8px;top:234.7px" width="12" height="11" viewBox="0 0 12 11"><circle cx="6" cy="5.5" r="2.6" fill="#ddd"/><path d="M6 5.5 L6 2.9 A2.6 2.6 0 0 0 6 8.1z" fill="#555"/><g stroke="#ddd" stroke-width="0.9"><path d="M6 0 L6 1.6 M6 9.4 L6 11 M0.5 5.5 L2.1 5.5 M9.9 5.5 L11.5 5.5 M2.1 1.6 L3.2 2.7 M8.8 8.3 L9.9 9.4 M2.1 9.4 L3.2 8.3 M8.8 2.7 L9.9 1.6"/></g></svg>
<svg style="left:495.8px;top:234.7px" width="12" height="11" viewBox="0 0 12 11"><path d="M0 10 L0 5 L1.5 3 L2.5 5 L4 1.5 L5 5 L6.5 2 L7.5 5 L9 1 L10 4.5 L11.5 3 L12 10z" fill="#bdbdbd"/><rect x="0" y="7" width="12" height="3" fill="#d8d8d8"/></svg>
<svg style="left:512px;top:234.7px" width="12" height="11" viewBox="0 0 12 11"><rect x="0.5" y="1" width="10.5" height="9" fill="#5c5c5c" stroke="#c4c4c4" stroke-width="0.9"/><path d="M1 9.5 Q5 8 6 5 Q7 2 10.5 1.5" stroke="#eee" stroke-width="1" fill="none"/><path d="M0.5 4 L11 4 M0.5 7 L11 7 M4 1 L4 10 M7.5 1 L7.5 10" stroke="#888" stroke-width="0.5"/></svg>
<svg style="left:527.8px;top:234.7px" width="12" height="11" viewBox="0 0 12 11"><rect x="0.5" y="1" width="11" height="9" fill="#666" stroke="#c4c4c4" stroke-width="0.9"/><path d="M1 10 L11.5 1 L11.5 10z" fill="#9a9a9a"/><path d="M2 4.5 L5 4.5 M3.5 3 L3.5 6 M7 7.5 L10 7.5" stroke="#eee" stroke-width="0.9"/></svg>
<svg style="left:543.6px;top:234.7px" width="12" height="11" viewBox="0 0 12 11"><path d="M0.5 1 L11 1 L5.75 10.5z" fill="#a8a8a8" stroke="#c8c8c8" stroke-width="0.8"/><path d="M3 2.5 L8.5 2.5 L5.75 7z" fill="#6a6a6a"/></svg>
<svg style="left:472.8px;top:253px" width="12" height="11" viewBox="0 0 12 11"><rect x="0.5" y="0.5" width="10.5" height="9.5" fill="#777" stroke="#c4c4c4" stroke-width="0.8"/><path d="M1 10 L1 5 L11 9z" fill="#333"/><path d="M2 0.5 L2 4 M4.5 0.5 L4.5 4 M7 0.5 L7 4 M9.5 0.5 L9.5 4" stroke="#ddd" stroke-width="0.7"/></svg>
<svg style="left:488.2px;top:252.5px" width="12" height="11" viewBox="0 0 12 11"><path d="M5.75 0 L5.75 9 M1 2.5 L10.5 2.5 M3 10 L8.5 10" stroke="#c4c4c4" stroke-width="0.9"/><path d="M1 2.5 L-0.5 6.5 L2.5 6.5z M10.5 2.5 L9 6.5 L12 6.5z" fill="none" stroke="#c4c4c4" stroke-width="0.8"/><path d="M-0.5 6.5 Q1 8.5 2.5 6.5 M9 6.5 Q10.5 8.5 12 6.5" stroke="#c4c4c4" stroke-width="0.9" fill="none"/></svg>
<svg style="left:504px;top:253px" width="12" height="11" viewBox="0 0 12 11"><rect x="0.5" y="0.5" width="10.5" height="9.5" fill="#e0e0e0" stroke="#c4c4c4" stroke-width="0.8"/><rect x="0.5" y="0.5" width="4.5" height="9.5" fill="#505050" stroke="#c4c4c4" stroke-width="0.8"/></svg>
<svg style="left:520px;top:252.5px" width="12" height="11" viewBox="0 0 12 11"><rect x="0.5" y="1.5" width="9" height="7.5" fill="#9a9a9a" stroke="#c4c4c4" stroke-width="0.8"/><circle cx="5" cy="5.2" r="2.2" fill="#444"/><circle cx="8" cy="8" r="3" fill="#666" stroke="#c4c4c4" stroke-width="0.8"/></svg>
<svg style="left:535.7px;top:252.5px" width="12" height="11" viewBox="0 0 12 11"><circle cx="5.5" cy="3.3" r="3" fill="#c8c8c8"/><circle cx="3.4" cy="7" r="3" fill="#b8b8b8"/><circle cx="7.6" cy="7" r="3" fill="#d0d0d0"/><path d="M5.5 4.5 L4.5 6.3 L6.5 6.3z" fill="#444"/></svg>
<svg style="left:551.5px;top:253px" width="12" height="11" viewBox="0 0 12 11"><rect x="0.5" y="0.5" width="10.5" height="9.5" fill="#888" stroke="#c4c4c4" stroke-width="0.8"/><path d="M0.5 3.5 L11 3.5 M0.5 6.7 L11 6.7 M4 0.5 L4 10 M7.5 0.5 L7.5 10" stroke="#c4c4c4" stroke-width="0.8"/></svg>
<svg style="left:480.8px;top:271px" width="12" height="11" viewBox="0 0 12 11"><rect x="0.5" y="0.5" width="10" height="8.5" fill="#888" stroke="#c4c4c4" stroke-width="0.8"/><path d="M1 9 L10 1" stroke="#333" stroke-width="1.8"/><ellipse cx="5" cy="5" rx="2.5" ry="1.8" fill="#444"/></svg>
<svg style="left:496.6px;top:271px" width="12" height="11" viewBox="0 0 12 11"><defs><linearGradient id="pg" x1="0" y1="1" x2="1" y2="0"><stop offset="0" stop-color="#555"/><stop offset="0.5" stop-color="#ccc"/><stop offset="1" stop-color="#777"/></linearGradient></defs><rect x="0.5" y="0.5" width="10" height="8.5" fill="url(#pg)" stroke="#c4c4c4" stroke-width="0.8"/><path d="M1 8 L9.5 1.5" stroke="#eee" stroke-width="1"/></svg>
<svg style="left:512px;top:271px" width="12" height="11" viewBox="0 0 12 11"><rect x="0.5" y="0.5" width="10.5" height="8.5" fill="#d8d8d8" stroke="#c4c4c4" stroke-width="0.8"/><path d="M0.5 9 L0.5 7 L3 6 L5 5 L7 3.5 L11 1.5 L11 9z" fill="#333"/><path d="M1 7.5 L4 5 L6 5.5 L10 2" stroke="#eee" stroke-width="0.8" fill="none"/></svg>
<svg style="left:528.3px;top:271px" width="12" height="11" viewBox="0 0 12 11"><rect x="0.5" y="0.5" width="10" height="8.5" fill="#ccc" stroke="#c4c4c4" stroke-width="0.8"/><path d="M0.5 0.5 L5.5 4.75 L0.5 9z M10.5 0.5 L5.5 4.75 L10.5 9z" fill="#555"/></svg>
<svg style="left:544px;top:271px" width="12" height="11" viewBox="0 0 12 11"><defs><linearGradient id="gm"><stop offset="0" stop-color="#222"/><stop offset="1" stop-color="#ddd"/></linearGradient></defs><rect x="0.5" y="0.5" width="10.5" height="8.5" fill="url(#gm)" stroke="#c4c4c4" stroke-width="0.8"/></svg>
<div class="a" style="left:450px;top:285.4px;width:146px;height:2.6px;background:#2e2e2e;"></div>
<div class="a" style="left:450px;top:288px;width:146px;height:12px;background:#3e3e3e;"></div>
<div class="a" style="left:450px;top:288px;width:31.2px;height:12px;background:#535353;"></div>
<div class="a" style="left:482px;top:288px;width:36.6px;height:12px;background:#464646;"></div>
<div class="a" style="left:519.5px;top:288px;width:26.3px;height:12px;background:#464646;"></div>
<div class="t" style="left:454px;top:292.26px;font-size:6.9px;color:#ececec;font-weight:bold;font-style:normal;letter-spacing:-0.05px;">Layers</div>
<div class="t" style="left:485px;top:292.26px;font-size:6.9px;color:#a8a8a8;font-weight:bold;font-style:normal;letter-spacing:-0.05px;">Channels</div>
<div class="t" style="left:523.5px;top:292.26px;font-size:6.9px;color:#a8a8a8;font-weight:bold;font-style:normal;letter-spacing:0px;">Paths</div>
<svg style="left:584px;top:292px" width="10" height="5.5" viewBox="0 0 10 5.5"><path d="M0 1.6 L3.2 1.6 L1.6 3.4z" fill="#d0d0d0"/><rect x="4.2" y="0" width="5.5" height="1.2" fill="#a8a8a8"/><rect x="4.2" y="2" width="5.5" height="1.2" fill="#a8a8a8"/><rect x="4.2" y="4" width="5.5" height="1.2" fill="#a8a8a8"/></svg>
<div class="a" style="left:450px;top:300px;width:146px;height:190.5px;background:#535353;"></div>
<div class="a" style="left:453px;top:302.7px;width:45.75px;height:12.6px;background:#6a6a6a;border-radius:2px;background:linear-gradient(#727272,#626262);border:0.7px solid #3e3e3e"></div>
<svg style="left:457.5px;top:305.8px" width="5.5" height="5.8" viewBox="0 0 5.5 5.8"><circle cx="3.3" cy="2.3" r="1.8" fill="none" stroke="#e0e0e0" stroke-width="0.8"/><path d="M2 3.7 L0.3 5.5" stroke="#e0e0e0" stroke-width="0.9"/></svg>
<div class="t" style="left:467px;top:306.37px;font-size:6.3px;color:#eeeeee;font-weight:normal;font-style:normal;letter-spacing:0px;">Kind</div>
<svg style="left:492.5px;top:305.6px" width="3" height="6.5" viewBox="0 0 3 6.5"><path d="M0 2.5 L1.5 0.5 L3 2.5z M0 4 L1.5 6 L3 4z" fill="#e0e0e0"/></svg>
<svg style="left:506px;top:305.3px" width="10" height="10" viewBox="0 0 10 10"><rect x="0.5" y="0.5" width="9" height="7" fill="#8a8a8a" stroke="#c4c4c4" stroke-width="0.8"/><path d="M1 7 L4 3.5 L6 5.5 L7.5 4.5 L9.5 7z" fill="#555"/><circle cx="7" cy="2.5" r="0.8" fill="#ddd"/></svg>
<svg style="left:522.5px;top:305px" width="10" height="10" viewBox="0 0 10 10"><circle cx="3.8" cy="3.8" r="3.5" fill="#c8c8c8"/><path d="M3.8 0.3 A3.5 3.5 0 0 1 3.8 7.3 Q6 3.8 3.8 0.3" fill="#4a4a4a"/></svg>
<svg style="left:538.7px;top:304.5px" width="10" height="10" viewBox="0 0 10 10"><path d="M0.5 0.8 L7.5 0.8 M0.5 0.8 L0.5 2.4 M7.5 0.8 L7.5 2.4 M4 0.8 L4 7.5 M2.5 7.5 L5.5 7.5" stroke="#c8c8c8" stroke-width="1.2" fill="none"/></svg>
<svg style="left:553.7px;top:304.8px" width="10" height="10" viewBox="0 0 10 10"><rect x="1.5" y="1.5" width="6" height="6" fill="none" stroke="#c4c4c4" stroke-width="0.9"/><rect x="0" y="0" width="2.5" height="2.5" fill="#ccc"/><rect x="6.5" y="0" width="2.5" height="2.5" fill="#ccc"/><rect x="0" y="6.5" width="2.5" height="2.5" fill="#ccc"/><rect x="6.5" y="6.5" width="2.5" height="2.5" fill="#ccc"/></svg>
<svg style="left:570px;top:304.5px" width="10" height="10" viewBox="0 0 10 10"><rect x="3" y="0.5" width="5" height="5" fill="none" stroke="#c4c4c4" stroke-width="0.9"/><rect x="0.5" y="4" width="6" height="5" fill="#cfcfcf"/><path d="M2 6.5 L5 6.5" stroke="#555" stroke-width="0.7"/></svg>
<div class="a" style="left:587px;top:303px;width:5.5px;height:11px;background:#2a2a2a;border-radius:1px"></div>
<div class="a" style="left:587.6px;top:303.6px;width:4.3px;height:4px;background:#c8c8c8;"></div>
<div class="a" style="left:450px;top:316.5px;width:136px;height:0.7px;background:#424242;"></div>
<div class="a" style="left:450px;top:317.2px;width:136px;height:0.5px;background:#5c5c5c;"></div>
<div class="a" style="left:453px;top:321.3px;width:72px;height:12px;background:#6a6a6a;border-radius:2px;background:linear-gradient(#727272,#626262);border:0.7px solid #3e3e3e"></div>
<div class="t" style="left:458px;top:325.20px;font-size:6.5px;color:#eeeeee;font-weight:normal;font-style:normal;letter-spacing:0px;">Normal</div>
<svg style="left:519px;top:324.3px" width="3" height="6.5" viewBox="0 0 3 6.5"><path d="M0 2.5 L1.5 0.5 L3 2.5z M0 4 L1.5 6 L3 4z" fill="#e0e0e0"/></svg>
<div class="t" style="left:530.3px;top:325.11px;font-size:6.6px;color:#e8e8e8;font-weight:normal;font-style:normal;letter-spacing:-0.1px;">Opacity:</div>
<div class="a" style="left:558px;top:321px;width:23.75px;height:12px;background:#333333;"></div>
<div class="t" style="left:560px;top:325.20px;font-size:6.5px;color:#e8e8e8;font-weight:normal;font-style:normal;letter-spacing:-0.15px;">100%</div>
<div class="a" style="left:581.75px;top:321px;width:11.25px;height:12px;background:#6e6e6e;background:linear-gradient(#787878,#666)"></div>
<svg style="left:585.3px;top:326.5px" width="4.2" height="2.6" viewBox="0 0 4.2 2.6"><path d="M0 0 L4.2 0 L2.1 2.6z" fill="#eee"/></svg>
<div class="t" style="left:453.6px;top:343.11px;font-size:6.6px;color:#e0e0e0;font-weight:normal;font-style:normal;letter-spacing:0px;">Lock:</div>
<svg style="left:474.8px;top:342px" width="8" height="8" viewBox="0 0 8 8"><rect x="0.3" y="0.3" width="7.4" height="7.4" fill="#6a6a6a" stroke="#c8c8c8" stroke-width="0.6"/><rect x="0.3" y="0.3" width="2.5" height="2.5" fill="#e0e0e0"/><rect x="5.2" y="0.3" width="2.5" height="2.5" fill="#e0e0e0"/><rect x="2.75" y="2.75" width="2.5" height="2.5" fill="#e0e0e0"/><rect x="0.3" y="5.2" width="2.5" height="2.5" fill="#e0e0e0"/><rect x="5.2" y="5.2" width="2.5" height="2.5" fill="#e0e0e0"/></svg>
<svg style="left:488.5px;top:341.5px" width="10.5" height="9.5" viewBox="0 0 10.5 9.5"><path d="M0.3 9 Q0.5 6 3 5.8 Q4.5 6 4 7.5 Q3 9.2 0.3 9z" fill="#d0d0d0"/><path d="M3.5 6 L10 0.5" stroke="#d0d0d0" stroke-width="1.3"/></svg>
<svg style="left:503.5px;top:341.5px" width="9.5" height="9.5" viewBox="0 0 9.5 9.5"><path d="M4.75 0.5 L4.75 9 M0.5 4.75 L9 4.75" stroke="#d0d0d0" stroke-width="0.9"/><path d="M4.75 0 L3.3 1.8 L6.2 1.8z M4.75 9.5 L3.3 7.7 L6.2 7.7z M0 4.75 L1.8 3.3 L1.8 6.2z M9.5 4.75 L7.7 3.3 L7.7 6.2z" fill="#d0d0d0"/></svg>
<svg style="left:519.5px;top:341.5px" width="7" height="9.5" viewBox="0 0 7 9.5"><path d="M1.5 4 L1.5 2.5 Q1.5 0.5 3.5 0.5 Q5.5 0.5 5.5 2.5 L5.5 4" stroke="#c8c8c8" stroke-width="1" fill="none"/><rect x="0.3" y="4" width="6.4" height="5" fill="#c8c8c8"/><rect x="3" y="5.5" width="1" height="2" fill="#555"/></svg>
<div class="t" style="left:545px;top:343.11px;font-size:6.6px;color:#e8e8e8;font-weight:normal;font-style:normal;letter-spacing:-0.1px;">Fill:</div>
<div class="a" style="left:558px;top:339.3px;width:23.75px;height:11.8px;background:#333333;"></div>
<div class="t" style="left:560px;top:343.20px;font-size:6.5px;color:#e8e8e8;font-weight:normal;font-style:normal;letter-spacing:-0.15px;">100%</div>
<div class="a" style="left:581.75px;top:339.3px;width:11.25px;height:11.8px;background:#6e6e6e;background:linear-gradient(#787878,#666)"></div>
<svg style="left:585.3px;top:344.5px" width="4.2" height="2.6" viewBox="0 0 4.2 2.6"><path d="M0 0 L4.2 0 L2.1 2.6z" fill="#eee"/></svg>
<div class="a" style="left:450px;top:354px;width:136px;height:0.7px;background:#424242;"></div>
<div class="a" style="left:450px;top:354.7px;width:136px;height:0.5px;background:#5c5c5c;"></div>
<div class="a" style="left:450px;top:355.5px;width:136px;height:134.5px;background:#474747;"></div>
<div class="a" style="left:450px;top:356.3px;width:19.3px;height:20.3px;background:#535353;"></div>
<div class="a" style="left:469.3px;top:356.3px;width:116.5px;height:20.3px;background:#5a687a;"></div>
<div class="a" style="left:450px;top:376.6px;width:136px;height:0.8px;background:#3c3c3c;"></div>
<div class="a" style="left:450px;top:377.4px;width:136px;height:20.5px;background:#535353;"></div>
<div class="a" style="left:450px;top:397.9px;width:136px;height:0.8px;background:#3c3c3c;"></div>
<div class="a" style="left:585.8px;top:355.5px;width:10.2px;height:135px;background:#424242;"></div>
<svg style="left:455.8px;top:363.8px" width="8.5" height="5.5" viewBox="0 0 8.5 5.5"><path d="M0.3 2.75 Q4.25 -1.5 8.2 2.75 Q4.25 7 0.3 2.75z" fill="none" stroke="#cfcfcf" stroke-width="0.8"/><circle cx="4.25" cy="2.75" r="1.3" fill="#cfcfcf"/></svg>
<svg style="left:470.8px;top:357px" width="25" height="19" viewBox="0 0 25 19"><path d="M0.5 4 L0.5 0.5 L5 0.5 M20 0.5 L24.5 0.5 L24.5 4 M24.5 15 L24.5 18.5 L20 18.5 M5 18.5 L0.5 18.5 L0.5 15" stroke="#e8e8e8" stroke-width="1" fill="none"/></svg>
<svg style="left:472px;top:358px" width="21.8" height="16.5" viewBox="0 0 21.8 16.5"><svg viewBox="0 0 22 17" width="21.8" height="16.5" preserveAspectRatio="none" style="position:static"><defs><linearGradient id="skc" x1="0" y1="0" x2="0" y2="1"><stop offset="0" stop-color="#6cb4e8"/><stop offset="0.7" stop-color="#a6d4f0"/><stop offset="0.78" stop-color="#d8c890"/><stop offset="1" stop-color="#c0a060"/></linearGradient></defs><rect x="0" y="0" width="22" height="17" fill="#2a2a2a"/><rect x="1" y="1" width="20" height="15" fill="url(#skc)"/><path d="M5 16 Q4 11 6 8 Q5 4 8 2.5 Q11 1.5 12 4 L11 9 Q13 12 13 16z" fill="#d8d4d0"/><path d="M10 2 Q13 1.5 14.5 4 Q15 7 16 9 Q17.5 11 15.5 13 L14 16 L12 16 Q13 11 11.5 8 Q10.5 5 10 2z" fill="#201812"/><path d="M8.5 5 Q10.5 4.5 11.5 6 Q11.5 8.5 9.8 9 Q8 8.5 8.5 5z" fill="#e0c0a8"/><path d="M6 16 Q6.5 11.5 9 11 Q12 11 12.5 16z" fill="#f4ece4"/></svg></svg>
<svg style="left:496.3px;top:361px" width="4.5" height="10" viewBox="0 0 4.5 10"><circle cx="2.25" cy="2.6" r="1.8" fill="none" stroke="#c0c8d0" stroke-width="0.8"/><circle cx="2.25" cy="7.4" r="1.8" fill="none" stroke="#c0c8d0" stroke-width="0.8"/></svg>
<div class="a" style="left:502.8px;top:358.3px;width:21.3px;height:16.5px;background:#000000;border:0.7px solid #222"></div>
<div class="a" style="left:512px;top:362.2px;width:1.5px;height:1px;background:#f0f0f0;"></div>
<div class="a" style="left:513px;top:363px;width:1px;height:0.8px;background:#aaa;"></div>
<div class="t" style="left:530px;top:365.04px;font-size:6.8px;color:#f0f0f0;font-weight:normal;font-style:normal;letter-spacing:-0.05px;">Layer 0 copy</div>
<div class="a" style="left:456px;top:383px;width:7.6px;height:7.9px;background:#545454;border:0.8px solid #8a8a8a;border-right-color:#3a3a3a;border-bottom-color:#3a3a3a"></div>
<svg style="left:472px;top:379px" width="21.5" height="16.5" viewBox="0 0 21.5 16.5"><svg viewBox="0 0 22 17" width="21.5" height="16.5" preserveAspectRatio="none" style="position:static"><defs><linearGradient id="skd" x1="0" y1="0" x2="0" y2="1"><stop offset="0" stop-color="#6cb4e8"/><stop offset="0.7" stop-color="#a6d4f0"/><stop offset="0.78" stop-color="#d8c890"/><stop offset="1" stop-color="#c0a060"/></linearGradient></defs><rect x="0" y="0" width="22" height="17" fill="#2a2a2a"/><rect x="1" y="1" width="20" height="15" fill="url(#skd)"/><path d="M5 16 Q4 11 6 8 Q5 4 8 2.5 Q11 1.5 12 4 L11 9 Q13 12 13 16z" fill="#d8d4d0"/><path d="M10 2 Q13 1.5 14.5 4 Q15 7 16 9 Q17.5 11 15.5 13 L14 16 L12 16 Q13 11 11.5 8 Q10.5 5 10 2z" fill="#201812"/><path d="M8.5 5 Q10.5 4.5 11.5 6 Q11.5 8.5 9.8 9 Q8 8.5 8.5 5z" fill="#e0c0a8"/><path d="M6 16 Q6.5 11.5 9 11 Q12 11 12.5 16z" fill="#f4ece4"/></svg></svg>
<div class="t" style="left:499px;top:385.54px;font-size:6.8px;color:#e8e8e8;font-weight:normal;font-style:normal;letter-spacing:-0.05px;">Layer 0</div>
<svg style="left:446px;top:378px" width="26" height="26" viewBox="0 0 26 26"><path d="M10 3.2 Q17 2 22 3.8 Q25 6 23.5 10.5 Q22 16 18.5 20 Q15 23 11 22 Q6 20.5 4.5 16 Q3 11 4.5 7.5 Q6.5 4 10 3.2z" fill="none" stroke="#d8161e" stroke-width="2.5" stroke-linecap="round"/></svg>
<div class="a" style="left:450px;top:490.5px;width:146px;height:12.1px;background:#535353;"></div>
<div class="a" style="left:450px;top:490.5px;width:146px;height:0.6px;background:#3a3a3a;"></div>
<svg style="left:462.5px;top:494px" width="9" height="5" viewBox="0 0 9 5"><path d="M3.2 0.7 L1.8 0.7 Q0.4 0.7 0.4 2.5 Q0.4 4.3 1.8 4.3 L3.2 4.3 M5.8 0.7 L7.2 0.7 Q8.6 0.7 8.6 2.5 Q8.6 4.3 7.2 4.3 L5.8 4.3 M2.7 2.5 L6.3 2.5" stroke="#8a8a8a" stroke-width="0.9" fill="none"/></svg>
<div class="t" style="left:480.5px;top:493.73px;font-size:8px;color:#c8c8c8;font-weight:normal;font-style:normal;letter-spacing:0px;"><i>fx</i></div>
<svg style="left:488px;top:499px" width="2.5" height="2" viewBox="0 0 2.5 2"><path d="M0 0 L2.5 0 L1.25 1.8z" fill="#ccc"/></svg>
<svg style="left:498px;top:493.2px" width="9" height="7.5" viewBox="0 0 9 7.5"><rect x="0" y="0" width="9" height="7.5" fill="#cfcfcf"/><circle cx="4.5" cy="3.75" r="2" fill="#333"/></svg>
<svg style="left:516.8px;top:493px" width="9" height="8.5" viewBox="0 0 9 8.5"><circle cx="4" cy="4" r="3.6" fill="#cfcfcf"/><path d="M1.5 6.5 L6.5 1.5 A3.6 3.6 0 0 1 6.5 6.5z" fill="#535353"/><path d="M7 7 L9 7 L8 8.3z" fill="#ccc"/></svg>
<svg style="left:534.5px;top:493px" width="8" height="7.5" viewBox="0 0 8 7.5"><path d="M0 0.5 L3 0.5 L3.8 1.5 L8 1.5 L8 7.5 L0 7.5z" fill="#cfcfcf"/></svg>
<svg style="left:552px;top:493px" width="8" height="8" viewBox="0 0 8 8"><rect x="1" y="0" width="7" height="7" fill="#cfcfcf"/><path d="M0 4 L3 4 L3 8 L0 8z" fill="#535353"/><path d="M2 5 L2 8 M0.8 6.8 L2 8 L3.2 6.8" stroke="#cfcfcf" stroke-width="0.7" fill="none"/></svg>
<svg style="left:570px;top:492.8px" width="7" height="8.2" viewBox="0 0 7 8.2"><rect x="0.8" y="2.2" width="5.4" height="5.8" fill="none" stroke="#cfcfcf" stroke-width="0.9"/><rect x="0" y="1.2" width="7" height="1" fill="#cfcfcf"/><rect x="2.3" y="0" width="2.4" height="1.2" fill="#cfcfcf"/><path d="M2.5 3.5 L2.5 6.8 M4.5 3.5 L4.5 6.8" stroke="#cfcfcf" stroke-width="0.6"/></svg>
<div class="a" style="left:0px;top:502.3px;width:597px;height:1px;background:#2e2e2e;"></div>
<div class="a" style="left:0px;top:503.5px;width:597px;height:1.5px;background:#f2f2f2;"></div>
<div class="a" style="left:596.3px;top:0px;width:1.3px;height:505px;background:#2a2a2a;"></div>
<div class="a" style="left:597.6px;top:0px;width:2.4px;height:505px;background:#2a3440;background:linear-gradient(#2c3848 0%,#2e3846 70%,#34443c 86%,#3e5a3e 94%,#4a6a48 100%)"></div>
</body></html>
